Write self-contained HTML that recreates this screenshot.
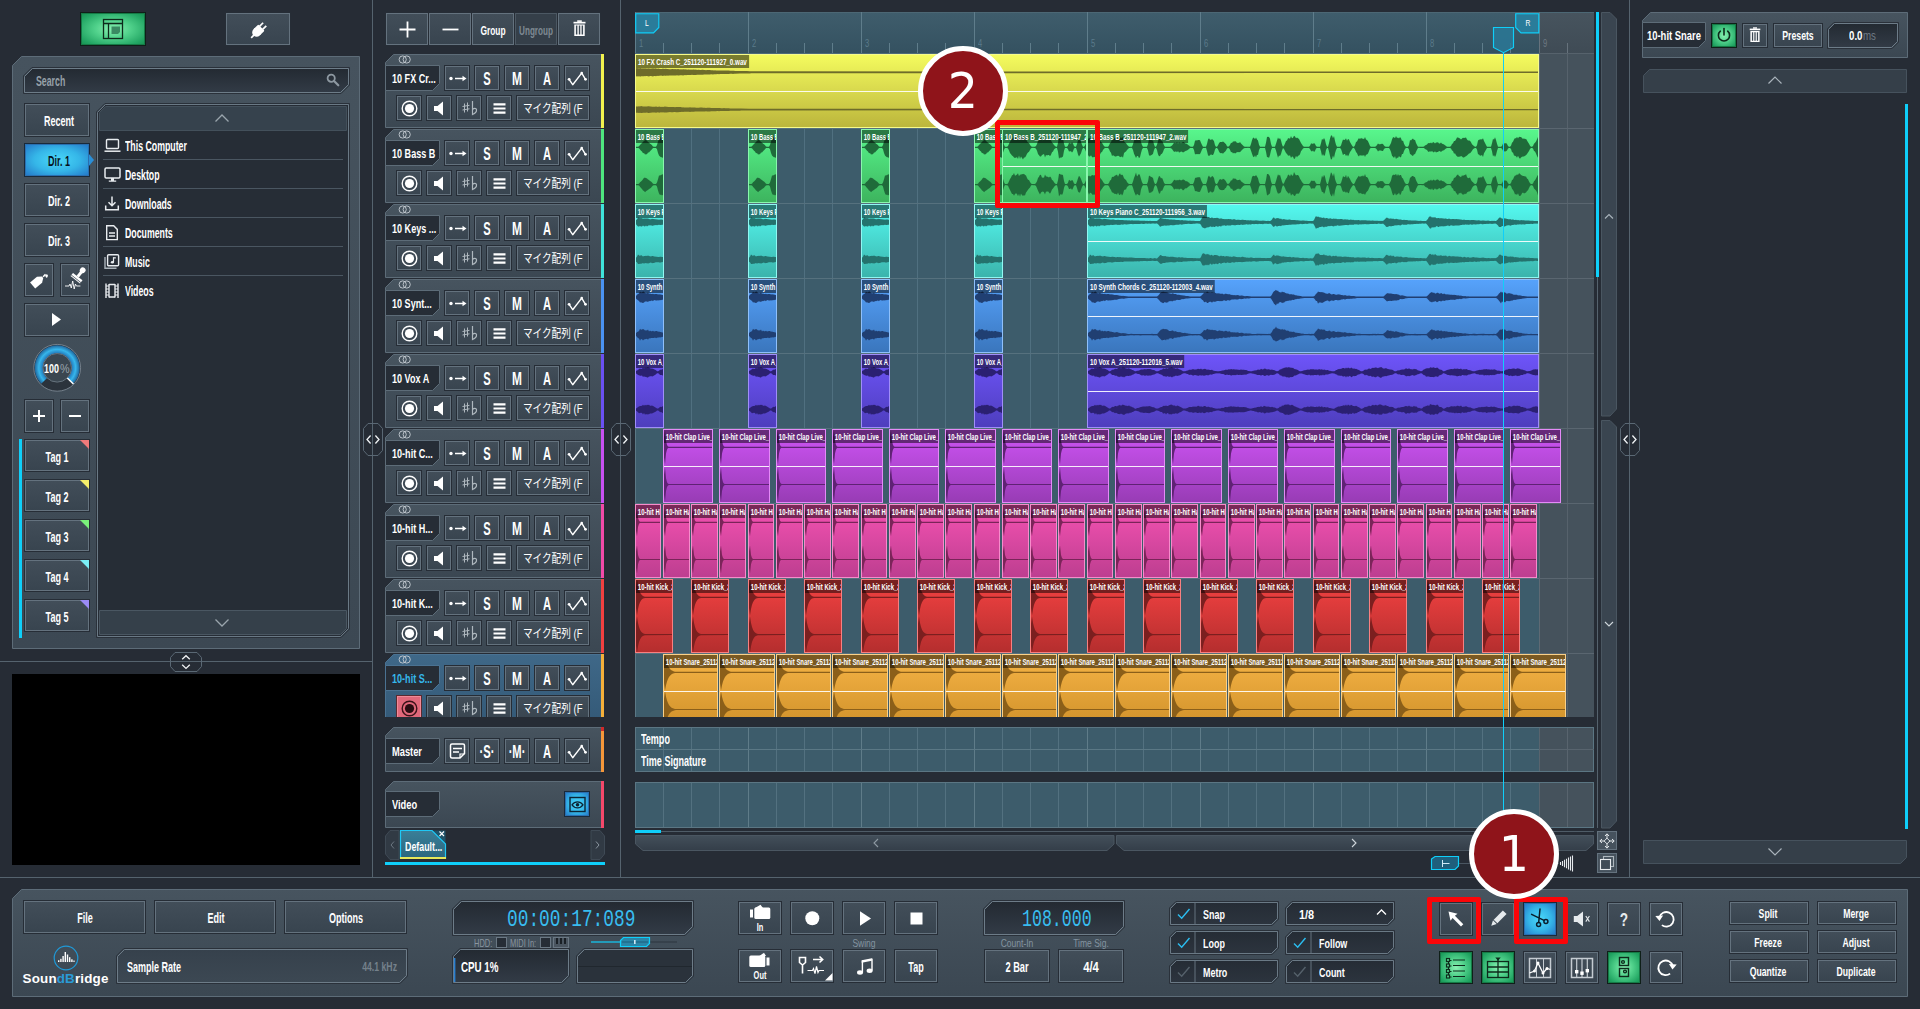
<!DOCTYPE html><html lang="en"><head><meta charset="utf-8"><title>SoundBridge</title><style>
*{box-sizing:border-box;margin:0;padding:0}
html,body{width:1920px;height:1009px;overflow:hidden;background:#262c35}
body{position:relative;font-family:"Liberation Sans","Noto Sans CJK JP",sans-serif;color:#fff}
.r,.b,.s,.t,.c{position:absolute}
.s{display:block;overflow:visible}
.t{white-space:nowrap;line-height:1;display:block}
.tc{text-align:center;transform-origin:50% 50%}
.tr{text-align:right}
.b{border:1px solid #262d36;background:linear-gradient(#424e59,#38444f);box-shadow:inset 0 0 0 1px #64727e}
.b.dis{background:#353f49;box-shadow:inset 0 0 0 1px #4c5863}
.b.grn{border-color:#0f1f18;background:radial-gradient(ellipse at 50% 50%,#8af0b2 0%,#4fd08a 40%,#22a563 80%,#16904f 100%);box-shadow:inset 0 0 0 1px #157a46}
.b.blu{border-color:#1a2a3a;background:radial-gradient(ellipse at 50% 50%,#4ad8f9 0%,#35b6e8 50%,#2374c6 100%);box-shadow:inset 0 0 0 1px #2a6fb0}
.b.red{border-color:#5a2a30;background:#e0687a;box-shadow:inset 0 0 0 1px #f08a98}
.c{overflow:hidden;border:1px solid}
.c .w{position:absolute;left:0;top:0}
.c .l{position:absolute;left:0;top:0;height:13px;line-height:14px;font-size:9.6px;font-weight:700;color:#fff;white-space:nowrap;background:rgba(0,0,0,.5);padding:0 3px 0 3px;transform:scaleX(.65);transform-origin:0 50%;overflow:hidden}
</style></head><body>
<svg width="0" height="0" style="position:absolute"><defs>
<linearGradient id="gs" x1="0" y1="0" x2="0" y2="1"><stop offset="0" stop-color="#232a32"/><stop offset="1" stop-color="#323b46"/></linearGradient>
<linearGradient id="gs2" x1="0" y1="0" x2="0" y2="1"><stop offset="0" stop-color="#252c35"/><stop offset="1" stop-color="#2c343e"/></linearGradient>
<linearGradient id="gs3" x1="0" y1="0" x2="0" y2="1"><stop offset="0" stop-color="#36414c"/><stop offset="1" stop-color="#3c4853"/></linearGradient>
<linearGradient id="gp" x1="0" y1="0" x2="0" y2="1"><stop offset="0" stop-color="#47545f"/><stop offset="1" stop-color="#3b4752"/></linearGradient>
<linearGradient id="gp2" x1="0" y1="0" x2="0" y2="1"><stop offset="0" stop-color="#46535e"/><stop offset="1" stop-color="#3c4853"/></linearGradient>
<linearGradient id="ghs" x1="0" y1="0" x2="0" y2="1"><stop offset="0" stop-color="#434f5a"/><stop offset="1" stop-color="#343e49"/></linearGradient>
<linearGradient id="gtab" x1="0" y1="0" x2="0" y2="1"><stop offset="0" stop-color="#3a7f98"/><stop offset="1" stop-color="#2b667e"/></linearGradient>
</defs></svg>
<div class="r" style="left:372px;top:0px;width:1px;height:877px;background:#55636e;"></div>
<div class="r" style="left:620px;top:0px;width:1px;height:877px;background:#55636e;"></div>
<div class="r" style="left:1629px;top:0px;width:1px;height:877px;background:#55636e;"></div>
<div class="r" style="left:0px;top:877px;width:1920px;height:1px;background:#55636e;"></div>
<div class="b grn" style="left:80px;top:12px;width:66px;height:34px;"></div>
<svg class="s" style="left:80px;top:12px;" width="66" height="34" viewBox="0 0 66 34"><g fill="none" stroke="#0e2a1c" stroke-width="1.3"><rect x="23.5" y="7.5" width="19" height="19"/><path d="M23.5 11.5h19M28.5 11.5v15"/></g><path d="M31.5 14.5h8.5v5.5l-2 2h-6.5z" fill="#3a8a63"/></svg>
<div class="b " style="left:225px;top:12px;width:66px;height:34px;"></div>
<svg class="s" style="left:226px;top:13px;" width="64" height="32" viewBox="0 0 64 32"><g transform="translate(33,17) rotate(45) scale(0.85)" fill="#fff"><rect x="-5.2" y="-4" width="10.4" height="8" rx="1.2"/><path d="M-5.2 2h10.4v2a5.2 5.2 0 0 1-10.4 0z"/><rect x="-3.6" y="-9.5" width="2" height="6"/><rect x="1.6" y="-9.5" width="2" height="6"/><rect x="-1" y="7" width="2" height="6"/></g></svg>
<svg class="s" style="left:12px;top:56px" width="348" height="593" viewBox="0 0 348 593"><polygon points="0.5,9.5 9.5,0.5 347.5,0.5 347.5,592.5 0.5,592.5" fill="url(#gp2)" stroke="#5d6c78" stroke-width="1"/></svg>
<svg class="s" style="left:23px;top:67px" width="327" height="27" viewBox="0 0 327 27"><polygon points="0.5,8.9 8.9,0.5 326.5,0.5 326.5,18.1 318.1,26.5 0.5,26.5" fill="none" stroke="#2a313a" stroke-width="1"/><polygon points="1.5,9.5 9.5,1.5 325.5,1.5 325.5,17.5 317.5,25.5 1.5,25.5" fill="url(#gs)" stroke="#6d7c88" stroke-width="1"/></svg>
<span class="t" style="left:36.0px;top:74.0px;font-size:14px;color:#97a1a9;transform:scaleX(0.626);transform-origin:0 50%;font-weight:700;">Search</span>
<svg class="s" style="left:325px;top:72px;" width="16" height="16" viewBox="0 0 16 16"><circle cx="6.2" cy="6.2" r="3.6" fill="none" stroke="#8d98a1" stroke-width="1.8"/><path d="M9 9l4.3 4.3" stroke="#8d98a1" stroke-width="2.2" stroke-linecap="round"/></svg>
<div class="b " style="left:24px;top:103px;width:66px;height:34px;"></div>
<span class="t tc" style="left:-91.0px;top:113.6px;width:300px;font-size:14px;color:#fff;transform:scaleX(0.644);font-weight:700;">Recent</span>
<div class="b blu" style="left:24px;top:143px;width:66px;height:34px;"></div>
<span class="t tc" style="left:-91.0px;top:153.6px;width:300px;font-size:14px;color:#06121c;transform:scaleX(0.644);font-weight:700;">Dir. 1</span>
<svg class="s" style="left:89px;top:154px;" width="6" height="12" viewBox="0 0 6 12"><path d="M0 0l5 6l-5 6z" fill="#2a8fd8"/></svg>
<div class="b " style="left:24px;top:183px;width:66px;height:34px;"></div>
<span class="t tc" style="left:-91.0px;top:193.6px;width:300px;font-size:14px;color:#fff;transform:scaleX(0.644);font-weight:700;">Dir. 2</span>
<div class="b " style="left:24px;top:223px;width:66px;height:34px;"></div>
<span class="t tc" style="left:-91.0px;top:233.6px;width:300px;font-size:14px;color:#fff;transform:scaleX(0.644);font-weight:700;">Dir. 3</span>
<div class="b " style="left:24px;top:263px;width:30px;height:34px;"></div>
<div class="b " style="left:60px;top:263px;width:30px;height:34px;"></div>
<svg class="s" style="left:24px;top:263px;" width="30" height="34" viewBox="0 0 30 34"><g transform="translate(14,18) rotate(-40)" fill="#fff"><path d="M-7 -4h9l4 3v2l-4 3h-9z"/><path d="M6.5 -0.6l3.5 -0.4v2l-3.5 -0.4z"/></g><ellipse cx="22.7" cy="13" rx="1.1" ry="1.7" fill="#fff" transform="rotate(20 22.7 13)"/></svg>
<svg class="s" style="left:60px;top:263px;" width="30" height="34" viewBox="0 0 30 34"><g transform="translate(19,12) rotate(38)" fill="#fff"><ellipse cx="0" cy="-6" rx="2.8" ry="3"/><rect x="-1.5" y="-5" width="3" height="7"/><path d="M-6 2h12v2.5h-12z"/><path d="M-6 5.6h12" stroke="#fff" stroke-width="1" fill="none"/></g><path d="M5 23h4l1-2 1.3 4 1.4-7 1.5 8 1.2-5 1 2h4" fill="none" stroke="#fff" stroke-width="0.9"/></svg>
<div class="b " style="left:24px;top:303px;width:66px;height:34px;"></div>
<svg class="s" style="left:24px;top:303px;" width="66" height="34" viewBox="0 0 66 34"><path d="M28 10l9 6.5l-9 6.5z" fill="#fff"/></svg>
<svg class="s" style="left:30px;top:342px;" width="54" height="54" viewBox="0 0 54 54"><defs><radialGradient id="kg" gradientUnits="userSpaceOnUse" cx="27.2" cy="25.8" r="23"><stop offset="0.6" stop-color="#1f6fb2"/><stop offset="0.8" stop-color="#36b6ec"/><stop offset="1" stop-color="#1d5c92"/></radialGradient></defs>
<circle cx="27.2" cy="25.8" r="23.4" fill="#2b333c" stroke="#7a8792" stroke-width="0.9"/>
<path d="M11.22,41.78A22.6,22.6 0 1 1 43.18,41.78L37.31,35.91A14.3,14.3 0 1 0 17.09,35.91Z" fill="url(#kg)"/>
<circle cx="27.2" cy="25.8" r="14.3" fill="#3a4650" stroke="#66737e" stroke-width="1"/>
<path d="M37.31,35.91L43.46,42.06" stroke="#fff" stroke-width="1.5"/></svg>
<span class="t" style="left:43.6px;top:362.2px;font-size:13.5px;color:#fff;transform:scaleX(0.662);transform-origin:0 50%;font-weight:700;">100</span>
<span class="t" style="left:60.0px;top:362.2px;font-size:13.5px;color:#9aa5ad;transform:scaleX(0.8);transform-origin:0 50%;font-weight:400;">%</span>
<div class="b " style="left:24px;top:399px;width:30px;height:34px;"></div>
<div class="b " style="left:60px;top:399px;width:30px;height:34px;"></div>
<svg class="s" style="left:24px;top:399px;" width="30" height="34" viewBox="0 0 30 34"><path d="M9 17h12M15 11v12" stroke="#fff" stroke-width="2" fill="none"/></svg>
<svg class="s" style="left:60px;top:399px;" width="30" height="34" viewBox="0 0 30 34"><path d="M9 17h12" stroke="#fff" stroke-width="2" fill="none"/></svg>
<div class="r" style="left:19px;top:439px;width:3px;height:199px;background:#0fcffa;"></div>
<div class="b " style="left:24px;top:439px;width:66px;height:33px;"></div>
<span class="t tc" style="left:-93.5px;top:450.0px;width:300px;font-size:14px;color:#fff;transform:scaleX(0.644);font-weight:700;">Tag 1</span>
<svg class="s" style="left:80px;top:440px;" width="9" height="9" viewBox="0 0 9 9"><path d="M0 0h9v9z" fill="#f07a7a"/></svg>
<div class="b " style="left:24px;top:479px;width:66px;height:33px;"></div>
<span class="t tc" style="left:-93.5px;top:490.0px;width:300px;font-size:14px;color:#fff;transform:scaleX(0.644);font-weight:700;">Tag 2</span>
<svg class="s" style="left:80px;top:480px;" width="9" height="9" viewBox="0 0 9 9"><path d="M0 0h9v9z" fill="#f5ee6a"/></svg>
<div class="b " style="left:24px;top:519px;width:66px;height:33px;"></div>
<span class="t tc" style="left:-93.5px;top:530.0px;width:300px;font-size:14px;color:#fff;transform:scaleX(0.644);font-weight:700;">Tag 3</span>
<svg class="s" style="left:80px;top:520px;" width="9" height="9" viewBox="0 0 9 9"><path d="M0 0h9v9z" fill="#7af07a"/></svg>
<div class="b " style="left:24px;top:559px;width:66px;height:33px;"></div>
<span class="t tc" style="left:-93.5px;top:570.0px;width:300px;font-size:14px;color:#fff;transform:scaleX(0.644);font-weight:700;">Tag 4</span>
<svg class="s" style="left:80px;top:560px;" width="9" height="9" viewBox="0 0 9 9"><path d="M0 0h9v9z" fill="#7aeef5"/></svg>
<div class="b " style="left:24px;top:599px;width:66px;height:33px;"></div>
<span class="t tc" style="left:-93.5px;top:610.0px;width:300px;font-size:14px;color:#fff;transform:scaleX(0.644);font-weight:700;">Tag 5</span>
<svg class="s" style="left:80px;top:600px;" width="9" height="9" viewBox="0 0 9 9"><path d="M0 0h9v9z" fill="#9a8af5"/></svg>
<svg class="s" style="left:96px;top:103px" width="254" height="535" viewBox="0 0 254 535"><polygon points="0.5,8.9 8.9,0.5 253.5,0.5 253.5,526.1 245.1,534.5 0.5,534.5" fill="none" stroke="#2a313a" stroke-width="1"/><polygon points="1.5,9.5 9.5,1.5 252.5,1.5 252.5,525.5 244.5,533.5 1.5,533.5" fill="#262d36" stroke="#6a7985" stroke-width="1"/></svg>
<svg class="s" style="left:99px;top:106px" width="248" height="25" viewBox="0 0 248 25"><polygon points="0.5,6.5 6.5,0.5 247.5,0.5 247.5,24.5 0.5,24.5" fill="#36424d" stroke="#43505b" stroke-width="1"/></svg>
<svg class="s" style="left:214px;top:112px;" width="16" height="12" viewBox="0 0 16 12"><path d="M1.5 9.5l6.5-6.5l6.5 6.5" fill="none" stroke="#9aa5ad" stroke-width="1.3"/></svg>
<svg class="s" style="left:99px;top:610px" width="248" height="25" viewBox="0 0 248 25"><polygon points="0.5,0.5 247.5,0.5 247.5,18.5 241.5,24.5 0.5,24.5" fill="#35404a" stroke="#4a5762" stroke-width="1"/></svg>
<svg class="s" style="left:214px;top:616.5px;" width="16" height="12" viewBox="0 0 16 12"><path d="M1.5 2.5l6.5 6.5l6.5-6.5" fill="none" stroke="#9aa5ad" stroke-width="1.3"/></svg>
<span class="t" style="left:125.0px;top:138.7px;font-size:14px;color:#fff;transform:scaleX(0.626);transform-origin:0 50%;font-weight:700;">This Computer</span>
<div class="r" style="left:103px;top:159px;width:240px;height:1px;background:#4a5661;"></div>
<span class="t" style="left:125.0px;top:167.7px;font-size:14px;color:#fff;transform:scaleX(0.626);transform-origin:0 50%;font-weight:700;">Desktop</span>
<div class="r" style="left:103px;top:188px;width:240px;height:1px;background:#4a5661;"></div>
<span class="t" style="left:125.0px;top:196.7px;font-size:14px;color:#fff;transform:scaleX(0.626);transform-origin:0 50%;font-weight:700;">Downloads</span>
<div class="r" style="left:103px;top:217px;width:240px;height:1px;background:#4a5661;"></div>
<span class="t" style="left:125.0px;top:225.7px;font-size:14px;color:#fff;transform:scaleX(0.626);transform-origin:0 50%;font-weight:700;">Documents</span>
<div class="r" style="left:103px;top:246px;width:240px;height:1px;background:#4a5661;"></div>
<span class="t" style="left:125.0px;top:254.7px;font-size:14px;color:#fff;transform:scaleX(0.626);transform-origin:0 50%;font-weight:700;">Music</span>
<div class="r" style="left:103px;top:275px;width:240px;height:1px;background:#4a5661;"></div>
<span class="t" style="left:125.0px;top:283.7px;font-size:14px;color:#fff;transform:scaleX(0.626);transform-origin:0 50%;font-weight:700;">Videos</span>
<svg class="s" style="left:104px;top:138px;" width="18" height="16" viewBox="0 0 18 16"><rect x="2.5" y="1.5" width="12" height="9" rx="1" fill="none" stroke="#e8ecef" stroke-width="1.4"/><path d="M0.5 13.2h16" stroke="#e8ecef" stroke-width="1.5"/></svg>
<svg class="s" style="left:104px;top:167px;" width="18" height="16" viewBox="0 0 18 16"><rect x="1" y="1" width="15" height="10" rx="1.2" fill="none" stroke="#e8ecef" stroke-width="1.5"/><path d="M7 11h3v2.4h2.2v1.3h-7.4v-1.3h2.2z" fill="#e8ecef"/></svg>
<svg class="s" style="left:104px;top:196px;" width="18" height="16" viewBox="0 0 18 16"><path d="M8 0.5v9M4.5 6.3l3.5 3.5l3.5-3.5" fill="none" stroke="#e8ecef" stroke-width="1.5"/><path d="M1.7 9.5v4.2h12.6v-4.2" fill="none" stroke="#e8ecef" stroke-width="1.5"/></svg>
<svg class="s" style="left:104px;top:225px;" width="18" height="16" viewBox="0 0 18 16"><path d="M2.7 0.8h7l3.6 3.6v10.2h-10.6z" fill="none" stroke="#e8ecef" stroke-width="1.4"/><path d="M5 8h6M5 11h6" stroke="#e8ecef" stroke-width="1.3"/></svg>
<svg class="s" style="left:104px;top:254px;" width="18" height="16" viewBox="0 0 18 16"><rect x="3.6" y="0.7" width="11" height="11" rx="1" fill="none" stroke="#e8ecef" stroke-width="1.4"/><path d="M1 3v11.3h11.5" fill="none" stroke="#aab3ba" stroke-width="1.4"/><path d="M9.5 3.2v5" stroke="#e8ecef" stroke-width="1.2"/><path d="M9.5 3.2h2.3v1.3h-2.3z" fill="#e8ecef"/><ellipse cx="8.4" cy="8.3" rx="1.6" ry="1.3" fill="#e8ecef"/></svg>
<svg class="s" style="left:104px;top:283px;" width="18" height="16" viewBox="0 0 18 16"><path d="M2 0.5v14.5M14 0.5v14.5M5 1v13.5M11 1v13.5" stroke="#e8ecef" stroke-width="1.4"/><path d="M5 1.5h6M5 14h6" stroke="#e8ecef" stroke-width="1.3"/><path d="M2 3h3M2 6h3M2 9h3M2 12h3M11 3h3M11 6h3M11 9h3M11 12h3" stroke="#e8ecef" stroke-width="1"/></svg>
<div class="r" style="left:0px;top:661px;width:372px;height:1px;background:#55636e;"></div>
<svg class="s" style="left:170px;top:651.5px;" width="32" height="21" viewBox="0 0 32 21"><polygon points="0.5,5.5 5,0.5 27,0.5 31.5,5.5 31.5,14.5 27,19.5 5,19.5 0.5,14.5" fill="none" stroke="#5a6874"/><path d="M12.2 7.3l3.8-3.6l3.8 3.6M12.2 12.8l3.8 3.6l3.8-3.6" fill="none" stroke="#f0f3f5" stroke-width="1.3"/></svg>
<div class="r" style="left:12px;top:674px;width:348px;height:191px;background:#000;"></div>
<div class="b " style="left:385px;top:12px;width:44px;height:34px;"></div>
<div class="b " style="left:428px;top:12px;width:44px;height:34px;"></div>
<div class="b " style="left:471px;top:12px;width:44px;height:34px;"></div>
<div class="b dis" style="left:514px;top:12px;width:44px;height:34px;"></div>
<div class="b " style="left:557px;top:12px;width:44px;height:34px;"></div>
<svg class="s" style="left:385.5px;top:12.5px;" width="43" height="33" viewBox="0 0 43 33"><path d="M13.5 16.5h16M21.5 8.5v16" stroke="#fff" stroke-width="1.8"/></svg>
<svg class="s" style="left:428.5px;top:12.5px;" width="43" height="33" viewBox="0 0 43 33"><path d="M13.5 16.5h16" stroke="#fff" stroke-width="1.8"/></svg>
<span class="t tc" style="left:343.0px;top:23.7px;width:300px;font-size:13px;color:#fff;transform:scaleX(0.644);font-weight:700;">Group</span>
<span class="t tc" style="left:386.0px;top:23.7px;width:300px;font-size:13px;color:#7f8a93;transform:scaleX(0.626);font-weight:700;">Ungroup</span>
<svg class="s" style="left:557.5px;top:12.5px;" width="43" height="33" viewBox="0 0 43 33"><g fill="#fff"><rect x="19.2" y="7.3" width="4.6" height="1.6"/><rect x="15.5" y="8.8" width="12" height="1.7"/><path d="M16.3 11.4h10.4v11.6h-10.4zM17.9 12.6v9h1.5v-9zM20.8 12.6v9h1.5v-9zM23.6 12.6v9h1.5v-9z" fill-rule="evenodd"/></g></svg>
<svg class="s" style="left:385px;top:54px" width="217" height="74" viewBox="0 0 217 74"><polygon points="0.5,8.5 8.5,0.5 216.5,0.5 216.5,73.5 0.5,73.5" fill="url(#gp)" stroke="#5d6c78" stroke-width="1"/></svg>
<div class="r" style="left:601px;top:54px;width:3px;height:74px;background:#f2f24e;"></div>
<svg class="s" style="left:398px;top:54.8px;" width="14" height="9" viewBox="0 0 14 9"><circle cx="4.7" cy="4.5" r="3.6" fill="none" stroke="#c5ccd2" stroke-width="0.9"/><circle cx="8.7" cy="4.5" r="3.6" fill="none" stroke="#c5ccd2" stroke-width="0.9"/></svg>
<svg class="s" style="left:385px;top:65px" width="55" height="26" viewBox="0 0 55 26"><polygon points="0.5,0.5 54.5,0.5 54.5,18.5 47.5,25.5 0.5,25.5" fill="#262d36" stroke="#5d6c78" stroke-width="1"/></svg>
<span class="t" style="left:392.0px;top:71.8px;font-size:13.5px;color:#fff;transform:scaleX(0.671);transform-origin:0 50%;font-weight:700;">10 FX Cr...</span>
<div class="b " style="left:444px;top:65px;width:26px;height:26px;"></div>
<div class="b " style="left:474px;top:65px;width:26px;height:26px;"></div>
<div class="b " style="left:504px;top:65px;width:26px;height:26px;"></div>
<div class="b " style="left:534px;top:65px;width:26px;height:26px;"></div>
<div class="b " style="left:564px;top:65px;width:26px;height:26px;"></div>
<svg class="s" style="left:444.5px;top:65.5px;" width="25" height="25" viewBox="0 0 25 25"><circle cx="6" cy="12.5" r="1.7" fill="#fff"/><path d="M10 12.5h9" stroke="#fff" stroke-width="1.5"/><path d="M17.5 9.7l4 2.8l-4 2.8z" fill="#fff"/></svg>
<span class="t tc" style="left:337.0px;top:69.5px;width:300px;font-size:18px;color:#fff;transform:scaleX(0.62);font-weight:700;">S</span>
<span class="t tc" style="left:367.0px;top:69.5px;width:300px;font-size:18px;color:#fff;transform:scaleX(0.66);font-weight:700;">M</span>
<span class="t tc" style="left:397.0px;top:69.5px;width:300px;font-size:18px;color:#fff;transform:scaleX(0.62);font-weight:700;">A</span>
<svg class="s" style="left:564.5px;top:65.5px;" width="25" height="25" viewBox="0 0 25 25"><path d="M4.1 13.3l3.6 5.4l9-11.6l3.8 6.2" fill="none" stroke="#fff" stroke-width="1.4" stroke-linejoin="round"/><circle cx="4.1" cy="13.3" r="1.4" fill="#fff"/><circle cx="16.7" cy="7.1" r="1.3" fill="#fff"/><circle cx="20.5" cy="13.3" r="1.4" fill="#fff"/></svg>
<div class="b " style="left:396px;top:95px;width:26px;height:26px;"></div>
<div class="b " style="left:426px;top:95px;width:26px;height:26px;"></div>
<div class="b " style="left:456px;top:95px;width:26px;height:26px;"></div>
<div class="b " style="left:486px;top:95px;width:26px;height:26px;"></div>
<div class="b " style="left:516px;top:95px;width:74px;height:26px;"></div>
<svg class="s" style="left:396.5px;top:95.5px;" width="25" height="25" viewBox="0 0 25 25"><circle cx="12.5" cy="12.5" r="7.3" fill="none" stroke="#fff" stroke-width="1.4"/><circle cx="12.5" cy="12.5" r="4.6" fill="#fff"/></svg>
<svg class="s" style="left:426.5px;top:95.5px;" width="25" height="25" viewBox="0 0 25 25"><path d="M7 10h3.5l5.5-4.5v14l-5.5-4.5h-3.5z" fill="#fff"/></svg>
<svg class="s" style="left:456.5px;top:95.5px;" width="25" height="25" viewBox="0 0 25 25"><g stroke="#aeb7be" fill="none" stroke-width="1"><path d="M7.5 7.5v9M10.5 6.5v9M5.5 10.5l7-1.2M5.5 14l7-1.2"/><path d="M15.5 5v13.5c3-1.2 4.2-3 4-4.8c-0.3-1.6-2.5-1.8-4 0" stroke-width="1.2"/></g></svg>
<svg class="s" style="left:486.5px;top:95.5px;" width="25" height="25" viewBox="0 0 25 25"><path d="M6.5 8.4h12M6.5 12.5h12M6.5 16.6h12" stroke="#fff" stroke-width="2.1"/></svg>
<div class="r" style="left:517px;top:96px;width:66px;height:24px;overflow:hidden">
<span class="t" style="left:6.0px;top:6.5px;font-size:12px;color:#fff;transform:scaleX(0.8);transform-origin:0 50%;font-weight:400;">マイク配列 (F</span>
</div>
<svg class="s" style="left:385px;top:129px" width="217" height="74" viewBox="0 0 217 74"><polygon points="0.5,8.5 8.5,0.5 216.5,0.5 216.5,73.5 0.5,73.5" fill="url(#gp)" stroke="#5d6c78" stroke-width="1"/></svg>
<div class="r" style="left:601px;top:129px;width:3px;height:74px;background:#4ee67e;"></div>
<svg class="s" style="left:398px;top:129.8px;" width="14" height="9" viewBox="0 0 14 9"><circle cx="4.7" cy="4.5" r="3.6" fill="none" stroke="#c5ccd2" stroke-width="0.9"/><circle cx="8.7" cy="4.5" r="3.6" fill="none" stroke="#c5ccd2" stroke-width="0.9"/></svg>
<svg class="s" style="left:385px;top:140px" width="55" height="26" viewBox="0 0 55 26"><polygon points="0.5,0.5 54.5,0.5 54.5,18.5 47.5,25.5 0.5,25.5" fill="#262d36" stroke="#5d6c78" stroke-width="1"/></svg>
<span class="t" style="left:392.0px;top:146.8px;font-size:13.5px;color:#fff;transform:scaleX(0.671);transform-origin:0 50%;font-weight:700;">10 Bass B</span>
<div class="b " style="left:444px;top:140px;width:26px;height:26px;"></div>
<div class="b " style="left:474px;top:140px;width:26px;height:26px;"></div>
<div class="b " style="left:504px;top:140px;width:26px;height:26px;"></div>
<div class="b " style="left:534px;top:140px;width:26px;height:26px;"></div>
<div class="b " style="left:564px;top:140px;width:26px;height:26px;"></div>
<svg class="s" style="left:444.5px;top:140.5px;" width="25" height="25" viewBox="0 0 25 25"><circle cx="6" cy="12.5" r="1.7" fill="#fff"/><path d="M10 12.5h9" stroke="#fff" stroke-width="1.5"/><path d="M17.5 9.7l4 2.8l-4 2.8z" fill="#fff"/></svg>
<span class="t tc" style="left:337.0px;top:144.5px;width:300px;font-size:18px;color:#fff;transform:scaleX(0.62);font-weight:700;">S</span>
<span class="t tc" style="left:367.0px;top:144.5px;width:300px;font-size:18px;color:#fff;transform:scaleX(0.66);font-weight:700;">M</span>
<span class="t tc" style="left:397.0px;top:144.5px;width:300px;font-size:18px;color:#fff;transform:scaleX(0.62);font-weight:700;">A</span>
<svg class="s" style="left:564.5px;top:140.5px;" width="25" height="25" viewBox="0 0 25 25"><path d="M4.1 13.3l3.6 5.4l9-11.6l3.8 6.2" fill="none" stroke="#fff" stroke-width="1.4" stroke-linejoin="round"/><circle cx="4.1" cy="13.3" r="1.4" fill="#fff"/><circle cx="16.7" cy="7.1" r="1.3" fill="#fff"/><circle cx="20.5" cy="13.3" r="1.4" fill="#fff"/></svg>
<div class="b " style="left:396px;top:170px;width:26px;height:26px;"></div>
<div class="b " style="left:426px;top:170px;width:26px;height:26px;"></div>
<div class="b " style="left:456px;top:170px;width:26px;height:26px;"></div>
<div class="b " style="left:486px;top:170px;width:26px;height:26px;"></div>
<div class="b " style="left:516px;top:170px;width:74px;height:26px;"></div>
<svg class="s" style="left:396.5px;top:170.5px;" width="25" height="25" viewBox="0 0 25 25"><circle cx="12.5" cy="12.5" r="7.3" fill="none" stroke="#fff" stroke-width="1.4"/><circle cx="12.5" cy="12.5" r="4.6" fill="#fff"/></svg>
<svg class="s" style="left:426.5px;top:170.5px;" width="25" height="25" viewBox="0 0 25 25"><path d="M7 10h3.5l5.5-4.5v14l-5.5-4.5h-3.5z" fill="#fff"/></svg>
<svg class="s" style="left:456.5px;top:170.5px;" width="25" height="25" viewBox="0 0 25 25"><g stroke="#aeb7be" fill="none" stroke-width="1"><path d="M7.5 7.5v9M10.5 6.5v9M5.5 10.5l7-1.2M5.5 14l7-1.2"/><path d="M15.5 5v13.5c3-1.2 4.2-3 4-4.8c-0.3-1.6-2.5-1.8-4 0" stroke-width="1.2"/></g></svg>
<svg class="s" style="left:486.5px;top:170.5px;" width="25" height="25" viewBox="0 0 25 25"><path d="M6.5 8.4h12M6.5 12.5h12M6.5 16.6h12" stroke="#fff" stroke-width="2.1"/></svg>
<div class="r" style="left:517px;top:171px;width:66px;height:24px;overflow:hidden">
<span class="t" style="left:6.0px;top:6.5px;font-size:12px;color:#fff;transform:scaleX(0.8);transform-origin:0 50%;font-weight:400;">マイク配列 (F</span>
</div>
<svg class="s" style="left:385px;top:204px" width="217" height="74" viewBox="0 0 217 74"><polygon points="0.5,8.5 8.5,0.5 216.5,0.5 216.5,73.5 0.5,73.5" fill="url(#gp)" stroke="#5d6c78" stroke-width="1"/></svg>
<div class="r" style="left:601px;top:204px;width:3px;height:74px;background:#3fe3da;"></div>
<svg class="s" style="left:398px;top:204.8px;" width="14" height="9" viewBox="0 0 14 9"><circle cx="4.7" cy="4.5" r="3.6" fill="none" stroke="#c5ccd2" stroke-width="0.9"/><circle cx="8.7" cy="4.5" r="3.6" fill="none" stroke="#c5ccd2" stroke-width="0.9"/></svg>
<svg class="s" style="left:385px;top:215px" width="55" height="26" viewBox="0 0 55 26"><polygon points="0.5,0.5 54.5,0.5 54.5,18.5 47.5,25.5 0.5,25.5" fill="#262d36" stroke="#5d6c78" stroke-width="1"/></svg>
<span class="t" style="left:392.0px;top:221.8px;font-size:13.5px;color:#fff;transform:scaleX(0.671);transform-origin:0 50%;font-weight:700;">10 Keys ...</span>
<div class="b " style="left:444px;top:215px;width:26px;height:26px;"></div>
<div class="b " style="left:474px;top:215px;width:26px;height:26px;"></div>
<div class="b " style="left:504px;top:215px;width:26px;height:26px;"></div>
<div class="b " style="left:534px;top:215px;width:26px;height:26px;"></div>
<div class="b " style="left:564px;top:215px;width:26px;height:26px;"></div>
<svg class="s" style="left:444.5px;top:215.5px;" width="25" height="25" viewBox="0 0 25 25"><circle cx="6" cy="12.5" r="1.7" fill="#fff"/><path d="M10 12.5h9" stroke="#fff" stroke-width="1.5"/><path d="M17.5 9.7l4 2.8l-4 2.8z" fill="#fff"/></svg>
<span class="t tc" style="left:337.0px;top:219.5px;width:300px;font-size:18px;color:#fff;transform:scaleX(0.62);font-weight:700;">S</span>
<span class="t tc" style="left:367.0px;top:219.5px;width:300px;font-size:18px;color:#fff;transform:scaleX(0.66);font-weight:700;">M</span>
<span class="t tc" style="left:397.0px;top:219.5px;width:300px;font-size:18px;color:#fff;transform:scaleX(0.62);font-weight:700;">A</span>
<svg class="s" style="left:564.5px;top:215.5px;" width="25" height="25" viewBox="0 0 25 25"><path d="M4.1 13.3l3.6 5.4l9-11.6l3.8 6.2" fill="none" stroke="#fff" stroke-width="1.4" stroke-linejoin="round"/><circle cx="4.1" cy="13.3" r="1.4" fill="#fff"/><circle cx="16.7" cy="7.1" r="1.3" fill="#fff"/><circle cx="20.5" cy="13.3" r="1.4" fill="#fff"/></svg>
<div class="b " style="left:396px;top:245px;width:26px;height:26px;"></div>
<div class="b " style="left:426px;top:245px;width:26px;height:26px;"></div>
<div class="b " style="left:456px;top:245px;width:26px;height:26px;"></div>
<div class="b " style="left:486px;top:245px;width:26px;height:26px;"></div>
<div class="b " style="left:516px;top:245px;width:74px;height:26px;"></div>
<svg class="s" style="left:396.5px;top:245.5px;" width="25" height="25" viewBox="0 0 25 25"><circle cx="12.5" cy="12.5" r="7.3" fill="none" stroke="#fff" stroke-width="1.4"/><circle cx="12.5" cy="12.5" r="4.6" fill="#fff"/></svg>
<svg class="s" style="left:426.5px;top:245.5px;" width="25" height="25" viewBox="0 0 25 25"><path d="M7 10h3.5l5.5-4.5v14l-5.5-4.5h-3.5z" fill="#fff"/></svg>
<svg class="s" style="left:456.5px;top:245.5px;" width="25" height="25" viewBox="0 0 25 25"><g stroke="#aeb7be" fill="none" stroke-width="1"><path d="M7.5 7.5v9M10.5 6.5v9M5.5 10.5l7-1.2M5.5 14l7-1.2"/><path d="M15.5 5v13.5c3-1.2 4.2-3 4-4.8c-0.3-1.6-2.5-1.8-4 0" stroke-width="1.2"/></g></svg>
<svg class="s" style="left:486.5px;top:245.5px;" width="25" height="25" viewBox="0 0 25 25"><path d="M6.5 8.4h12M6.5 12.5h12M6.5 16.6h12" stroke="#fff" stroke-width="2.1"/></svg>
<div class="r" style="left:517px;top:246px;width:66px;height:24px;overflow:hidden">
<span class="t" style="left:6.0px;top:6.5px;font-size:12px;color:#fff;transform:scaleX(0.8);transform-origin:0 50%;font-weight:400;">マイク配列 (F</span>
</div>
<svg class="s" style="left:385px;top:279px" width="217" height="74" viewBox="0 0 217 74"><polygon points="0.5,8.5 8.5,0.5 216.5,0.5 216.5,73.5 0.5,73.5" fill="url(#gp)" stroke="#5d6c78" stroke-width="1"/></svg>
<div class="r" style="left:601px;top:279px;width:3px;height:74px;background:#4a92f2;"></div>
<svg class="s" style="left:398px;top:279.8px;" width="14" height="9" viewBox="0 0 14 9"><circle cx="4.7" cy="4.5" r="3.6" fill="none" stroke="#c5ccd2" stroke-width="0.9"/><circle cx="8.7" cy="4.5" r="3.6" fill="none" stroke="#c5ccd2" stroke-width="0.9"/></svg>
<svg class="s" style="left:385px;top:290px" width="55" height="26" viewBox="0 0 55 26"><polygon points="0.5,0.5 54.5,0.5 54.5,18.5 47.5,25.5 0.5,25.5" fill="#262d36" stroke="#5d6c78" stroke-width="1"/></svg>
<span class="t" style="left:392.0px;top:296.8px;font-size:13.5px;color:#fff;transform:scaleX(0.671);transform-origin:0 50%;font-weight:700;">10 Synt...</span>
<div class="b " style="left:444px;top:290px;width:26px;height:26px;"></div>
<div class="b " style="left:474px;top:290px;width:26px;height:26px;"></div>
<div class="b " style="left:504px;top:290px;width:26px;height:26px;"></div>
<div class="b " style="left:534px;top:290px;width:26px;height:26px;"></div>
<div class="b " style="left:564px;top:290px;width:26px;height:26px;"></div>
<svg class="s" style="left:444.5px;top:290.5px;" width="25" height="25" viewBox="0 0 25 25"><circle cx="6" cy="12.5" r="1.7" fill="#fff"/><path d="M10 12.5h9" stroke="#fff" stroke-width="1.5"/><path d="M17.5 9.7l4 2.8l-4 2.8z" fill="#fff"/></svg>
<span class="t tc" style="left:337.0px;top:294.5px;width:300px;font-size:18px;color:#fff;transform:scaleX(0.62);font-weight:700;">S</span>
<span class="t tc" style="left:367.0px;top:294.5px;width:300px;font-size:18px;color:#fff;transform:scaleX(0.66);font-weight:700;">M</span>
<span class="t tc" style="left:397.0px;top:294.5px;width:300px;font-size:18px;color:#fff;transform:scaleX(0.62);font-weight:700;">A</span>
<svg class="s" style="left:564.5px;top:290.5px;" width="25" height="25" viewBox="0 0 25 25"><path d="M4.1 13.3l3.6 5.4l9-11.6l3.8 6.2" fill="none" stroke="#fff" stroke-width="1.4" stroke-linejoin="round"/><circle cx="4.1" cy="13.3" r="1.4" fill="#fff"/><circle cx="16.7" cy="7.1" r="1.3" fill="#fff"/><circle cx="20.5" cy="13.3" r="1.4" fill="#fff"/></svg>
<div class="b " style="left:396px;top:320px;width:26px;height:26px;"></div>
<div class="b " style="left:426px;top:320px;width:26px;height:26px;"></div>
<div class="b " style="left:456px;top:320px;width:26px;height:26px;"></div>
<div class="b " style="left:486px;top:320px;width:26px;height:26px;"></div>
<div class="b " style="left:516px;top:320px;width:74px;height:26px;"></div>
<svg class="s" style="left:396.5px;top:320.5px;" width="25" height="25" viewBox="0 0 25 25"><circle cx="12.5" cy="12.5" r="7.3" fill="none" stroke="#fff" stroke-width="1.4"/><circle cx="12.5" cy="12.5" r="4.6" fill="#fff"/></svg>
<svg class="s" style="left:426.5px;top:320.5px;" width="25" height="25" viewBox="0 0 25 25"><path d="M7 10h3.5l5.5-4.5v14l-5.5-4.5h-3.5z" fill="#fff"/></svg>
<svg class="s" style="left:456.5px;top:320.5px;" width="25" height="25" viewBox="0 0 25 25"><g stroke="#aeb7be" fill="none" stroke-width="1"><path d="M7.5 7.5v9M10.5 6.5v9M5.5 10.5l7-1.2M5.5 14l7-1.2"/><path d="M15.5 5v13.5c3-1.2 4.2-3 4-4.8c-0.3-1.6-2.5-1.8-4 0" stroke-width="1.2"/></g></svg>
<svg class="s" style="left:486.5px;top:320.5px;" width="25" height="25" viewBox="0 0 25 25"><path d="M6.5 8.4h12M6.5 12.5h12M6.5 16.6h12" stroke="#fff" stroke-width="2.1"/></svg>
<div class="r" style="left:517px;top:321px;width:66px;height:24px;overflow:hidden">
<span class="t" style="left:6.0px;top:6.5px;font-size:12px;color:#fff;transform:scaleX(0.8);transform-origin:0 50%;font-weight:400;">マイク配列 (F</span>
</div>
<svg class="s" style="left:385px;top:354px" width="217" height="74" viewBox="0 0 217 74"><polygon points="0.5,8.5 8.5,0.5 216.5,0.5 216.5,73.5 0.5,73.5" fill="url(#gp)" stroke="#5d6c78" stroke-width="1"/></svg>
<div class="r" style="left:601px;top:354px;width:3px;height:74px;background:#6a50f2;"></div>
<svg class="s" style="left:398px;top:354.8px;" width="14" height="9" viewBox="0 0 14 9"><circle cx="4.7" cy="4.5" r="3.6" fill="none" stroke="#c5ccd2" stroke-width="0.9"/><circle cx="8.7" cy="4.5" r="3.6" fill="none" stroke="#c5ccd2" stroke-width="0.9"/></svg>
<svg class="s" style="left:385px;top:365px" width="55" height="26" viewBox="0 0 55 26"><polygon points="0.5,0.5 54.5,0.5 54.5,18.5 47.5,25.5 0.5,25.5" fill="#262d36" stroke="#5d6c78" stroke-width="1"/></svg>
<span class="t" style="left:392.0px;top:371.8px;font-size:13.5px;color:#fff;transform:scaleX(0.671);transform-origin:0 50%;font-weight:700;">10 Vox A</span>
<div class="b " style="left:444px;top:365px;width:26px;height:26px;"></div>
<div class="b " style="left:474px;top:365px;width:26px;height:26px;"></div>
<div class="b " style="left:504px;top:365px;width:26px;height:26px;"></div>
<div class="b " style="left:534px;top:365px;width:26px;height:26px;"></div>
<div class="b " style="left:564px;top:365px;width:26px;height:26px;"></div>
<svg class="s" style="left:444.5px;top:365.5px;" width="25" height="25" viewBox="0 0 25 25"><circle cx="6" cy="12.5" r="1.7" fill="#fff"/><path d="M10 12.5h9" stroke="#fff" stroke-width="1.5"/><path d="M17.5 9.7l4 2.8l-4 2.8z" fill="#fff"/></svg>
<span class="t tc" style="left:337.0px;top:369.5px;width:300px;font-size:18px;color:#fff;transform:scaleX(0.62);font-weight:700;">S</span>
<span class="t tc" style="left:367.0px;top:369.5px;width:300px;font-size:18px;color:#fff;transform:scaleX(0.66);font-weight:700;">M</span>
<span class="t tc" style="left:397.0px;top:369.5px;width:300px;font-size:18px;color:#fff;transform:scaleX(0.62);font-weight:700;">A</span>
<svg class="s" style="left:564.5px;top:365.5px;" width="25" height="25" viewBox="0 0 25 25"><path d="M4.1 13.3l3.6 5.4l9-11.6l3.8 6.2" fill="none" stroke="#fff" stroke-width="1.4" stroke-linejoin="round"/><circle cx="4.1" cy="13.3" r="1.4" fill="#fff"/><circle cx="16.7" cy="7.1" r="1.3" fill="#fff"/><circle cx="20.5" cy="13.3" r="1.4" fill="#fff"/></svg>
<div class="b " style="left:396px;top:395px;width:26px;height:26px;"></div>
<div class="b " style="left:426px;top:395px;width:26px;height:26px;"></div>
<div class="b " style="left:456px;top:395px;width:26px;height:26px;"></div>
<div class="b " style="left:486px;top:395px;width:26px;height:26px;"></div>
<div class="b " style="left:516px;top:395px;width:74px;height:26px;"></div>
<svg class="s" style="left:396.5px;top:395.5px;" width="25" height="25" viewBox="0 0 25 25"><circle cx="12.5" cy="12.5" r="7.3" fill="none" stroke="#fff" stroke-width="1.4"/><circle cx="12.5" cy="12.5" r="4.6" fill="#fff"/></svg>
<svg class="s" style="left:426.5px;top:395.5px;" width="25" height="25" viewBox="0 0 25 25"><path d="M7 10h3.5l5.5-4.5v14l-5.5-4.5h-3.5z" fill="#fff"/></svg>
<svg class="s" style="left:456.5px;top:395.5px;" width="25" height="25" viewBox="0 0 25 25"><g stroke="#aeb7be" fill="none" stroke-width="1"><path d="M7.5 7.5v9M10.5 6.5v9M5.5 10.5l7-1.2M5.5 14l7-1.2"/><path d="M15.5 5v13.5c3-1.2 4.2-3 4-4.8c-0.3-1.6-2.5-1.8-4 0" stroke-width="1.2"/></g></svg>
<svg class="s" style="left:486.5px;top:395.5px;" width="25" height="25" viewBox="0 0 25 25"><path d="M6.5 8.4h12M6.5 12.5h12M6.5 16.6h12" stroke="#fff" stroke-width="2.1"/></svg>
<div class="r" style="left:517px;top:396px;width:66px;height:24px;overflow:hidden">
<span class="t" style="left:6.0px;top:6.5px;font-size:12px;color:#fff;transform:scaleX(0.8);transform-origin:0 50%;font-weight:400;">マイク配列 (F</span>
</div>
<svg class="s" style="left:385px;top:429px" width="217" height="74" viewBox="0 0 217 74"><polygon points="0.5,8.5 8.5,0.5 216.5,0.5 216.5,73.5 0.5,73.5" fill="url(#gp)" stroke="#5d6c78" stroke-width="1"/></svg>
<div class="r" style="left:601px;top:429px;width:3px;height:74px;background:#c850f2;"></div>
<svg class="s" style="left:398px;top:429.8px;" width="14" height="9" viewBox="0 0 14 9"><circle cx="4.7" cy="4.5" r="3.6" fill="none" stroke="#c5ccd2" stroke-width="0.9"/><circle cx="8.7" cy="4.5" r="3.6" fill="none" stroke="#c5ccd2" stroke-width="0.9"/></svg>
<svg class="s" style="left:385px;top:440px" width="55" height="26" viewBox="0 0 55 26"><polygon points="0.5,0.5 54.5,0.5 54.5,18.5 47.5,25.5 0.5,25.5" fill="#262d36" stroke="#5d6c78" stroke-width="1"/></svg>
<span class="t" style="left:392.0px;top:446.8px;font-size:13.5px;color:#fff;transform:scaleX(0.671);transform-origin:0 50%;font-weight:700;">10-hit C...</span>
<div class="b " style="left:444px;top:440px;width:26px;height:26px;"></div>
<div class="b " style="left:474px;top:440px;width:26px;height:26px;"></div>
<div class="b " style="left:504px;top:440px;width:26px;height:26px;"></div>
<div class="b " style="left:534px;top:440px;width:26px;height:26px;"></div>
<div class="b " style="left:564px;top:440px;width:26px;height:26px;"></div>
<svg class="s" style="left:444.5px;top:440.5px;" width="25" height="25" viewBox="0 0 25 25"><circle cx="6" cy="12.5" r="1.7" fill="#fff"/><path d="M10 12.5h9" stroke="#fff" stroke-width="1.5"/><path d="M17.5 9.7l4 2.8l-4 2.8z" fill="#fff"/></svg>
<span class="t tc" style="left:337.0px;top:444.5px;width:300px;font-size:18px;color:#fff;transform:scaleX(0.62);font-weight:700;">S</span>
<span class="t tc" style="left:367.0px;top:444.5px;width:300px;font-size:18px;color:#fff;transform:scaleX(0.66);font-weight:700;">M</span>
<span class="t tc" style="left:397.0px;top:444.5px;width:300px;font-size:18px;color:#fff;transform:scaleX(0.62);font-weight:700;">A</span>
<svg class="s" style="left:564.5px;top:440.5px;" width="25" height="25" viewBox="0 0 25 25"><path d="M4.1 13.3l3.6 5.4l9-11.6l3.8 6.2" fill="none" stroke="#fff" stroke-width="1.4" stroke-linejoin="round"/><circle cx="4.1" cy="13.3" r="1.4" fill="#fff"/><circle cx="16.7" cy="7.1" r="1.3" fill="#fff"/><circle cx="20.5" cy="13.3" r="1.4" fill="#fff"/></svg>
<div class="b " style="left:396px;top:470px;width:26px;height:26px;"></div>
<div class="b " style="left:426px;top:470px;width:26px;height:26px;"></div>
<div class="b " style="left:456px;top:470px;width:26px;height:26px;"></div>
<div class="b " style="left:486px;top:470px;width:26px;height:26px;"></div>
<div class="b " style="left:516px;top:470px;width:74px;height:26px;"></div>
<svg class="s" style="left:396.5px;top:470.5px;" width="25" height="25" viewBox="0 0 25 25"><circle cx="12.5" cy="12.5" r="7.3" fill="none" stroke="#fff" stroke-width="1.4"/><circle cx="12.5" cy="12.5" r="4.6" fill="#fff"/></svg>
<svg class="s" style="left:426.5px;top:470.5px;" width="25" height="25" viewBox="0 0 25 25"><path d="M7 10h3.5l5.5-4.5v14l-5.5-4.5h-3.5z" fill="#fff"/></svg>
<svg class="s" style="left:456.5px;top:470.5px;" width="25" height="25" viewBox="0 0 25 25"><g stroke="#aeb7be" fill="none" stroke-width="1"><path d="M7.5 7.5v9M10.5 6.5v9M5.5 10.5l7-1.2M5.5 14l7-1.2"/><path d="M15.5 5v13.5c3-1.2 4.2-3 4-4.8c-0.3-1.6-2.5-1.8-4 0" stroke-width="1.2"/></g></svg>
<svg class="s" style="left:486.5px;top:470.5px;" width="25" height="25" viewBox="0 0 25 25"><path d="M6.5 8.4h12M6.5 12.5h12M6.5 16.6h12" stroke="#fff" stroke-width="2.1"/></svg>
<div class="r" style="left:517px;top:471px;width:66px;height:24px;overflow:hidden">
<span class="t" style="left:6.0px;top:6.5px;font-size:12px;color:#fff;transform:scaleX(0.8);transform-origin:0 50%;font-weight:400;">マイク配列 (F</span>
</div>
<svg class="s" style="left:385px;top:504px" width="217" height="74" viewBox="0 0 217 74"><polygon points="0.5,8.5 8.5,0.5 216.5,0.5 216.5,73.5 0.5,73.5" fill="url(#gp)" stroke="#5d6c78" stroke-width="1"/></svg>
<div class="r" style="left:601px;top:504px;width:3px;height:74px;background:#f24aa8;"></div>
<svg class="s" style="left:398px;top:504.8px;" width="14" height="9" viewBox="0 0 14 9"><circle cx="4.7" cy="4.5" r="3.6" fill="none" stroke="#c5ccd2" stroke-width="0.9"/><circle cx="8.7" cy="4.5" r="3.6" fill="none" stroke="#c5ccd2" stroke-width="0.9"/></svg>
<svg class="s" style="left:385px;top:515px" width="55" height="26" viewBox="0 0 55 26"><polygon points="0.5,0.5 54.5,0.5 54.5,18.5 47.5,25.5 0.5,25.5" fill="#262d36" stroke="#5d6c78" stroke-width="1"/></svg>
<span class="t" style="left:392.0px;top:521.8px;font-size:13.5px;color:#fff;transform:scaleX(0.671);transform-origin:0 50%;font-weight:700;">10-hit H...</span>
<div class="b " style="left:444px;top:515px;width:26px;height:26px;"></div>
<div class="b " style="left:474px;top:515px;width:26px;height:26px;"></div>
<div class="b " style="left:504px;top:515px;width:26px;height:26px;"></div>
<div class="b " style="left:534px;top:515px;width:26px;height:26px;"></div>
<div class="b " style="left:564px;top:515px;width:26px;height:26px;"></div>
<svg class="s" style="left:444.5px;top:515.5px;" width="25" height="25" viewBox="0 0 25 25"><circle cx="6" cy="12.5" r="1.7" fill="#fff"/><path d="M10 12.5h9" stroke="#fff" stroke-width="1.5"/><path d="M17.5 9.7l4 2.8l-4 2.8z" fill="#fff"/></svg>
<span class="t tc" style="left:337.0px;top:519.5px;width:300px;font-size:18px;color:#fff;transform:scaleX(0.62);font-weight:700;">S</span>
<span class="t tc" style="left:367.0px;top:519.5px;width:300px;font-size:18px;color:#fff;transform:scaleX(0.66);font-weight:700;">M</span>
<span class="t tc" style="left:397.0px;top:519.5px;width:300px;font-size:18px;color:#fff;transform:scaleX(0.62);font-weight:700;">A</span>
<svg class="s" style="left:564.5px;top:515.5px;" width="25" height="25" viewBox="0 0 25 25"><path d="M4.1 13.3l3.6 5.4l9-11.6l3.8 6.2" fill="none" stroke="#fff" stroke-width="1.4" stroke-linejoin="round"/><circle cx="4.1" cy="13.3" r="1.4" fill="#fff"/><circle cx="16.7" cy="7.1" r="1.3" fill="#fff"/><circle cx="20.5" cy="13.3" r="1.4" fill="#fff"/></svg>
<div class="b " style="left:396px;top:545px;width:26px;height:26px;"></div>
<div class="b " style="left:426px;top:545px;width:26px;height:26px;"></div>
<div class="b " style="left:456px;top:545px;width:26px;height:26px;"></div>
<div class="b " style="left:486px;top:545px;width:26px;height:26px;"></div>
<div class="b " style="left:516px;top:545px;width:74px;height:26px;"></div>
<svg class="s" style="left:396.5px;top:545.5px;" width="25" height="25" viewBox="0 0 25 25"><circle cx="12.5" cy="12.5" r="7.3" fill="none" stroke="#fff" stroke-width="1.4"/><circle cx="12.5" cy="12.5" r="4.6" fill="#fff"/></svg>
<svg class="s" style="left:426.5px;top:545.5px;" width="25" height="25" viewBox="0 0 25 25"><path d="M7 10h3.5l5.5-4.5v14l-5.5-4.5h-3.5z" fill="#fff"/></svg>
<svg class="s" style="left:456.5px;top:545.5px;" width="25" height="25" viewBox="0 0 25 25"><g stroke="#aeb7be" fill="none" stroke-width="1"><path d="M7.5 7.5v9M10.5 6.5v9M5.5 10.5l7-1.2M5.5 14l7-1.2"/><path d="M15.5 5v13.5c3-1.2 4.2-3 4-4.8c-0.3-1.6-2.5-1.8-4 0" stroke-width="1.2"/></g></svg>
<svg class="s" style="left:486.5px;top:545.5px;" width="25" height="25" viewBox="0 0 25 25"><path d="M6.5 8.4h12M6.5 12.5h12M6.5 16.6h12" stroke="#fff" stroke-width="2.1"/></svg>
<div class="r" style="left:517px;top:546px;width:66px;height:24px;overflow:hidden">
<span class="t" style="left:6.0px;top:6.5px;font-size:12px;color:#fff;transform:scaleX(0.8);transform-origin:0 50%;font-weight:400;">マイク配列 (F</span>
</div>
<svg class="s" style="left:385px;top:579px" width="217" height="74" viewBox="0 0 217 74"><polygon points="0.5,8.5 8.5,0.5 216.5,0.5 216.5,73.5 0.5,73.5" fill="url(#gp)" stroke="#5d6c78" stroke-width="1"/></svg>
<div class="r" style="left:601px;top:579px;width:3px;height:74px;background:#f24040;"></div>
<svg class="s" style="left:398px;top:579.8px;" width="14" height="9" viewBox="0 0 14 9"><circle cx="4.7" cy="4.5" r="3.6" fill="none" stroke="#c5ccd2" stroke-width="0.9"/><circle cx="8.7" cy="4.5" r="3.6" fill="none" stroke="#c5ccd2" stroke-width="0.9"/></svg>
<svg class="s" style="left:385px;top:590px" width="55" height="26" viewBox="0 0 55 26"><polygon points="0.5,0.5 54.5,0.5 54.5,18.5 47.5,25.5 0.5,25.5" fill="#262d36" stroke="#5d6c78" stroke-width="1"/></svg>
<span class="t" style="left:392.0px;top:596.8px;font-size:13.5px;color:#fff;transform:scaleX(0.671);transform-origin:0 50%;font-weight:700;">10-hit K...</span>
<div class="b " style="left:444px;top:590px;width:26px;height:26px;"></div>
<div class="b " style="left:474px;top:590px;width:26px;height:26px;"></div>
<div class="b " style="left:504px;top:590px;width:26px;height:26px;"></div>
<div class="b " style="left:534px;top:590px;width:26px;height:26px;"></div>
<div class="b " style="left:564px;top:590px;width:26px;height:26px;"></div>
<svg class="s" style="left:444.5px;top:590.5px;" width="25" height="25" viewBox="0 0 25 25"><circle cx="6" cy="12.5" r="1.7" fill="#fff"/><path d="M10 12.5h9" stroke="#fff" stroke-width="1.5"/><path d="M17.5 9.7l4 2.8l-4 2.8z" fill="#fff"/></svg>
<span class="t tc" style="left:337.0px;top:594.5px;width:300px;font-size:18px;color:#fff;transform:scaleX(0.62);font-weight:700;">S</span>
<span class="t tc" style="left:367.0px;top:594.5px;width:300px;font-size:18px;color:#fff;transform:scaleX(0.66);font-weight:700;">M</span>
<span class="t tc" style="left:397.0px;top:594.5px;width:300px;font-size:18px;color:#fff;transform:scaleX(0.62);font-weight:700;">A</span>
<svg class="s" style="left:564.5px;top:590.5px;" width="25" height="25" viewBox="0 0 25 25"><path d="M4.1 13.3l3.6 5.4l9-11.6l3.8 6.2" fill="none" stroke="#fff" stroke-width="1.4" stroke-linejoin="round"/><circle cx="4.1" cy="13.3" r="1.4" fill="#fff"/><circle cx="16.7" cy="7.1" r="1.3" fill="#fff"/><circle cx="20.5" cy="13.3" r="1.4" fill="#fff"/></svg>
<div class="b " style="left:396px;top:620px;width:26px;height:26px;"></div>
<div class="b " style="left:426px;top:620px;width:26px;height:26px;"></div>
<div class="b " style="left:456px;top:620px;width:26px;height:26px;"></div>
<div class="b " style="left:486px;top:620px;width:26px;height:26px;"></div>
<div class="b " style="left:516px;top:620px;width:74px;height:26px;"></div>
<svg class="s" style="left:396.5px;top:620.5px;" width="25" height="25" viewBox="0 0 25 25"><circle cx="12.5" cy="12.5" r="7.3" fill="none" stroke="#fff" stroke-width="1.4"/><circle cx="12.5" cy="12.5" r="4.6" fill="#fff"/></svg>
<svg class="s" style="left:426.5px;top:620.5px;" width="25" height="25" viewBox="0 0 25 25"><path d="M7 10h3.5l5.5-4.5v14l-5.5-4.5h-3.5z" fill="#fff"/></svg>
<svg class="s" style="left:456.5px;top:620.5px;" width="25" height="25" viewBox="0 0 25 25"><g stroke="#aeb7be" fill="none" stroke-width="1"><path d="M7.5 7.5v9M10.5 6.5v9M5.5 10.5l7-1.2M5.5 14l7-1.2"/><path d="M15.5 5v13.5c3-1.2 4.2-3 4-4.8c-0.3-1.6-2.5-1.8-4 0" stroke-width="1.2"/></g></svg>
<svg class="s" style="left:486.5px;top:620.5px;" width="25" height="25" viewBox="0 0 25 25"><path d="M6.5 8.4h12M6.5 12.5h12M6.5 16.6h12" stroke="#fff" stroke-width="2.1"/></svg>
<div class="r" style="left:517px;top:621px;width:66px;height:24px;overflow:hidden">
<span class="t" style="left:6.0px;top:6.5px;font-size:12px;color:#fff;transform:scaleX(0.8);transform-origin:0 50%;font-weight:400;">マイク配列 (F</span>
</div>
<div class="r" style="left:385px;top:654px;width:217px;height:63px;overflow:hidden"><svg style="display:block" width="217" height="67" viewBox="0 0 217 67"><defs><linearGradient id="selg" x1="0" y1="0" x2="0" y2="1"><stop offset="0" stop-color="#3f6888"/><stop offset="1" stop-color="#345a78"/></linearGradient></defs><polygon points="0.5,8.5 8.5,0.5 216.5,0.5 216.5,66 0.5,66" fill="url(#selg)" stroke="#4a7292"/></svg></div>
<div class="r" style="left:601px;top:654px;width:3px;height:63px;background:#f5b03a;"></div>
<svg class="s" style="left:398px;top:654.8px;" width="14" height="9" viewBox="0 0 14 9"><circle cx="4.7" cy="4.5" r="3.6" fill="none" stroke="#c5ccd2" stroke-width="0.9"/><circle cx="8.7" cy="4.5" r="3.6" fill="none" stroke="#c5ccd2" stroke-width="0.9"/></svg>
<svg class="s" style="left:385px;top:665px" width="55" height="26" viewBox="0 0 55 26"><polygon points="0.5,0.5 54.5,0.5 54.5,18.5 47.5,25.5 0.5,25.5" fill="#262d36" stroke="#4a7292" stroke-width="1"/></svg>
<span class="t" style="left:392.0px;top:671.8px;font-size:13.5px;color:#35b8ec;transform:scaleX(0.671);transform-origin:0 50%;font-weight:700;">10-hit S...</span>
<div class="b " style="left:444px;top:665px;width:26px;height:26px;"></div>
<div class="b " style="left:474px;top:665px;width:26px;height:26px;"></div>
<div class="b " style="left:504px;top:665px;width:26px;height:26px;"></div>
<div class="b " style="left:534px;top:665px;width:26px;height:26px;"></div>
<div class="b " style="left:564px;top:665px;width:26px;height:26px;"></div>
<svg class="s" style="left:444.5px;top:665.5px;" width="25" height="25" viewBox="0 0 25 25"><circle cx="6" cy="12.5" r="1.7" fill="#fff"/><path d="M10 12.5h9" stroke="#fff" stroke-width="1.5"/><path d="M17.5 9.7l4 2.8l-4 2.8z" fill="#fff"/></svg>
<span class="t tc" style="left:337.0px;top:669.5px;width:300px;font-size:18px;color:#fff;transform:scaleX(0.62);font-weight:700;">S</span>
<span class="t tc" style="left:367.0px;top:669.5px;width:300px;font-size:18px;color:#fff;transform:scaleX(0.66);font-weight:700;">M</span>
<span class="t tc" style="left:397.0px;top:669.5px;width:300px;font-size:18px;color:#fff;transform:scaleX(0.62);font-weight:700;">A</span>
<svg class="s" style="left:564.5px;top:665.5px;" width="25" height="25" viewBox="0 0 25 25"><path d="M4.1 13.3l3.6 5.4l9-11.6l3.8 6.2" fill="none" stroke="#fff" stroke-width="1.4" stroke-linejoin="round"/><circle cx="4.1" cy="13.3" r="1.4" fill="#fff"/><circle cx="16.7" cy="7.1" r="1.3" fill="#fff"/><circle cx="20.5" cy="13.3" r="1.4" fill="#fff"/></svg>
<div class="r" style="left:0;top:0;width:700px;height:717px;overflow:hidden">
<div class="b red" style="left:396px;top:695px;width:26px;height:26px;"></div>
<div class="b " style="left:426px;top:695px;width:26px;height:26px;"></div>
<div class="b " style="left:456px;top:695px;width:26px;height:26px;"></div>
<div class="b " style="left:486px;top:695px;width:26px;height:26px;"></div>
<div class="b " style="left:516px;top:695px;width:74px;height:26px;"></div>
</div>
<div class="r" style="left:385px;top:696px;width:217px;height:21px;overflow:hidden">
<svg class="s" style="left:11.5px;top:-0.5px;" width="25" height="25" viewBox="0 0 25 25"><circle cx="12.5" cy="12.5" r="7.3" fill="none" stroke="#3a1218" stroke-width="1.4"/><circle cx="12.5" cy="12.5" r="4.6" fill="#2a0d12"/></svg>
<svg class="s" style="left:41.5px;top:-0.5px;" width="25" height="25" viewBox="0 0 25 25"><path d="M7 10h3.5l5.5-4.5v14l-5.5-4.5h-3.5z" fill="#fff"/></svg>
<svg class="s" style="left:71.5px;top:-0.5px;" width="25" height="25" viewBox="0 0 25 25"><g stroke="#aeb7be" fill="none" stroke-width="1"><path d="M7.5 7.5v9M10.5 6.5v9M5.5 10.5l7-1.2M5.5 14l7-1.2"/><path d="M15.5 5v13.5c3-1.2 4.2-3 4-4.8c-0.3-1.6-2.5-1.8-4 0" stroke-width="1.2"/></g></svg>
<svg class="s" style="left:101.5px;top:-0.5px;" width="25" height="25" viewBox="0 0 25 25"><path d="M6.5 8.4h12M6.5 12.5h12M6.5 16.6h12" stroke="#fff" stroke-width="2.1"/></svg>
</div>
<div class="r" style="left:517px;top:696px;width:66px;height:21px;overflow:hidden">
<span class="t" style="left:6.0px;top:6.5px;font-size:12px;color:#fff;transform:scaleX(0.8);transform-origin:0 50%;font-weight:400;">マイク配列 (F</span>
</div>
<svg class="s" style="left:385px;top:727px" width="217" height="45" viewBox="0 0 217 45"><polygon points="0.5,8.5 8.5,0.5 216.5,0.5 216.5,44.5 0.5,44.5" fill="url(#gp)" stroke="#5d6c78" stroke-width="1"/></svg>
<div class="r" style="left:601px;top:727px;width:3px;height:45px;background:#f5973a;"></div>
<div class="r" style="left:601px;top:727px;width:3px;height:4px;background:#d02a2a;"></div>
<svg class="s" style="left:385px;top:738px" width="55" height="26" viewBox="0 0 55 26"><polygon points="0.5,0.5 54.5,0.5 54.5,18.5 47.5,25.5 0.5,25.5" fill="#262d36" stroke="#5d6c78" stroke-width="1"/></svg>
<span class="t" style="left:392.0px;top:744.8px;font-size:13.5px;color:#fff;transform:scaleX(0.689);transform-origin:0 50%;font-weight:700;">Master</span>
<div class="b " style="left:444px;top:738px;width:26px;height:26px;"></div>
<div class="b " style="left:474px;top:738px;width:26px;height:26px;"></div>
<div class="b " style="left:504px;top:738px;width:26px;height:26px;"></div>
<div class="b " style="left:534px;top:738px;width:26px;height:26px;"></div>
<div class="b " style="left:564px;top:738px;width:26px;height:26px;"></div>
<svg class="s" style="left:444.5px;top:738.5px;" width="25" height="25" viewBox="0 0 25 25"><path d="M5.5 6.5a1.5 1.5 0 0 1 1.5-1.5h11a1.5 1.5 0 0 1 1.5 1.5v8l-4.5 4.5h-8a1.5 1.5 0 0 1-1.5-1.5z" fill="none" stroke="#fff" stroke-width="1.5"/><path d="M8 9.5h9M8 13h6" stroke="#fff" stroke-width="1.5"/><path d="M15 19v-4h4.5" fill="none" stroke="#fff" stroke-width="1.2"/></svg>
<span class="t tc" style="left:337.0px;top:742.5px;width:300px;font-size:18px;color:#fff;transform:scaleX(0.62);font-weight:700;">·S·</span>
<span class="t tc" style="left:367.0px;top:742.5px;width:300px;font-size:18px;color:#fff;transform:scaleX(0.62);font-weight:700;">·M·</span>
<span class="t tc" style="left:397.0px;top:742.5px;width:300px;font-size:18px;color:#fff;transform:scaleX(0.62);font-weight:700;">A</span>
<svg class="s" style="left:564.5px;top:738.5px;" width="25" height="25" viewBox="0 0 25 25"><path d="M4.1 13.3l3.6 5.4l9-11.6l3.8 6.2" fill="none" stroke="#fff" stroke-width="1.4" stroke-linejoin="round"/><circle cx="4.1" cy="13.3" r="1.4" fill="#fff"/><circle cx="16.7" cy="7.1" r="1.3" fill="#fff"/><circle cx="20.5" cy="13.3" r="1.4" fill="#fff"/></svg>
<svg class="s" style="left:385px;top:781px" width="217" height="47" viewBox="0 0 217 47"><polygon points="0.5,8.5 8.5,0.5 216.5,0.5 216.5,46.5 0.5,46.5" fill="url(#gp)" stroke="#5d6c78" stroke-width="1"/></svg>
<div class="r" style="left:601px;top:781px;width:3px;height:47px;background:#f5486a;"></div>
<svg class="s" style="left:385px;top:791px" width="55" height="26" viewBox="0 0 55 26"><polygon points="0.5,0.5 54.5,0.5 54.5,18.5 47.5,25.5 0.5,25.5" fill="#262d36" stroke="#5d6c78" stroke-width="1"/></svg>
<span class="t" style="left:392.0px;top:797.8px;font-size:13.5px;color:#fff;transform:scaleX(0.689);transform-origin:0 50%;font-weight:700;">Video</span>
<div class="b blu" style="left:564px;top:791px;width:26px;height:26px;"></div>
<svg class="s" style="left:564.5px;top:791.5px;" width="25" height="25" viewBox="0 0 25 25"><rect x="5" y="5.5" width="15" height="14" fill="none" stroke="#0c2636" stroke-width="1.4"/><path d="M7 12.8c3-4 8-4 11 0c-3 4-8 4-11 0z" fill="none" stroke="#0c2636" stroke-width="1.2"/><circle cx="12.5" cy="12.8" r="1.8" fill="#0c2636"/></svg>
<svg class="s" style="left:385px;top:830px;" width="220" height="30" viewBox="0 0 220 30"><polygon points="0.5,6 5,0.5 14,0.5 14,29.5 5,29.5 0.5,24" fill="#313a44" stroke="#3f4a55"/><path d="M9 11.5l-3 3.5l3 3.5" fill="none" stroke="#6d7882" stroke-width="1"/><polygon points="206,0.5 215,0.5 219.5,6 219.5,24 215,29.5 206,29.5" fill="#313a44" stroke="#3f4a55"/><path d="M211 11.5l3 3.5l-3 3.5" fill="none" stroke="#8b96a0" stroke-width="1"/><polygon points="46,0.5 60.5,0.5 60.5,15" fill="#1f5369"/><polygon points="15.5,0.5 47,0.5 60.5,14 60.5,28.5 15.5,28.5" fill="url(#gtab)" stroke="#1fc8f5" stroke-width="1.2"/><path d="M15 28h46" stroke="#e8e85a" stroke-width="2"/><path d="M54.5 1.5l4.5 4.5M59 1.5l-4.5 4.5" stroke="#fff" stroke-width="1.1"/></svg>
<span class="t" style="left:404.5px;top:840.0px;font-size:13px;color:#fff;transform:scaleX(0.68);transform-origin:0 50%;font-weight:700;">Default...</span>
<div class="r" style="left:385px;top:862px;width:220px;height:3px;background:#0fcffa;"></div>
<div class="r" style="left:635px;top:12px;width:904px;height:706px;background:#3d5c6b;"></div>
<div class="r" style="left:1539px;top:12px;width:55px;height:706px;background:#45525c;"></div>
<div class="r" style="left:635px;top:12px;width:904px;height:42px;background:linear-gradient(#3f5d6c,#345160);"></div>
<div class="r" style="left:1539px;top:12px;width:55px;height:42px;background:linear-gradient(#47545e,#3f4b55);"></div>
<div class="r" style="left:635px;top:12px;width:959px;height:1px;background:#4c6774;"></div>
<svg class="s" style="left:0;top:12px" width="1600" height="706" viewBox="0 0 1600 706"><path d="M635.5 0V706" stroke="#5b7885" stroke-width="1"/><path d="M635.5 0V42" stroke="#5f7d8b" stroke-width="1"/><path d="M663.5 31V706" stroke="#507080" stroke-width="1"/><path d="M663.5 31V42" stroke="#5f7d8b" stroke-width="1"/><path d="M691.5 31V706" stroke="#507080" stroke-width="1"/><path d="M691.5 31V42" stroke="#5f7d8b" stroke-width="1"/><path d="M719.5 31V706" stroke="#507080" stroke-width="1"/><path d="M719.5 31V42" stroke="#5f7d8b" stroke-width="1"/><path d="M748.5 0V706" stroke="#5b7885" stroke-width="1"/><path d="M748.5 0V42" stroke="#5f7d8b" stroke-width="1"/><path d="M776.5 31V706" stroke="#507080" stroke-width="1"/><path d="M776.5 31V42" stroke="#5f7d8b" stroke-width="1"/><path d="M804.5 31V706" stroke="#507080" stroke-width="1"/><path d="M804.5 31V42" stroke="#5f7d8b" stroke-width="1"/><path d="M832.5 31V706" stroke="#507080" stroke-width="1"/><path d="M832.5 31V42" stroke="#5f7d8b" stroke-width="1"/><path d="M861.5 0V706" stroke="#5b7885" stroke-width="1"/><path d="M861.5 0V42" stroke="#5f7d8b" stroke-width="1"/><path d="M889.5 31V706" stroke="#507080" stroke-width="1"/><path d="M889.5 31V42" stroke="#5f7d8b" stroke-width="1"/><path d="M917.5 31V706" stroke="#507080" stroke-width="1"/><path d="M917.5 31V42" stroke="#5f7d8b" stroke-width="1"/><path d="M945.5 31V706" stroke="#507080" stroke-width="1"/><path d="M945.5 31V42" stroke="#5f7d8b" stroke-width="1"/><path d="M974.5 0V706" stroke="#5b7885" stroke-width="1"/><path d="M974.5 0V42" stroke="#5f7d8b" stroke-width="1"/><path d="M1002.5 31V706" stroke="#507080" stroke-width="1"/><path d="M1002.5 31V42" stroke="#5f7d8b" stroke-width="1"/><path d="M1030.5 31V706" stroke="#507080" stroke-width="1"/><path d="M1030.5 31V42" stroke="#5f7d8b" stroke-width="1"/><path d="M1058.5 31V706" stroke="#507080" stroke-width="1"/><path d="M1058.5 31V42" stroke="#5f7d8b" stroke-width="1"/><path d="M1087.5 0V706" stroke="#5b7885" stroke-width="1"/><path d="M1087.5 0V42" stroke="#5f7d8b" stroke-width="1"/><path d="M1115.5 31V706" stroke="#507080" stroke-width="1"/><path d="M1115.5 31V42" stroke="#5f7d8b" stroke-width="1"/><path d="M1143.5 31V706" stroke="#507080" stroke-width="1"/><path d="M1143.5 31V42" stroke="#5f7d8b" stroke-width="1"/><path d="M1171.5 31V706" stroke="#507080" stroke-width="1"/><path d="M1171.5 31V42" stroke="#5f7d8b" stroke-width="1"/><path d="M1200.5 0V706" stroke="#5b7885" stroke-width="1"/><path d="M1200.5 0V42" stroke="#5f7d8b" stroke-width="1"/><path d="M1228.5 31V706" stroke="#507080" stroke-width="1"/><path d="M1228.5 31V42" stroke="#5f7d8b" stroke-width="1"/><path d="M1256.5 31V706" stroke="#507080" stroke-width="1"/><path d="M1256.5 31V42" stroke="#5f7d8b" stroke-width="1"/><path d="M1284.5 31V706" stroke="#507080" stroke-width="1"/><path d="M1284.5 31V42" stroke="#5f7d8b" stroke-width="1"/><path d="M1313.5 0V706" stroke="#5b7885" stroke-width="1"/><path d="M1313.5 0V42" stroke="#5f7d8b" stroke-width="1"/><path d="M1341.5 31V706" stroke="#507080" stroke-width="1"/><path d="M1341.5 31V42" stroke="#5f7d8b" stroke-width="1"/><path d="M1369.5 31V706" stroke="#507080" stroke-width="1"/><path d="M1369.5 31V42" stroke="#5f7d8b" stroke-width="1"/><path d="M1397.5 31V706" stroke="#507080" stroke-width="1"/><path d="M1397.5 31V42" stroke="#5f7d8b" stroke-width="1"/><path d="M1426.5 0V706" stroke="#5b7885" stroke-width="1"/><path d="M1426.5 0V42" stroke="#5f7d8b" stroke-width="1"/><path d="M1454.5 31V706" stroke="#507080" stroke-width="1"/><path d="M1454.5 31V42" stroke="#5f7d8b" stroke-width="1"/><path d="M1482.5 31V706" stroke="#507080" stroke-width="1"/><path d="M1482.5 31V42" stroke="#5f7d8b" stroke-width="1"/><path d="M1510.5 31V706" stroke="#507080" stroke-width="1"/><path d="M1510.5 31V42" stroke="#5f7d8b" stroke-width="1"/><path d="M1539.5 0V706" stroke="#5e6a74" stroke-width="1"/><path d="M1539.5 0V42" stroke="#66727c" stroke-width="1"/><path d="M1567.5 31V706" stroke="#56626c" stroke-width="1"/><path d="M1567.5 31V42" stroke="#66727c" stroke-width="1"/><path d="M635 116.5H1539" stroke="#56717e" stroke-width="1"/><path d="M1539 116.5H1594" stroke="#5a6670" stroke-width="1"/><path d="M635 191.5H1539" stroke="#56717e" stroke-width="1"/><path d="M1539 191.5H1594" stroke="#5a6670" stroke-width="1"/><path d="M635 266.5H1539" stroke="#56717e" stroke-width="1"/><path d="M1539 266.5H1594" stroke="#5a6670" stroke-width="1"/><path d="M635 341.5H1539" stroke="#56717e" stroke-width="1"/><path d="M1539 341.5H1594" stroke="#5a6670" stroke-width="1"/><path d="M635 416.5H1539" stroke="#56717e" stroke-width="1"/><path d="M1539 416.5H1594" stroke="#5a6670" stroke-width="1"/><path d="M635 491.5H1539" stroke="#56717e" stroke-width="1"/><path d="M1539 491.5H1594" stroke="#5a6670" stroke-width="1"/><path d="M635 566.5H1539" stroke="#56717e" stroke-width="1"/><path d="M1539 566.5H1594" stroke="#5a6670" stroke-width="1"/><path d="M635 641.5H1539" stroke="#56717e" stroke-width="1"/><path d="M1539 641.5H1594" stroke="#5a6670" stroke-width="1"/><path d="M635 41.5H1539" stroke="#4d6a78" stroke-width="1"/><path d="M1539 41.5H1594" stroke="#56626c" stroke-width="1"/></svg>
<span class="t" style="left:638.5px;top:37.8px;font-size:10.5px;color:#5b7b8b;transform:scaleX(0.72);transform-origin:0 50%;font-weight:400;">1</span>
<span class="t" style="left:751.5px;top:37.8px;font-size:10.5px;color:#5b7b8b;transform:scaleX(0.72);transform-origin:0 50%;font-weight:400;">2</span>
<span class="t" style="left:864.5px;top:37.8px;font-size:10.5px;color:#5b7b8b;transform:scaleX(0.72);transform-origin:0 50%;font-weight:400;">3</span>
<span class="t" style="left:977.5px;top:37.8px;font-size:10.5px;color:#5b7b8b;transform:scaleX(0.72);transform-origin:0 50%;font-weight:400;">4</span>
<span class="t" style="left:1090.5px;top:37.8px;font-size:10.5px;color:#5b7b8b;transform:scaleX(0.72);transform-origin:0 50%;font-weight:400;">5</span>
<span class="t" style="left:1203.5px;top:37.8px;font-size:10.5px;color:#5b7b8b;transform:scaleX(0.72);transform-origin:0 50%;font-weight:400;">6</span>
<span class="t" style="left:1316.5px;top:37.8px;font-size:10.5px;color:#5b7b8b;transform:scaleX(0.72);transform-origin:0 50%;font-weight:400;">7</span>
<span class="t" style="left:1429.5px;top:37.8px;font-size:10.5px;color:#5b7b8b;transform:scaleX(0.72);transform-origin:0 50%;font-weight:400;">8</span>
<span class="t" style="left:1542.5px;top:37.8px;font-size:10.5px;color:#6d7983;transform:scaleX(0.72);transform-origin:0 50%;font-weight:400;">9</span>
<div class="c" style="left:635px;top:54px;width:904px;height:74px;background:linear-gradient(#f4fb5e,#bcb63c);border-color:#f7fb8a"><svg class="w" width="904" height="74" viewBox="0 0 904 74" preserveAspectRatio="none"><path d="M0,13.1L1,13.3L2,13L3,13.4L4,13.1L5,13.2L6,13.5L7,13.2L8,13.6L9,13.3L10,13.6L11,13.6L12,13.4L13,13.2L14,13.7L15,13.6L16,13.4L17,13.2L18,13.5L19,13.6L20,13.3L21,13.9L22,13.5L23,13.8L24,13.9L25,14L26,13.9L27,13.6L28,14L29,13.8L30,13.8L31,14L32,13.9L33,14.2L35,14.2L36,14L37,14.1L38,14.2L39,14.1L40,14.2L41,14.3L42,14.1L43,14.2L44,14.4L45,14.3L46,14.4L47,14.2L48,14.3L49,14.6L50,14.3L51,14.7L52,14.6L53,14.5L54,14.7L55,14.6L56,14.8L57,14.6L58,14.6L59,14.7L60,14.6L61,14.9L62,14.8L63,14.8L64,14.9L65,14.9L66,14.8L67,14.8L68,15L69,15L70,15.2L71,15L72,15.1L73,15L74,15.1L75,15.3L77,15.2L78,15.4L79,15.3L80,15.4L82,15.5L83,15.4L84,15.5L86,15.5L87,15.5L88,15.6L93,15.6L94,15.8L96,15.8L97,15.7L98,15.8L99,15.9L104,16L105,16L106,16.1L110,16.1L111,16.1L114,16.2L115,16.3L903,16.6L903,18L115,18.3L114,18.4L111,18.5L110,18.5L106,18.5L105,18.6L104,18.6L99,18.7L98,18.8L97,18.9L96,18.8L94,18.8L93,19L88,19L87,19.1L86,19.1L84,19.1L83,19.2L82,19.1L80,19.2L79,19.3L78,19.2L77,19.4L75,19.3L74,19.5L73,19.6L72,19.5L71,19.6L70,19.4L69,19.6L68,19.6L67,19.8L66,19.8L65,19.7L64,19.7L63,19.8L62,19.8L61,19.7L60,20L59,19.9L58,20L57,20L56,19.8L55,20L54,19.9L53,20.1L52,20L51,19.9L50,20.3L49,20L48,20.3L47,20.4L46,20.2L45,20.3L44,20.2L43,20.4L42,20.5L41,20.3L40,20.4L39,20.5L38,20.4L37,20.5L36,20.6L35,20.4L33,20.4L32,20.7L31,20.6L30,20.8L29,20.8L28,20.6L27,21L26,20.7L25,20.6L24,20.7L23,20.8L22,21.1L21,20.7L20,21.3L19,21L18,21.1L17,21.4L16,21.2L15,21L14,20.9L13,21.4L12,21.2L11,21L10,21L9,21.3L8,21L7,21.4L6,21.1L5,21.4L4,21.5L3,21.2L2,21.6L1,21.3L0,21.5ZM0,51.4L1,51.4L2,51.4L3,51.3L4,51.5L5,51.1L6,51.2L7,51.5L10,51.5L11,51.6L12,51.3L13,51.2L14,51.5L15,51.5L16,51.8L17,51.8L18,51.7L19,51.7L20,51.5L21,51.8L22,51.9L23,51.5L24,51.7L25,51.9L26,51.8L27,52L28,51.8L29,51.6L30,51.7L31,51.8L32,52L33,52L34,52.1L35,51.9L36,52L37,51.9L38,52.1L39,52.2L40,52L41,52L42,52L44,52.1L45,52.1L46,52.4L47,52.3L48,52.4L49,52.5L50,52.5L51,52.4L52,52.5L53,52.4L54,52.3L55,52.5L56,52.4L58,52.4L59,52.6L60,52.7L63,52.7L64,52.6L65,52.6L66,52.6L67,52.7L69,52.7L70,52.9L71,52.8L72,52.8L73,52.8L74,52.8L75,52.9L76,53L77,52.9L78,53L79,52.9L80,52.9L81,53.1L82,53.1L83,53L84,53.1L85,53.2L87,53.2L88,53.1L89,53.2L90,53.3L91,53.2L92,53.2L93,53.3L94,53.4L95,53.4L96,53.4L97,53.5L98,53.4L99,53.4L101,53.4L102,53.5L104,53.5L105,53.6L113,53.7L114,53.8L903,54L903,55.2L114,55.4L113,55.5L105,55.6L104,55.7L102,55.7L101,55.8L99,55.8L98,55.8L97,55.7L96,55.8L95,55.8L94,55.8L93,55.9L92,56L91,56L90,55.9L89,56L88,56.1L87,56L85,56L84,56.1L83,56.2L82,56.1L81,56.1L80,56.3L79,56.3L78,56.2L77,56.3L76,56.2L75,56.3L74,56.4L73,56.4L72,56.4L71,56.4L70,56.3L69,56.5L67,56.5L66,56.6L65,56.6L64,56.6L63,56.5L60,56.5L59,56.6L58,56.8L56,56.8L55,56.7L54,56.9L53,56.8L52,56.7L51,56.8L50,56.7L49,56.7L48,56.8L47,56.9L46,56.8L45,57.1L44,57.1L42,57.2L41,57.2L40,57.2L39,57L38,57.1L37,57.3L36,57.2L35,57.3L34,57.1L33,57.2L32,57.2L31,57.4L30,57.5L29,57.6L28,57.4L27,57.2L26,57.4L25,57.3L24,57.5L23,57.7L22,57.3L21,57.4L20,57.7L19,57.5L18,57.5L17,57.4L16,57.4L15,57.7L14,57.7L13,58L12,57.9L11,57.6L10,57.7L7,57.7L6,58L5,58.1L4,57.7L3,57.9L2,57.8L1,57.8L0,57.8Z" fill="#6e6c2a"/></svg><div class="r" style="left:0;top:36px;width:100%;height:1px;background:#fff;opacity:.9"></div><div class="l">10 FX Crash C_251120-111927_0.wav</div></div>
<div class="c" style="left:635px;top:129px;width:29px;height:74px;background:linear-gradient(#58f68c,#3db45e);border-color:#8af7ae"><svg class="w" width="29" height="74" viewBox="0 0 29 74" preserveAspectRatio="none"><path d="M0,16.7L2,16.7L3,16.3L4,14.9L5,14L6,13L7,11.7L8,10.9L9,10L10,10L11,10.8L12,11.9L13,12.4L14,13.7L15,14.2L16,15.3L17,16.4L18,16.7L20,16.7L21,15.1L22,11.6L23,8.9L24,7.3L25,7.8L26,7.4L27,7.1L28,8.8L29,11.5L29,22.7L28,25.8L27,28L26,27.2L25,27.3L24,26.5L23,25.4L22,23L21,19.3L20,17.9L18,17.9L17,18.1L16,19.2L15,20.3L14,21.2L13,22.5L12,22.4L11,24.3L10,24.3L9,24.5L8,23.1L7,23.3L6,21.4L5,20.7L4,19.5L3,18.2L2,18L1,17.9L0,17.9ZM0,53.9L1,54L2,54L3,53.7L4,52.2L5,51.4L6,50.4L7,49.2L8,47.8L9,47.7L10,47.9L11,48.4L12,49.6L13,50.1L14,50.9L15,51.5L16,52.6L17,53.7L18,54L20,54L21,52.6L22,49.2L23,45.4L24,45.4L25,45.1L26,44.4L27,44.3L28,46.5L29,48.7L29,60.3L28,63.9L27,64.8L26,65.4L25,64.5L24,64.9L23,63.4L22,60.6L21,56.6L20,55.2L18,55.2L17,55.5L16,56.6L15,57.7L14,58.5L13,59.1L12,60.1L11,60.4L10,61.2L9,62.3L8,61.1L7,60.4L6,59L5,58L4,56.8L3,55.6L2,55.2L0,55.2Z" fill="#1f6b3a"/></svg><div class="l" style="transform:scaleX(0.61)">10 Bass B_251120-111947_2.wav</div></div>
<div class="c" style="left:748px;top:129px;width:29px;height:74px;background:linear-gradient(#58f68c,#3db45e);border-color:#8af7ae"><svg class="w" width="29" height="74" viewBox="0 0 29 74" preserveAspectRatio="none"><path d="M0,16.7L2,16.7L3,16.3L4,14.9L5,14L6,13L7,11.7L8,10.9L9,10L10,10L11,10.8L12,11.9L13,12.4L14,13.7L15,14.2L16,15.3L17,16.4L18,16.7L20,16.7L21,15.1L22,11.6L23,8.9L24,7.3L25,7.8L26,7.4L27,7.1L28,8.8L29,11.5L29,22.7L28,25.8L27,28L26,27.2L25,27.3L24,26.5L23,25.4L22,23L21,19.3L20,17.9L18,17.9L17,18.1L16,19.2L15,20.3L14,21.2L13,22.5L12,22.4L11,24.3L10,24.3L9,24.5L8,23.1L7,23.3L6,21.4L5,20.7L4,19.5L3,18.2L2,18L1,17.9L0,17.9ZM0,53.9L1,54L2,54L3,53.7L4,52.2L5,51.4L6,50.4L7,49.2L8,47.8L9,47.7L10,47.9L11,48.4L12,49.6L13,50.1L14,50.9L15,51.5L16,52.6L17,53.7L18,54L20,54L21,52.6L22,49.2L23,45.4L24,45.4L25,45.1L26,44.4L27,44.3L28,46.5L29,48.7L29,60.3L28,63.9L27,64.8L26,65.4L25,64.5L24,64.9L23,63.4L22,60.6L21,56.6L20,55.2L18,55.2L17,55.5L16,56.6L15,57.7L14,58.5L13,59.1L12,60.1L11,60.4L10,61.2L9,62.3L8,61.1L7,60.4L6,59L5,58L4,56.8L3,55.6L2,55.2L0,55.2Z" fill="#1f6b3a"/></svg><div class="l" style="transform:scaleX(0.61)">10 Bass B_251120-111947_2.wav</div></div>
<div class="c" style="left:861px;top:129px;width:29px;height:74px;background:linear-gradient(#58f68c,#3db45e);border-color:#8af7ae"><svg class="w" width="29" height="74" viewBox="0 0 29 74" preserveAspectRatio="none"><path d="M0,16.7L2,16.7L3,16.3L4,14.9L5,14L6,13L7,11.7L8,10.9L9,10L10,10L11,10.8L12,11.9L13,12.4L14,13.7L15,14.2L16,15.3L17,16.4L18,16.7L20,16.7L21,15.1L22,11.6L23,8.9L24,7.3L25,7.8L26,7.4L27,7.1L28,8.8L29,11.5L29,22.7L28,25.8L27,28L26,27.2L25,27.3L24,26.5L23,25.4L22,23L21,19.3L20,17.9L18,17.9L17,18.1L16,19.2L15,20.3L14,21.2L13,22.5L12,22.4L11,24.3L10,24.3L9,24.5L8,23.1L7,23.3L6,21.4L5,20.7L4,19.5L3,18.2L2,18L1,17.9L0,17.9ZM0,53.9L1,54L2,54L3,53.7L4,52.2L5,51.4L6,50.4L7,49.2L8,47.8L9,47.7L10,47.9L11,48.4L12,49.6L13,50.1L14,50.9L15,51.5L16,52.6L17,53.7L18,54L20,54L21,52.6L22,49.2L23,45.4L24,45.4L25,45.1L26,44.4L27,44.3L28,46.5L29,48.7L29,60.3L28,63.9L27,64.8L26,65.4L25,64.5L24,64.9L23,63.4L22,60.6L21,56.6L20,55.2L18,55.2L17,55.5L16,56.6L15,57.7L14,58.5L13,59.1L12,60.1L11,60.4L10,61.2L9,62.3L8,61.1L7,60.4L6,59L5,58L4,56.8L3,55.6L2,55.2L0,55.2Z" fill="#1f6b3a"/></svg><div class="l" style="transform:scaleX(0.61)">10 Bass B_251120-111947_2.wav</div></div>
<div class="c" style="left:974px;top:129px;width:29px;height:74px;background:linear-gradient(#58f68c,#3db45e);border-color:#8af7ae"><svg class="w" width="29" height="74" viewBox="0 0 29 74" preserveAspectRatio="none"><path d="M0,16.7L2,16.7L3,16.3L4,14.9L5,14L6,13L7,11.7L8,10.9L9,10L10,10L11,10.8L12,11.9L13,12.4L14,13.7L15,14.2L16,15.3L17,16.4L18,16.7L20,16.7L21,15.1L22,11.6L23,8.9L24,7.3L25,7.8L26,7.4L27,7.1L28,8.8L29,11.5L29,22.7L28,25.8L27,28L26,27.2L25,27.3L24,26.5L23,25.4L22,23L21,19.3L20,17.9L18,17.9L17,18.1L16,19.2L15,20.3L14,21.2L13,22.5L12,22.4L11,24.3L10,24.3L9,24.5L8,23.1L7,23.3L6,21.4L5,20.7L4,19.5L3,18.2L2,18L1,17.9L0,17.9ZM0,53.9L1,54L2,54L3,53.7L4,52.2L5,51.4L6,50.4L7,49.2L8,47.8L9,47.7L10,47.9L11,48.4L12,49.6L13,50.1L14,50.9L15,51.5L16,52.6L17,53.7L18,54L20,54L21,52.6L22,49.2L23,45.4L24,45.4L25,45.1L26,44.4L27,44.3L28,46.5L29,48.7L29,60.3L28,63.9L27,64.8L26,65.4L25,64.5L24,64.9L23,63.4L22,60.6L21,56.6L20,55.2L18,55.2L17,55.5L16,56.6L15,57.7L14,58.5L13,59.1L12,60.1L11,60.4L10,61.2L9,62.3L8,61.1L7,60.4L6,59L5,58L4,56.8L3,55.6L2,55.2L0,55.2Z" fill="#1f6b3a"/></svg><div class="l" style="transform:scaleX(0.61)">10 Bass B_251120-111947_2.wav</div></div>
<div class="c" style="left:1002px;top:129px;width:85px;height:74px;background:linear-gradient(#58f68c,#3db45e);border-color:#8af7ae"><svg class="w" width="85" height="74" viewBox="0 0 85 74" preserveAspectRatio="none"><path d="M0,11.5L1,14.8L2,16.7L4,16.7L5,16L6,13.7L7,11.8L8,10.2L9,8.6L10,8.3L11,6.1L12,7.6L13,7.9L14,7.2L15,6.2L16,8.5L17,6.1L18,8L19,6.6L20,6.2L21,6.7L22,7.2L23,8.7L24,11.2L25,12.4L26,13L27,14.7L28,16.2L29,16.7L32,16.7L33,15.9L34,14L35,11.1L36,9.4L37,7.6L38,8.6L39,10.3L40,10.1L41,10L42,7.9L43,9.6L44,9.8L45,9.9L46,9.9L47,8.6L48,10L49,12.5L50,13.5L51,14.9L52,16.1L53,16.7L54,16.7L55,12.8L56,5.5L57,7L58,7.5L59,6.3L60,8L61,13.7L62,16.7L64,16.7L65,15.4L66,12.8L67,13.2L68,13.5L69,12.3L70,13.5L71,16.1L72,16.7L73,16.7L74,14.1L75,10.4L76,8.9L77,9.6L78,11.7L79,14.7L80,16.7L81,16.7L82,15.4L83,12.9L84,11.1L84,23.5L83,21.8L82,19.3L81,17.9L80,17.9L79,19.9L78,23.2L77,25.1L76,26.6L75,24.4L74,20.5L73,18L72,17.9L71,18.5L70,21.3L69,22.5L68,21.3L67,21.3L66,21.5L65,19.2L64,17.9L62,17.9L61,20.8L60,26.4L59,27.3L58,27.8L57,27.5L56,28.8L55,21.7L54,17.9L53,17.9L52,18.5L51,19.6L50,21.4L49,22.3L48,24.8L47,26.3L46,24.9L45,24.9L44,25.5L43,25.1L42,27.4L41,24.1L40,24.4L39,24.9L38,26.5L37,26.4L36,25.2L35,24.1L34,20.8L33,18.7L32,17.9L31,18L30,17.8L29,17.9L28,18.3L27,20.1L26,21.7L25,22.4L24,23.8L23,26L22,27.5L21,27.5L20,29.5L19,28.1L18,26.4L17,29.1L16,25.5L15,29L14,27.3L13,27.4L12,27.9L11,27.6L10,26.3L9,25.5L8,24.2L7,23.1L6,20.6L5,18.6L4,17.9L3,17.9L2,18L1,19.8L0,22.7ZM0,48.7L1,52.2L2,53.9L4,54L5,53.4L6,51.3L7,49L8,47.4L9,45.3L10,44.9L11,43.1L12,45.8L13,45.2L14,44.4L15,43.3L16,46.2L17,44.4L18,44.7L19,44.1L20,44.3L21,43.8L22,45.1L23,45.6L24,48.1L25,49.8L26,49.9L27,51.9L28,53.4L29,54L32,54L33,53.1L34,51.2L35,48L36,46.7L37,44.7L38,45L39,47.7L40,47.5L41,47.8L42,44.6L43,46.6L44,46.4L45,46.9L46,47.4L47,46.6L48,47.5L49,49.9L50,50.6L51,52.2L52,53.5L53,54L54,53.9L55,50.3L56,43.7L57,43.9L58,44.7L59,44.6L60,45.2L61,51L62,54L63,54L64,53.9L65,52.7L66,49.8L67,50.6L68,51.1L69,49.7L70,50.9L71,53.5L72,54L73,54L74,51.4L75,48.3L76,45.8L77,47L78,48.9L79,51.7L80,54.1L81,54L82,52.8L83,49.9L84,48.1L84,61L83,59L82,56.5L81,55.2L80,55.2L79,57.1L78,59.8L77,62.5L76,62.5L75,61.5L74,58L73,55.2L72,55.2L71,55.7L70,58.2L69,59.9L68,58.3L67,59L66,59.1L65,56.6L64,55.2L63,55.2L62,55.3L61,57.8L60,63L59,65.1L58,63.9L57,64.8L56,66.5L55,59L54,55.3L53,55.2L52,55.7L51,56.9L50,58.5L49,59.5L48,62L47,63.7L46,62.4L45,61.3L44,61.7L43,61.6L42,64.6L41,62.3L40,61.6L39,61.8L38,62.6L37,64.5L36,62.7L35,60.8L34,58.2L33,55.9L32,55.2L30,55.2L29,55.1L28,55.6L27,57.4L26,58.5L25,59.8L24,61.3L23,62.6L22,65.4L21,65.3L20,65.7L19,65.3L18,63.4L17,66.8L16,63.7L15,66.3L14,64L13,63.3L12,63.9L11,65.8L10,64L9,63.9L8,61.9L7,60L6,58.1L5,55.7L4,55.2L3,55.2L2,55.1L1,57L0,60.3Z" fill="#1f6b3a"/></svg><div class="r" style="left:0;top:36px;width:100%;height:1px;background:#fff;opacity:.9"></div><div class="l">10 Bass B_251120-111947_2.wav</div></div>
<div class="c" style="left:1087px;top:129px;width:452px;height:74px;background:linear-gradient(#58f68c,#3db45e);border-color:#8af7ae"><svg class="w" width="452" height="74" viewBox="0 0 452 74" preserveAspectRatio="none"><path d="M0,9.2L1,7.7L2,8.5L3,8.9L4,8.1L5,7.1L6,8.6L7,6.9L8,6.8L9,6.5L10,9.2L11,7.8L12,10.4L13,12L14,12.7L15,14.4L16,15.9L17,16.7L20,16.7L21,15.6L22,13.1L23,12.3L24,8.9L25,9.7L26,9L27,7.4L28,8.4L29,7.7L30,9.4L31,8L32,6.7L33,8.4L34,7.2L35,7.4L36,11.1L37,12.4L38,13L39,14.7L40,15.8L41,16.7L44,16.7L45,14.3L46,10.8L47,7.9L48,5.8L49,8.7L50,7.8L51,6.1L52,7.6L53,11.9L54,14.9L55,16.7L59,16.7L60,14.1L61,9.1L62,8.9L63,8.8L64,10.4L65,10.6L66,14.6L67,16.7L68,16.7L69,14.7L70,11L71,8.6L72,8.5L73,10.8L74,10.6L75,12.8L76,15.3L77,16.7L82,16.7L83,16.3L84,15.6L85,14.3L86,12.8L87,12.8L88,13.2L89,11.9L90,13.4L91,12.5L92,12.7L93,13.2L94,12.7L95,11.9L96,12.2L97,13.3L98,13.8L99,13.8L100,15.1L101,15.5L102,16.6L103,16.7L105,16.7L106,14.9L107,10.8L108,10.3L109,10.6L110,10.1L111,10.1L112,10.3L113,12.8L114,15.1L115,16.7L118,16.7L119,14L120,9.4L121,8.3L122,9.8L123,9.7L124,9.3L125,9.8L126,11.2L127,15.2L128,16.7L129,16.7L130,15.3L131,13.3L132,11.9L133,11.9L134,12L135,11.4L136,12.2L137,13.2L138,14.2L139,16.2L140,16.7L141,16.2L142,15.1L143,12.8L144,13L145,11.4L146,11.4L147,11.3L148,11.5L149,13.1L150,12.8L151,13L152,11.9L153,13.6L154,14.6L155,15.5L156,16.4L157,16.7L162,16.7L163,14L164,10.3L165,7.8L166,7.7L167,9.2L168,7.5L169,9.5L170,10.4L171,14.8L172,16.7L177,16.7L178,12.7L179,7.1L180,6.8L181,7.1L182,8.8L183,14.1L184,16.7L187,16.7L188,13.8L189,10.4L190,7.4L191,9.3L192,8.1L193,10.4L194,14.5L195,16.7L196,15.8L197,13.4L198,11L199,10.4L200,8.2L201,8.3L202,8.8L203,5.9L204,8.3L205,7.7L206,5.7L207,6.6L208,8.2L209,7.5L210,8.3L211,8.9L212,11L213,13L214,14.6L215,16L216,16.7L221,16.7L222,15.7L223,13.6L224,13.4L225,14.1L226,13L227,14L228,16.1L229,16.7L232,16.7L233,13.2L234,8.8L235,10L236,8.1L237,10.1L238,14.2L239,16.7L240,16.7L241,13.3L242,8.4L243,5.6L244,5.4L245,8.3L246,6.1L247,11.1L248,14.7L249,16.7L252,16.7L253,15.5L254,12.2L255,9.4L256,10.1L257,9.8L258,8.3L259,10.7L260,9L261,9.6L262,12L263,13.7L264,15.5L265,16.7L266,16.7L267,15.2L268,12.1L269,11.5L270,9.4L271,8.1L272,9.3L273,7.8L274,8.8L275,8.4L276,9.2L277,7L278,9.5L279,10L280,11.2L281,13.4L282,16L283,16.7L287,16.7L288,16.2L289,14.9L290,13.4L291,14.2L292,14.2L293,14L294,13.7L295,13.9L296,15.5L297,16.4L298,16.7L301,16.7L302,15.1L303,13L304,9.4L305,7.3L306,7.3L307,8.2L308,5.9L309,8L310,7.5L311,8.5L312,7L313,8.2L314,10.9L315,10.6L316,13.8L317,15.7L318,16.7L320,16.7L321,14.9L322,10.1L323,10.5L324,9.2L325,8.5L326,10L327,9.8L328,12.9L329,14.9L330,16.7L335,16.7L336,16.6L337,15.5L338,14.9L339,14.4L340,13.3L341,12.9L342,13.3L343,12.4L344,13.6L345,12.1L346,12.6L347,13.4L348,12.4L349,12.6L350,12.3L351,13.6L352,13.4L353,12.6L354,13.8L355,13.9L356,14.4L357,15.2L358,16.1L359,16.7L362,16.7L363,16.1L364,14.1L365,13.2L366,10.9L367,10.9L368,9.4L369,7.4L370,7.5L371,8.1L372,8.6L373,9.4L374,8.5L375,7.7L376,7.9L377,7.7L378,7.5L379,9.6L380,10.5L381,10.6L382,10.8L383,12.3L384,14.2L385,15.2L386,16.1L387,16.7L388,16.7L389,15.2L390,10.4L391,9.7L392,9.5L393,9.3L394,9.6L395,8.3L396,10.9L397,12.9L398,15.1L399,16.7L403,16.7L404,13.2L405,8.8L406,9.7L407,7.3L408,10L409,13.8L410,16.7L413,16.7L414,15.9L415,13.6L416,13.2L417,13.5L418,12.9L419,13.9L420,15.9L421,16.7L422,16.7L423,15.7L424,12.8L425,11.8L426,9.5L427,8L428,8.6L429,6.8L430,8.4L431,6.8L432,6.9L433,6.9L434,7.9L435,8.9L436,8.3L437,9.2L438,8.8L439,10.5L440,12.2L441,13.7L442,15.8L443,16.7L444,16.7L445,16L446,13.7L447,12.8L448,11.5L449,9.3L450,7L451,6L451,27.6L450,27.8L449,25.9L448,23.6L447,21.6L446,21L445,18.5L444,17.9L443,17.9L442,18.9L441,20.9L440,22.5L439,24L438,25.3L437,25.8L436,26.4L435,26.5L434,26.8L433,27.6L432,28.7L431,27.8L430,25.7L429,27.7L428,26.3L427,25.7L426,25.5L425,22.4L424,22.2L423,18.9L422,17.9L421,17.9L420,18.6L419,20.4L418,21.3L417,21.4L416,21.3L415,20.7L414,18.8L413,17.9L410,17.9L409,21L408,25L407,27L406,25.1L405,26.4L404,21.3L403,17.9L402,17.9L401,18L399,17.9L398,19.7L397,21.6L396,23.2L395,27L394,25.1L393,25.6L392,25.8L391,24.6L390,24.3L389,19.4L388,17.9L387,18L386,18.5L385,19.3L384,20.7L383,22.2L382,23.3L381,23.4L380,24.4L379,25.4L378,26.2L377,26.7L376,27.5L375,27.6L374,26.4L373,25.9L372,26.8L371,26.4L370,27L369,26.2L368,25.3L367,23.3L366,23.7L365,21L364,20.5L363,18.5L362,18L361,17.9L360,17.9L359,18L358,18.4L357,19.2L356,20.2L355,20.5L354,21L353,22L352,21.2L351,20.9L350,22.1L349,22.1L348,22.5L347,21.2L346,22.2L345,22.2L344,20.8L343,21.9L342,21L341,22L340,21.6L339,20L338,19.6L337,19.1L336,18.1L335,17.9L333,17.9L332,18L331,17.8L330,17.9L329,19.8L328,21.7L327,24.3L326,24.3L325,26.1L324,25.4L323,24.5L322,24.1L321,19.6L320,17.9L319,18L318,17.9L317,19L316,21L315,24L314,24L313,27.3L312,27.3L311,25.9L310,28L309,27.4L308,29.2L307,26L306,27.9L305,26.8L304,25.7L303,22L302,19.5L301,18L300,17.9L298,17.9L297,18.3L296,19L295,21L294,21L293,20.5L292,20.6L291,20.6L290,21.5L289,19.7L288,18.4L287,17.9L286,17.9L285,17.9L283,17.9L282,18.6L281,21L280,23.5L279,24.6L278,24.7L277,27L276,24.8L275,25.9L274,25.1L273,26L272,24.8L271,26.4L270,25.4L269,23.3L268,22.1L267,19.5L266,17.9L265,17.8L264,19.1L263,20.8L262,22.1L261,24.4L260,26.4L259,24.4L258,26.3L257,24.1L256,24L255,25.3L254,22.1L253,19.1L252,17.9L251,17.9L250,18L249,17.9L248,20L247,23.2L246,28.1L245,25.4L244,28.8L243,29.8L242,26L241,21.6L240,17.9L239,17.9L238,20.1L237,25L236,26.1L235,24.1L234,25.9L233,21.2L232,17.9L231,17.9L229,17.9L228,18.4L227,20.9L226,21.9L225,20.5L224,21.5L223,20.9L222,18.9L221,17.9L216,17.9L215,18.6L214,19.9L213,21.2L212,24.2L211,25.6L210,25.8L209,27.4L208,25.7L207,28.4L206,28.9L205,26.8L204,26.4L203,28.1L202,25.3L201,25.8L200,25.5L199,24.1L198,23.1L197,21L196,18.9L195,17.9L194,20.4L193,24L192,26.1L191,25.6L190,27.8L189,24.3L188,20.5L187,17.9L184,17.9L183,20.6L182,25L181,28.1L180,26.9L179,27.3L178,21.7L177,17.9L175,17.9L174,17.9L172,17.9L171,19.9L170,24.9L169,24.7L168,27.6L167,25.3L166,27.2L165,26.6L164,23.7L163,20.7L162,17.9L161,17.9L160,17.8L159,17.9L157,17.9L156,18.2L155,19.1L154,20L153,20.9L152,22.3L151,22L150,22.2L149,21.9L148,23L147,23.4L146,22.7L145,23.5L144,21.9L143,22.2L142,19.7L141,18.3L140,17.9L139,18.4L138,20.4L137,21.7L136,22.6L135,23.8L134,23L133,23.2L132,23.1L131,21.5L130,19.3L129,17.9L128,17.9L127,19.4L126,23L125,25L124,25.1L123,24.3L122,25.3L121,26L120,25.2L119,20.9L118,17.8L117,17.9L116,17.9L115,17.9L114,19.6L113,22L112,24.1L111,24.2L110,23.9L109,24.2L108,23.9L107,24.4L106,19.9L105,17.9L103,18L102,18.1L101,19L100,19.7L99,20.5L98,20.7L97,21.2L96,22.1L95,22.6L94,21.8L93,21.6L92,22.2L91,22.5L90,20.9L89,22.2L88,21.3L87,21.7L86,21.8L85,20.5L84,18.9L83,18.3L82,17.9L80,17.9L79,17.9L78,17.9L77,17.9L76,19.3L75,22.1L74,23.8L73,24.3L72,26.1L71,26.2L70,24.2L69,19.9L68,17.9L67,17.9L66,20.1L65,23.8L64,24.7L63,25.3L62,25.8L61,25.2L60,20.6L59,17.9L58,17.9L57,18L55,17.9L54,19.5L53,23L52,26.9L51,28.3L50,26L49,26.1L48,27.9L47,25.8L46,23.8L45,20.1L44,17.9L43,17.8L42,17.9L41,17.9L40,18.9L39,19.9L38,21.4L37,22L36,23.2L35,27.7L34,26.5L33,26.8L32,27.3L31,26.1L30,25.8L29,26L28,26.5L27,26.4L26,25.7L25,25.2L24,26.1L23,22.8L22,21.5L21,19L20,17.9L17,17.9L16,18.8L15,20.1L14,21.9L13,22.6L12,24.6L11,27.5L10,26.1L9,28.5L8,27.7L7,27.2L6,26.7L5,27.4L4,27.1L3,25.3L2,26.5L1,26.5L0,24.9ZM0,46.6L1,45.6L2,46.4L3,45.9L4,45L5,45.3L6,45.5L7,45L8,43.8L9,44L10,45.8L11,45.3L12,47.5L13,49L14,50L15,51.8L16,53.2L17,54L18,54L19,54.1L20,54L21,52.9L22,50.5L23,49.9L24,46.8L25,47.1L26,46.6L27,45.6L28,45.2L29,44.4L30,46.7L31,44.5L32,43.2L33,45.2L34,44.5L35,45.6L36,48.3L37,49.2L38,50.1L39,52.1L40,53.2L41,54.1L42,54L43,54.1L44,54.1L45,51.5L46,48L47,45.5L48,42.5L49,46.6L50,45.2L51,43.8L52,45.4L53,48.9L54,52.2L55,54L56,54.1L57,53.9L58,54L59,54L60,51.4L61,45.6L62,46.3L63,46.7L64,47.2L65,48L66,52L67,54L68,54L69,52.2L70,48.8L71,46.1L72,46.4L73,48.6L74,47.8L75,50.1L76,52.8L77,54.1L78,54L79,54.1L80,54L81,53.9L82,53.9L83,53.7L84,53L85,51.5L86,50L87,49.8L88,50.8L89,49.7L90,50.4L91,49.7L92,49.7L93,50.4L94,50.1L95,49.6L96,49.7L97,50.6L98,51.4L99,50.9L100,52.3L101,52.6L102,53.9L103,54L104,54L105,54L106,52.1L107,48.2L108,47.6L109,47.7L110,46.9L111,47.5L112,47L113,50.1L114,52.2L115,54L116,54L117,54.1L118,53.9L119,51.5L120,47.1L121,45.6L122,47.2L123,47.6L124,46.1L125,46.4L126,48.1L127,52.6L128,54L129,54L130,52.5L131,50.3L132,48.9L133,49.6L134,49.7L135,48.7L136,49.2L137,50.1L138,51.5L139,53.4L140,54L141,53.5L142,52.2L143,50.3L144,50.6L145,48.2L146,48.8L147,48.5L148,48.9L149,50.3L150,50L151,50L152,49.5L153,51.3L154,51.9L155,52.8L156,53.6L157,54L162,54L163,51.5L164,47.1L165,45.8L166,45.9L167,46.3L168,45.1L169,46.6L170,48.2L171,52.2L172,54L173,54L174,54L175,54L176,54L177,54L178,49.9L179,44L180,43.9L181,44.7L182,46.7L183,51.4L184,54L185,54L186,54L187,54.1L188,51L189,47.4L190,44.3L191,45.8L192,44.8L193,48.3L194,51.7L195,54L196,53.2L197,50.7L198,48.8L199,47.5L200,44.8L201,44.8L202,46.6L203,44.1L204,45.6L205,45.7L206,42.1L207,44L208,45.4L209,44.9L210,45L211,46.2L212,48.8L213,50.2L214,52.1L215,53.2L216,54L217,54L218,53.9L219,54L220,54L221,54.1L222,52.9L223,51.1L224,50.4L225,51.2L226,50.5L227,51.4L228,53.4L229,54L232,53.9L233,50.4L234,45.4L235,47.7L236,44.7L237,46.8L238,51.3L239,54L240,54L241,50.2L242,46.2L243,42.2L244,43.7L245,46.4L246,43L247,48.9L248,51.9L249,54L252,54L253,53L254,49.7L255,46.3L256,46.7L257,47.2L258,44.8L259,48.4L260,45.8L261,47.6L262,48.9L263,51.3L264,52.7L265,54L266,54L267,52.6L268,49.9L269,48.6L270,46.8L271,45.7L272,47.3L273,45.8L274,46.4L275,45.3L276,46.7L277,44.1L278,47L279,47.1L280,48.3L281,50.8L282,53.3L283,54L284,54L285,54L286,54L287,54L288,53.4L289,52.3L290,50.9L291,51.7L292,51.3L293,51L294,51.3L295,51.2L296,52.7L297,53.7L298,54L299,53.9L301,54L302,52.4L303,50.4L304,46.1L305,44.8L306,44.7L307,45L308,43.8L309,45.9L310,44L311,45.7L312,45L313,45L314,47.7L315,48.5L316,51L317,53L318,53.9L319,54L320,54L321,52.3L322,47.7L323,47.2L324,45.9L325,45.9L326,46.8L327,47.3L328,50.3L329,52.2L330,54L334,53.9L335,54.1L336,53.8L337,52.7L338,52.3L339,52L340,50.8L341,50.5L342,50.8L343,49.4L344,51.1L345,49.7L346,49.7L347,50.7L348,49.9L349,49.4L350,49.6L351,50.6L352,50.9L353,50L354,51.1L355,51.2L356,51.5L357,52.6L358,53.3L359,54.1L360,54L361,54L362,54L363,53.5L364,51L365,50.8L366,47.8L367,47.7L368,46.4L369,44.9L370,44.5L371,45.9L372,46.5L373,47.3L374,45.3L375,45.9L376,44.9L377,45.3L378,44L379,47.1L380,48.3L381,47.9L382,47.5L383,49.9L384,51.4L385,52.2L386,53.4L387,54L388,54L389,52.4L390,47.4L391,47.7L392,47.4L393,47.2L394,47.4L395,45.7L396,47.7L397,50L398,52.2L399,54L402,54L403,54L404,50.7L405,46.9L406,47.7L407,45.4L408,46.8L409,51.1L410,54L412,54L413,54L414,53.4L415,50.9L416,50.5L417,50.6L418,50.6L419,51.3L420,53.2L421,54L422,54L423,53L424,49.9L425,49.5L426,47L427,45.4L428,45.4L429,44.2L430,45.1L431,43.2L432,43.7L433,44.9L434,45.6L435,46L436,46L437,46.4L438,46.6L439,48.4L440,49.3L441,51.4L442,53.2L443,53.9L444,54L445,53.4L446,51.3L447,50.2L448,48.4L449,46.5L450,44.8L451,43.9L451,67L450,65.4L449,62.2L448,60.6L447,59.5L446,58.6L445,55.9L444,55.2L443,55.2L442,56L441,58L440,60.2L439,61L438,62.6L437,63.1L436,63.5L435,62.6L434,63.2L433,65.3L432,65.9L431,65.8L430,63.3L429,65L428,64.1L427,64.6L426,61.8L425,59.9L424,58.8L423,56.1L422,55.2L421,55.2L420,56.1L419,58.3L418,58.8L417,58.2L416,58.6L415,58.3L414,56L413,55.2L410,55.2L409,58.2L408,61.7L407,64.9L406,61.5L405,63.1L404,59L403,55.2L402,55.2L401,55.3L400,55.2L399,55.2L398,56.7L397,59L396,61.5L395,63.9L394,62.4L393,63.2L392,62.3L391,61.8L390,61L389,56.6L388,55.2L387,55.2L386,55.8L385,56.6L384,58L383,60.1L382,61.2L381,61.4L380,61.7L379,62.4L378,64.3L377,63.6L376,64.4L375,64.6L374,64.2L373,62.5L372,63.6L371,63L370,65.3L369,63.9L368,62.7L367,60.8L366,61.2L365,58.5L364,58L363,55.7L362,55.2L361,55.1L360,55.2L359,55.2L358,55.9L357,56.7L356,57.5L355,58.3L354,58.1L353,59.6L352,58.4L351,58.1L350,59.3L349,59.2L348,59.4L347,58.3L346,59.6L345,60.2L344,58.2L343,59.9L342,58.7L341,59.4L340,58.3L339,57.6L338,57.2L337,56.5L336,55.3L335,55.2L334,55.2L333,55.1L330,55.2L329,56.9L328,59.1L327,62.1L326,61.9L325,63L324,62.3L323,61.5L322,61.8L321,57L320,55.1L318,55.2L317,56.3L316,57.8L315,61.1L314,60.8L313,63.7L312,65.3L311,62.5L310,64.3L309,64.3L308,65.4L307,63L306,64.9L305,65.2L304,62.5L303,58.7L302,56.7L301,55.2L300,55.2L299,55.2L298,55.2L297,55.5L296,56.5L295,58.3L294,58.3L293,57.9L292,57.6L291,57.5L290,58.2L289,57L288,55.8L287,55.2L283,55.2L282,55.9L281,58.2L280,60.5L279,61.6L278,62.7L277,65L276,63.5L275,64.2L274,63.8L273,63.5L272,62.8L271,63.8L270,61.9L269,60.4L268,59.6L267,56.6L266,55.2L265,55.2L264,56.4L263,57.9L262,59.7L261,63L260,63.3L259,61.5L258,63L257,61.4L256,61.8L255,61.7L254,59.8L253,56.3L252,55.2L251,55.2L250,55.2L249,55.2L248,57.1L247,60.8L246,66.8L245,63L244,66.4L243,65.6L242,63.5L241,58.6L240,55.2L239,55.2L238,57.9L237,62.2L236,64.1L235,61.7L234,62.3L233,59.1L232,55.2L231,55.3L230,55.2L229,55.2L228,55.8L227,57.9L226,58.7L225,58L224,58.8L223,58.4L222,56.3L221,55.2L220,55.2L216,55.2L215,55.8L214,57.4L213,59.1L212,61.4L211,63.5L210,63.7L209,63.6L208,64.1L207,65.9L206,65.8L205,64.2L204,64.2L203,65.7L202,62.3L201,63.8L200,63L199,61.7L198,60.5L197,58.1L196,56.1L195,55.2L194,57.4L193,61.8L192,63.2L191,63.2L190,63.8L189,61.4L188,58L187,55.2L184,55.2L183,57.6L182,63.4L181,63.9L180,65.3L179,65.3L178,59.3L177,55.2L175,55.2L174,55.1L173,55.2L172,55.2L171,56.9L170,61L169,62.6L168,64.6L167,62.2L166,63.9L165,64.6L164,61.2L163,57.7L162,55.2L157,55.2L156,55.5L155,56.3L154,57.2L153,58.6L152,59.5L151,58.6L150,59L149,58.7L148,60.2L147,60.3L146,61L145,60.6L144,58.5L143,59.1L142,57L141,55.8L140,55.2L139,55.6L138,57.8L137,58.4L136,59.9L135,60L134,60.2L133,60L132,59.7L131,58.8L130,56.5L129,55.1L128,55.2L127,56.6L126,61.2L125,62.1L124,62.7L123,61.6L122,61.4L121,62.9L120,62.5L119,57.6L118,55.2L115,55.2L114,57L113,59.4L112,61.7L111,61.9L110,61.8L109,61.6L108,61.1L107,61.2L106,57.3L105,55.2L104,55.2L103,55.2L102,55.3L101,56.4L100,56.8L99,58.3L98,58.3L97,58.4L96,59.7L95,60.5L94,59.2L93,58.4L92,59.1L91,59.8L90,58.6L89,59.5L88,58.4L87,59.2L86,59.4L85,57.5L84,56.2L83,55.6L82,55.2L81,55.2L80,55.2L79,55.2L77,55.2L76,56.4L75,59.1L74,61.1L73,60.5L72,63.4L71,63.6L70,60.6L69,57L68,55.2L67,55.3L66,57.4L65,61.2L64,61.4L63,62.8L62,62.4L61,62.9L60,57.7L59,55.2L55,55.3L54,56.8L53,59.6L52,65.3L51,65.3L50,64.6L49,63.7L48,65.7L47,63.8L46,61.2L45,57.8L44,55.2L43,55.2L42,55.2L41,55.3L40,56.2L39,57.1L38,59.4L37,59.5L36,60.2L35,64L34,65.6L33,63.5L32,65L31,64.7L30,62.5L29,64.7L28,63.8L27,63.9L26,63.6L25,62.6L24,62.6L23,59.9L22,58.6L21,56.3L20,55.2L19,55.2L18,55.2L17,55.3L16,56L15,57.3L14,58.8L13,60L12,61.7L11,64L10,62.8L9,64.4L8,64.1L7,65.2L6,64L5,65.3L4,64.1L3,63.1L2,62.7L1,64.8L0,61.9Z" fill="#1f6b3a"/></svg><div class="r" style="left:0;top:36px;width:100%;height:1px;background:#fff;opacity:.9"></div><div class="l">10 Bass B_251120-111947_2.wav</div></div>
<div class="c" style="left:635px;top:204px;width:29px;height:74px;background:linear-gradient(#54f8ef,#3bb4ac);border-color:#90f8f2"><svg class="w" width="29" height="74" viewBox="0 0 29 74" preserveAspectRatio="none"><path d="M0,15.3L1,14.3L2,12.6L3,12.8L4,13.2L5,13L6,13.2L7,13.8L8,13.4L9,13.4L10,13.6L11,13.4L12,13.6L13,14L14,14.2L15,14.3L16,13.8L17,14L18,14.1L19,14.3L20,14.3L21,14.6L22,14.4L23,14.8L24,14.5L25,14.6L26,14.6L27,14.9L28,15L29,14.9L29,19.8L28,19.5L27,19.8L26,19.8L25,20L24,20.1L23,19.7L22,20.1L21,20.2L20,20L19,20.3L18,20.2L17,20.7L16,20.7L15,20.2L14,20.4L13,20.3L12,20.8L11,21.5L10,20.6L9,21.5L8,21.3L7,20.6L6,21.6L5,21.6L4,21.1L3,21.4L2,21.5L1,20.5L0,19.2ZM0,52.7L1,51.7L2,49.5L3,50.3L4,50.9L5,50.1L6,50.7L7,51.4L8,50.9L9,50.9L10,50.8L11,51L12,50.6L13,51.1L14,51.2L15,51.4L16,50.9L17,51L18,51.5L19,51.4L20,51.7L21,51.7L22,52L23,52L24,51.8L25,51.7L26,52.1L27,52.1L28,52.4L29,52L29,57.1L28,57L27,56.8L26,57.3L25,57.2L24,57.7L23,57.3L22,57.3L21,57.3L20,57.3L19,57.5L18,58L17,58L16,58.3L15,57.6L14,57.7L13,58.2L12,58.5L11,58.3L10,58.2L9,58.1L8,58.7L7,58L6,58.6L5,58.7L4,58.8L3,58.9L2,59.1L1,57.3L0,56.8Z" fill="#24726d"/></svg><div class="l" style="transform:scaleX(0.61)">10 Keys Piano C_251120-111956_3.wav</div></div>
<div class="c" style="left:748px;top:204px;width:29px;height:74px;background:linear-gradient(#54f8ef,#3bb4ac);border-color:#90f8f2"><svg class="w" width="29" height="74" viewBox="0 0 29 74" preserveAspectRatio="none"><path d="M0,15.3L1,14.3L2,12.6L3,12.8L4,13.2L5,13L6,13.2L7,13.8L8,13.4L9,13.4L10,13.6L11,13.4L12,13.6L13,14L14,14.2L15,14.3L16,13.8L17,14L18,14.1L19,14.3L20,14.3L21,14.6L22,14.4L23,14.8L24,14.5L25,14.6L26,14.6L27,14.9L28,15L29,14.9L29,19.8L28,19.5L27,19.8L26,19.8L25,20L24,20.1L23,19.7L22,20.1L21,20.2L20,20L19,20.3L18,20.2L17,20.7L16,20.7L15,20.2L14,20.4L13,20.3L12,20.8L11,21.5L10,20.6L9,21.5L8,21.3L7,20.6L6,21.6L5,21.6L4,21.1L3,21.4L2,21.5L1,20.5L0,19.2ZM0,52.7L1,51.7L2,49.5L3,50.3L4,50.9L5,50.1L6,50.7L7,51.4L8,50.9L9,50.9L10,50.8L11,51L12,50.6L13,51.1L14,51.2L15,51.4L16,50.9L17,51L18,51.5L19,51.4L20,51.7L21,51.7L22,52L23,52L24,51.8L25,51.7L26,52.1L27,52.1L28,52.4L29,52L29,57.1L28,57L27,56.8L26,57.3L25,57.2L24,57.7L23,57.3L22,57.3L21,57.3L20,57.3L19,57.5L18,58L17,58L16,58.3L15,57.6L14,57.7L13,58.2L12,58.5L11,58.3L10,58.2L9,58.1L8,58.7L7,58L6,58.6L5,58.7L4,58.8L3,58.9L2,59.1L1,57.3L0,56.8Z" fill="#24726d"/></svg><div class="l" style="transform:scaleX(0.61)">10 Keys Piano C_251120-111956_3.wav</div></div>
<div class="c" style="left:861px;top:204px;width:29px;height:74px;background:linear-gradient(#54f8ef,#3bb4ac);border-color:#90f8f2"><svg class="w" width="29" height="74" viewBox="0 0 29 74" preserveAspectRatio="none"><path d="M0,15.3L1,14.3L2,12.6L3,12.8L4,13.2L5,13L6,13.2L7,13.8L8,13.4L9,13.4L10,13.6L11,13.4L12,13.6L13,14L14,14.2L15,14.3L16,13.8L17,14L18,14.1L19,14.3L20,14.3L21,14.6L22,14.4L23,14.8L24,14.5L25,14.6L26,14.6L27,14.9L28,15L29,14.9L29,19.8L28,19.5L27,19.8L26,19.8L25,20L24,20.1L23,19.7L22,20.1L21,20.2L20,20L19,20.3L18,20.2L17,20.7L16,20.7L15,20.2L14,20.4L13,20.3L12,20.8L11,21.5L10,20.6L9,21.5L8,21.3L7,20.6L6,21.6L5,21.6L4,21.1L3,21.4L2,21.5L1,20.5L0,19.2ZM0,52.7L1,51.7L2,49.5L3,50.3L4,50.9L5,50.1L6,50.7L7,51.4L8,50.9L9,50.9L10,50.8L11,51L12,50.6L13,51.1L14,51.2L15,51.4L16,50.9L17,51L18,51.5L19,51.4L20,51.7L21,51.7L22,52L23,52L24,51.8L25,51.7L26,52.1L27,52.1L28,52.4L29,52L29,57.1L28,57L27,56.8L26,57.3L25,57.2L24,57.7L23,57.3L22,57.3L21,57.3L20,57.3L19,57.5L18,58L17,58L16,58.3L15,57.6L14,57.7L13,58.2L12,58.5L11,58.3L10,58.2L9,58.1L8,58.7L7,58L6,58.6L5,58.7L4,58.8L3,58.9L2,59.1L1,57.3L0,56.8Z" fill="#24726d"/></svg><div class="l" style="transform:scaleX(0.61)">10 Keys Piano C_251120-111956_3.wav</div></div>
<div class="c" style="left:974px;top:204px;width:29px;height:74px;background:linear-gradient(#54f8ef,#3bb4ac);border-color:#90f8f2"><svg class="w" width="29" height="74" viewBox="0 0 29 74" preserveAspectRatio="none"><path d="M0,15.3L1,14.3L2,12.6L3,12.8L4,13.2L5,13L6,13.2L7,13.8L8,13.4L9,13.4L10,13.6L11,13.4L12,13.6L13,14L14,14.2L15,14.3L16,13.8L17,14L18,14.1L19,14.3L20,14.3L21,14.6L22,14.4L23,14.8L24,14.5L25,14.6L26,14.6L27,14.9L28,15L29,14.9L29,19.8L28,19.5L27,19.8L26,19.8L25,20L24,20.1L23,19.7L22,20.1L21,20.2L20,20L19,20.3L18,20.2L17,20.7L16,20.7L15,20.2L14,20.4L13,20.3L12,20.8L11,21.5L10,20.6L9,21.5L8,21.3L7,20.6L6,21.6L5,21.6L4,21.1L3,21.4L2,21.5L1,20.5L0,19.2ZM0,52.7L1,51.7L2,49.5L3,50.3L4,50.9L5,50.1L6,50.7L7,51.4L8,50.9L9,50.9L10,50.8L11,51L12,50.6L13,51.1L14,51.2L15,51.4L16,50.9L17,51L18,51.5L19,51.4L20,51.7L21,51.7L22,52L23,52L24,51.8L25,51.7L26,52.1L27,52.1L28,52.4L29,52L29,57.1L28,57L27,56.8L26,57.3L25,57.2L24,57.7L23,57.3L22,57.3L21,57.3L20,57.3L19,57.5L18,58L17,58L16,58.3L15,57.6L14,57.7L13,58.2L12,58.5L11,58.3L10,58.2L9,58.1L8,58.7L7,58L6,58.6L5,58.7L4,58.8L3,58.9L2,59.1L1,57.3L0,56.8Z" fill="#24726d"/></svg><div class="l" style="transform:scaleX(0.61)">10 Keys Piano C_251120-111956_3.wav</div></div>
<div class="c" style="left:1087px;top:204px;width:452px;height:74px;background:linear-gradient(#54f8ef,#3bb4ac);border-color:#90f8f2"><svg class="w" width="452" height="74" viewBox="0 0 452 74" preserveAspectRatio="none"><path d="M0,15.3L1,14.3L2,12.6L3,12.8L4,13.2L5,13L6,13.2L7,13.8L8,13.4L9,13.4L10,13.6L11,13.4L12,13.6L13,14L14,14.2L15,14.3L16,13.8L17,14L18,14.1L19,14.3L20,14.3L21,14.6L22,14.4L23,14.8L24,14.5L25,14.6L26,14.6L27,14.9L28,15L29,14.9L30,14.8L31,14.9L32,14.9L33,15.1L34,15.1L35,14.9L36,15.3L37,15.3L38,15.2L39,15.2L40,15.4L41,15.3L42,15.4L43,15.4L44,15.3L45,15.4L46,15.5L47,15.6L48,15.5L49,15.6L51,15.6L52,15.7L53,15.8L54,15.7L55,15.8L56,15.7L57,15.8L58,15.9L59,15.8L60,15.9L61,15.9L62,15.8L63,15.9L64,16.1L65,16.1L66,16L67,16L68,16.1L69,16.1L70,15.1L71,14.3L72,13L73,12.9L74,13.5L75,13.5L76,13.9L77,13.7L78,14L79,14.3L80,14.1L81,14.4L82,14.5L83,14.6L84,14.5L85,14.7L86,14.5L87,14.8L88,15L89,15.1L90,15.1L91,14.9L92,15.3L93,15.2L94,15.1L95,15.2L96,15.4L97,15.3L98,15.4L99,15.6L100,15.7L101,15.7L102,15.6L103,15.8L104,15.7L105,15.7L106,15.7L107,15.9L108,16L110,16L111,16L112,16L113,14.8L114,12.7L115,11.4L116,11.8L117,11.4L118,12.3L119,11.8L120,12L121,11.9L122,13.1L123,13L124,12.2L125,13.2L126,13L127,12.9L128,13.1L129,12.8L130,12.9L131,13.6L132,13.8L133,13.2L134,13.7L135,14L136,14.1L137,14.3L138,13.9L139,14.2L140,14.1L141,13.9L142,14.3L143,14L144,14.7L145,14.3L146,14.3L147,14.3L148,14.9L149,14.7L151,14.7L152,14.9L153,15L154,14.7L155,14.8L156,14.9L157,14.9L158,15.1L159,15.4L160,15.1L161,15.4L162,15.2L163,15.3L164,15.5L165,15.5L166,15.6L167,15.6L168,15.3L169,15.6L170,15.4L171,15.7L173,15.7L174,15.7L175,15.6L176,15.8L177,15.8L178,15.9L179,15.9L180,15.8L181,15.9L182,15.9L183,15.5L184,14.4L185,12.7L186,12.5L187,13.7L188,13.4L189,13L190,13.3L191,13.3L192,13.9L193,13.6L194,14.5L195,14.3L196,14.1L197,14.5L198,14.6L199,14.7L200,14.8L201,14.6L202,14.6L203,15.1L204,15.1L205,15L206,15.1L207,15.1L208,15.2L209,15.2L210,15.3L211,15.4L212,15.6L213,15.7L214,15.5L215,15.6L216,15.6L217,15.8L218,15.7L219,15.7L220,16L221,16L223,16L224,16L225,16L226,14.9L227,12.8L228,11.1L229,12L230,11.5L231,11.9L232,12.6L233,12.3L234,12.9L235,12.8L236,12.4L237,13.4L238,12.9L239,13.1L240,13.4L241,13.7L242,13.3L243,13.6L244,13.9L245,13.7L246,13.5L247,14.1L248,13.6L249,14.3L250,14L251,14.2L252,13.9L253,13.9L254,14.1L255,14.5L256,14.5L257,14.2L258,14.5L260,14.5L261,14.9L262,14.8L263,14.5L264,14.9L265,14.7L266,15.1L267,15.2L268,15L269,15.2L270,15.1L271,15L272,15.4L273,15.3L274,15.3L275,15.2L276,15.2L277,15.2L278,15.3L279,15.5L280,15.5L281,15.5L282,15.6L283,15.7L284,15.6L285,15.5L286,15.8L287,15.8L288,15.8L290,15.8L291,15.9L292,15.8L293,15.9L294,15.8L295,16L296,15.1L297,14.3L298,13L299,12.5L300,13.3L301,13.5L302,13.8L303,13.3L304,13.9L305,13.5L306,13.9L307,14.3L308,13.8L309,14L310,14.3L311,14.5L313,14.4L314,15L315,15L316,14.8L317,15.1L318,14.9L319,15L320,15.2L321,15.4L322,15.3L323,15.4L324,15.4L325,15.4L326,15.6L327,15.5L328,15.6L329,15.8L330,15.7L331,15.9L332,15.7L333,15.8L334,16L335,16L336,15.9L337,16L338,16.1L339,15.1L340,13.8L341,11.8L342,11.5L343,11.5L344,12.8L345,12.1L346,12.7L347,12L348,12.9L349,13.3L350,13.1L351,13L352,13.5L353,12.9L354,13.5L355,13.2L356,13.8L357,13.6L358,13.5L359,14L360,14L361,13.6L362,14.1L363,14.2L364,14L365,14L366,14L367,14.3L368,14.1L370,14.2L371,14.3L372,14.5L373,14.6L374,14.8L375,15L376,14.6L377,14.9L378,15L379,15L380,14.9L381,14.9L382,15.3L383,15L385,15L386,15.1L387,15.3L388,15.2L389,15.4L390,15.3L391,15.3L392,15.5L393,15.7L394,15.5L396,15.5L397,15.7L398,15.7L399,15.8L400,15.6L401,15.8L402,15.9L403,15.9L404,15.7L405,15.9L406,15.8L407,16L408,15.9L409,15.2L410,14.2L411,12.8L412,12.6L413,12.7L414,13.7L415,13.4L416,13.2L417,13.6L418,13.6L419,14.1L420,14.1L421,14.6L422,14.1L423,14.4L424,14.7L425,14.3L426,14.9L427,15.1L428,14.7L429,15.2L430,14.9L431,15.3L432,15.4L433,15.1L434,15.2L436,15.3L437,15.4L438,15.6L441,15.6L442,15.7L443,15.8L445,15.7L446,15.9L447,16L448,16.1L449,15.9L450,16.1L451,16L451,18.6L450,18.6L449,18.7L448,18.6L447,18.7L446,18.5L445,18.9L444,19L443,18.7L442,19.1L441,18.9L440,18.9L439,19.1L438,19L437,19.4L436,19.4L435,19.2L434,19.4L433,19.4L432,19.3L431,19.5L430,19.5L429,19.6L428,19.9L427,19.4L426,19.8L425,20L424,20L423,20.5L422,20.7L421,19.9L420,20.5L419,20.2L418,20.9L417,21.2L416,21.8L415,21.1L414,20.9L413,22.1L412,22L411,21.9L410,20.5L409,19.4L408,18.7L407,18.6L406,18.7L405,18.7L404,18.9L403,18.8L402,18.7L401,18.7L400,19L399,18.7L398,18.9L397,18.9L396,19L395,19.2L394,19.2L393,18.8L392,19.1L391,19.3L390,19.2L389,19.2L388,19.6L387,19.5L386,19.3L385,19.5L384,19.7L383,19.6L382,19.2L381,19.9L380,19.5L379,19.7L378,19.5L377,19.6L376,19.9L375,19.5L374,20L373,20.1L372,20.2L371,20.5L370,20.4L369,20.4L368,20.6L367,20.5L366,20.8L365,20.7L364,20.6L363,20.2L362,20.8L361,21.2L360,20.3L359,20.9L358,20.8L357,21.4L356,21.1L355,21.7L354,20.8L353,21.7L352,21L351,21.9L350,21.9L349,20.9L348,21.5L347,22.6L346,21.9L345,22.7L344,22.1L343,23.4L342,23.5L341,22.3L340,20.7L339,19.5L338,18.4L337,18.5L336,18.8L335,18.6L334,18.5L333,18.8L332,18.7L331,18.7L330,18.9L329,18.8L328,18.9L327,19L326,18.9L325,19.2L324,19.3L323,19.2L322,19.4L321,19.3L320,19.2L319,19.6L318,19.9L317,19.5L316,19.9L315,19.4L314,19.5L313,20.2L312,20.4L311,19.9L310,20.2L309,20.3L308,20.4L307,20.2L306,20.7L305,21L304,20.9L303,21.6L302,20.9L301,21.3L300,21.7L299,22L298,21.8L297,20.2L296,19.4L295,18.6L294,18.9L293,18.7L292,18.9L291,18.6L290,18.7L289,18.9L288,18.9L287,18.7L286,18.9L285,19.1L284,19.1L283,19L282,18.9L281,19.3L278,19.2L277,19.1L276,19.3L275,19.3L274,19.3L273,19.5L272,19.2L271,19.5L270,19.7L269,19.3L268,19.6L267,19.3L266,19.5L265,20.1L264,19.6L263,20L262,19.6L261,20L260,20.3L259,20.1L258,20L257,20.1L256,20.3L255,20.2L254,20.6L253,20.5L252,20.7L251,20.7L250,20.4L249,20.2L248,21.2L247,20.6L246,21.4L245,21.2L244,20.9L243,20.7L242,21.2L241,21L240,21.2L239,21.5L238,22L237,21.5L236,22.6L235,21.8L234,21.4L233,21.9L232,22L231,22.3L230,23.3L229,22.7L228,24.1L227,21.8L226,19.8L225,18.5L224,18.7L223,18.6L222,18.5L221,18.5L220,18.7L219,18.9L218,18.7L217,18.7L216,19L215,18.9L214,19.2L213,18.8L212,18.9L211,19.3L210,19.2L209,19.2L208,19.4L207,19.6L206,19.5L205,19.4L204,19.6L203,19.7L202,19.7L201,19.7L200,20L199,20L198,20.1L197,20.2L196,20.2L195,20.6L194,20.2L193,21.2L192,20.8L191,21.1L190,20.9L189,21.7L188,20.8L187,20.8L186,22.1L185,21.6L184,20.3L183,19.1L182,18.7L181,18.8L180,18.9L179,18.7L178,18.7L177,18.8L176,18.8L175,19.2L174,18.9L173,19L172,18.9L171,18.8L170,19.3L169,19L168,19.1L167,19L166,19.2L165,19.1L164,19L163,19.5L162,19.5L161,19.3L160,19.7L159,19.2L158,19.3L157,19.7L156,19.6L155,19.9L154,19.7L153,19.4L152,20L151,19.9L150,19.8L149,19.9L148,19.9L147,20.6L146,20.1L145,20.3L144,19.8L143,20.5L142,20.6L141,20.4L140,20.4L139,20.3L138,20.9L137,20.4L136,20.2L135,20.7L134,20.6L133,21.7L132,20.9L131,21.2L130,21.7L129,21.5L128,21.1L127,22.1L126,22L125,21.6L124,22.2L123,21.5L122,21.5L121,22.3L120,22.3L119,22.4L118,22.7L117,23.4L116,23.1L115,22.7L114,22.1L113,20L112,18.7L111,18.7L110,18.5L108,18.5L107,18.7L105,18.8L104,18.9L103,18.9L102,19L101,18.7L100,18.8L99,19L98,19L97,19.1L96,19.2L95,19.2L94,19.7L93,19.5L92,19.3L91,19.7L88,19.8L87,20L86,20.3L85,20.2L84,20.2L83,20L82,20.2L81,20.4L80,20.6L79,20.5L78,20.8L77,20.6L76,20.6L75,21.1L74,20.7L73,21.4L72,21.8L71,20.3L70,19.3L69,18.6L68,18.5L67,18.7L66,18.6L65,18.5L64,18.4L63,18.8L62,18.8L61,18.6L60,18.7L59,18.7L58,18.6L57,18.8L56,18.9L55,19L54,18.8L53,18.8L52,18.9L51,19L50,18.9L49,19.1L48,19.1L47,18.9L46,19.1L45,19.2L44,19.1L43,19.1L42,19L41,19.3L40,19.3L39,19.4L38,19.5L37,19.3L36,19.3L35,19.7L34,19.5L33,19.4L32,19.9L31,19.8L30,19.9L29,19.8L28,19.5L27,19.8L26,19.8L25,20L24,20.1L23,19.7L22,20.1L21,20.2L20,20L19,20.3L18,20.2L17,20.7L16,20.7L15,20.2L14,20.4L13,20.3L12,20.8L11,21.5L10,20.6L9,21.5L8,21.3L7,20.6L6,21.6L5,21.6L4,21.1L3,21.4L2,21.5L1,20.5L0,19.2ZM0,52.7L1,51.7L2,49.5L3,50.3L4,50.9L5,50.1L6,50.7L7,51.4L8,50.9L9,50.9L10,50.8L11,51L12,50.6L13,51.1L14,51.2L15,51.4L16,50.9L17,51L18,51.5L19,51.4L20,51.7L21,51.7L22,52L23,52L24,51.8L25,51.7L26,52.1L27,52.1L28,52.4L29,52L30,52.1L31,52.3L32,52L33,52.3L34,52.4L35,52.2L36,52.6L37,52.6L38,52.4L39,52.5L40,52.8L41,52.6L42,52.5L43,52.6L44,52.6L45,52.8L46,52.8L47,52.9L48,52.9L49,53L51,53L52,53L55,52.9L56,52.9L57,53.1L58,53.2L60,53.2L61,53.4L62,53.1L63,53.1L64,53.4L65,53.5L66,53.3L67,53.1L68,53.4L69,53.5L70,52.4L71,51.5L72,50.3L73,50.1L74,51.1L75,51L76,51.3L77,50.9L78,51.3L79,51.7L80,51.5L81,52L82,51.7L84,51.7L85,51.8L86,51.9L87,52.2L88,52.3L89,52.5L90,52.6L91,52.1L92,52.6L93,52.4L94,52.3L95,52.5L96,52.8L97,52.7L98,52.7L99,52.9L100,53.1L101,53.1L102,53L103,53.1L104,53L105,53L106,53.2L107,53.1L108,53.3L112,53.3L113,51.9L114,49.6L115,48.2L116,48.6L117,48.9L118,49.8L119,48.8L120,49.4L121,49.3L122,50.4L123,50L124,49.7L125,50.9L126,49.9L127,50.1L128,50.1L129,50.3L130,50.6L131,51.2L132,51.2L133,50.6L134,51.3L135,51L136,51.1L137,51.8L138,51L139,51.2L140,51.3L141,51.4L142,51.8L143,51.4L144,52.2L145,51.3L146,51.6L147,51.5L148,52L149,52.1L150,52.2L151,51.9L152,52.3L153,52.3L154,51.8L155,51.8L156,52.3L157,52.2L158,52.4L159,52.7L160,52.6L161,52.9L162,52.5L163,52.6L164,52.6L165,53L167,53L168,52.7L169,53.1L170,52.7L171,53.1L172,52.8L173,53L174,53L175,52.9L176,53L177,53.1L178,53.3L179,53.1L182,53.1L183,52.8L184,51.6L185,50.2L186,49.5L187,51.2L188,50.4L189,50.5L190,50.5L191,50.7L192,51.3L193,51.2L194,51.8L195,51.3L196,51.4L197,51.7L198,51.7L199,52.1L200,52.1L201,52.1L202,51.7L203,52.3L204,52.6L205,52.1L206,52.3L207,52.4L208,52.5L210,52.5L211,52.8L212,53L213,53.1L214,53L215,52.7L216,53L217,53.2L218,53.1L220,53.2L221,53.4L222,53.3L223,53.3L224,53.4L225,53.3L226,52L227,50.1L228,48.4L229,49.1L230,48.2L231,48.7L232,50.1L233,49.9L234,50L235,50L236,49.3L237,50.4L238,49.9L239,50.8L240,50.8L241,50.7L242,50.3L243,51.2L244,51.5L245,50.7L246,51.1L247,51.3L248,50.6L249,51.4L250,51.4L251,51.5L252,51.4L253,51.5L254,51.7L255,52L256,51.6L257,51.8L258,51.6L259,51.9L260,51.7L261,52.1L262,52.3L263,52.1L264,52.4L265,51.9L266,52.4L267,52.7L268,52.4L269,52.5L270,52.2L271,52.4L272,52.6L273,52.7L274,52.5L275,52.5L276,52.6L277,52.4L278,52.8L279,53L280,52.6L281,52.7L282,53L283,53L284,52.8L285,52.9L286,53.1L287,53.2L288,53L289,53.2L290,53.1L291,53.1L292,53L293,53.2L294,53.2L295,53.4L296,52.4L297,51.5L298,50.1L299,49.8L300,50.5L301,50.7L302,50.8L303,50.3L304,51.5L305,50.5L306,51.3L307,51.9L308,51.4L309,51.5L310,51.6L311,51.8L312,51.7L313,51.5L314,52.1L315,52.5L316,52.3L317,52.3L318,52.1L319,52.2L320,52.6L321,52.8L322,52.5L323,52.7L324,52.8L325,52.7L326,52.8L327,52.9L328,53L329,53L330,52.9L331,53.3L332,53L333,53.1L334,53.3L336,53.3L337,53.3L338,53.5L339,52.5L340,51.1L341,49.5L342,48.8L343,49.3L344,50L345,48.9L346,50.4L347,48.8L348,50L349,50.4L350,50.7L351,50.6L352,50.7L353,50L354,51.1L355,50.8L356,50.8L357,50.7L358,50.6L359,51.6L360,51.6L361,50.8L362,51.1L363,51.6L364,51.2L366,51.2L367,51.5L368,51.5L370,51.5L371,51.7L372,51.7L373,51.7L374,52.3L375,52.5L376,51.7L377,52.1L378,52.4L379,52.4L380,52L381,52.4L382,52.8L383,52.5L384,52.5L385,52.1L386,52.2L387,52.6L388,52.5L389,52.5L390,52.8L391,52.7L392,52.9L393,52.8L394,52.7L395,52.6L396,52.7L397,53.1L398,53L399,53.2L400,53.1L401,53L402,53.3L403,53.3L404,53L405,53.3L406,53.1L407,53.3L408,53.1L409,52.5L410,51.8L411,50.1L412,49.6L413,49.9L414,50.8L415,50.7L416,50.7L417,51L418,50.8L419,51.4L420,51.5L421,51.7L422,51.4L423,51.5L424,51.8L425,51.6L426,52.3L427,52.3L428,52.1L429,52.4L430,52.3L431,52.7L432,52.8L433,52.6L434,52.7L435,52.6L436,52.5L437,52.8L438,52.8L439,52.9L440,52.8L441,52.7L442,52.9L443,53L444,53.1L445,53L446,53.2L449,53.2L450,53.4L451,53.2L451,55.9L450,55.9L449,56.1L448,55.8L447,55.8L446,56.1L445,56.2L444,56.3L443,56L442,56.2L441,56.3L440,56.2L439,56.2L438,56.4L437,56.6L435,56.6L434,56.7L433,56.6L431,56.6L430,56.9L429,56.7L428,57.3L427,56.9L426,57L425,57.6L424,57.3L423,57.6L422,57.8L421,57.1L420,58L419,57.8L418,58.4L417,58.3L416,58.9L415,58.4L414,57.9L413,59.3L412,59.2L411,58.7L410,58L409,56.8L408,56L407,55.8L406,56.1L402,56.1L401,56.2L400,56.3L399,56.2L398,56.4L397,56.1L396,56.6L395,56.3L394,56.4L393,56.1L392,56.4L391,56.8L390,56.4L389,56.7L388,56.9L387,56.6L386,56.6L385,57L384,56.8L383,57L382,56.6L381,57L380,56.9L379,57.1L378,57.1L377,56.9L376,57.4L375,57L374,57.2L373,57.6L372,57.3L371,57.8L370,57.5L369,57.9L368,57.8L367,57.8L366,58L365,57.9L364,57.7L363,57.7L362,57.7L361,58.5L360,57.8L359,57.6L358,58.2L356,58.2L355,58.5L354,58.7L353,58.7L352,58.5L351,59.1L350,58.8L349,58.4L348,59.3L347,60.1L346,59.5L345,60.2L344,58.9L343,60.1L342,60.8L341,59.8L340,58.2L339,56.8L338,55.8L337,55.9L336,55.9L335,56L334,55.8L333,56.1L332,56.2L331,56.1L330,56.4L329,56.1L328,56.3L327,56.4L326,56.2L325,56.4L324,56.6L323,56.6L322,56.4L321,56.4L320,56.5L319,57.1L318,57.2L317,57L316,57.3L315,57.1L314,56.8L313,57.2L312,57.6L311,57.3L310,57.5L309,57.9L308,58.4L307,57.4L306,58.1L304,58L303,58.7L302,58.1L301,58.4L300,58.5L299,59.8L298,59.2L297,57.7L296,57L295,55.9L294,56L293,55.9L292,56.1L291,55.9L290,56.2L289,56.2L288,56.1L287,56.2L286,56.1L285,56.2L284,56.4L283,56.3L282,56.4L281,56.3L280,56.6L279,56.3L278,56.7L277,56.8L276,56.6L275,56.7L274,56.5L273,56.7L272,56.5L271,57L270,56.6L268,56.7L267,56.6L266,56.7L265,57.4L264,56.9L263,57.5L262,57.2L259,57.3L258,57.2L257,57.9L256,57.3L255,57.3L254,57.5L253,58.1L252,57.9L251,57.8L250,58.1L249,57.8L248,58.1L247,57.9L246,58.7L245,58L244,58.1L243,58.2L242,58.6L241,58.3L240,58.3L239,59.2L238,59.1L237,58.5L236,59.9L235,59.6L234,58.7L233,59.8L232,59.2L231,60L230,60.7L229,59.6L228,61.2L227,58.9L226,57.1L225,55.8L224,56L223,55.8L222,55.8L221,55.9L220,56L219,56.1L218,56.1L217,55.9L216,56.4L215,56.3L214,56.3L213,56L212,56.3L211,56.4L210,56.6L209,56.6L208,56.5L207,56.6L206,56.6L205,57.1L204,56.7L203,57L202,57.2L201,57L200,57L199,57.1L198,57.4L197,57.3L196,57.5L195,57.7L194,57.5L193,58.6L192,58.3L191,58.8L190,59L189,59.2L188,58.4L187,57.9L186,59.2L185,59.5L184,57.3L183,56.3L182,56.2L181,55.9L180,56.1L177,56.1L176,56L175,56.3L174,56.1L173,56.3L172,56.1L171,56.2L170,56.4L169,56.4L168,56.7L167,56.3L165,56.2L164,56.5L163,56.8L162,56.6L161,56.4L160,56.8L159,56.6L158,56.7L157,56.8L156,57.1L155,56.9L154,57.2L153,56.9L152,57L151,57.1L150,57L149,57.2L148,56.8L147,57.5L146,57.6L145,57.5L144,57.1L143,57.9L142,57.8L141,58.1L140,57.6L139,57.6L138,58.2L137,57.8L136,57.5L135,58L134,57.9L133,59L132,58L131,58L130,59.3L129,58.9L128,58.4L127,59L126,59.2L125,58.5L124,60L123,58.9L122,58.5L121,60.4L120,59.5L119,60.4L118,59.4L117,60.4L116,60.3L115,60.8L114,59.4L113,57.3L112,55.9L111,55.9L110,55.9L109,55.8L108,55.9L107,55.9L106,56.2L104,56.2L103,56L102,56.2L101,56.2L100,56.2L99,56.4L98,56.6L97,56.5L96,56.4L95,56.6L94,57L93,56.9L92,56.8L91,57L90,56.7L89,56.6L88,57.2L87,57.3L86,57.6L85,57.2L84,57.3L83,57.1L82,57.3L81,57.3L80,57.6L79,57.4L78,57.6L77,57.9L76,57.9L75,58.1L74,58.6L73,59.1L72,58.6L71,57.6L70,56.6L69,55.8L68,55.9L66,55.9L65,55.8L64,55.8L63,56.1L62,56L61,55.9L60,56.1L59,56.2L58,56L57,56.1L55,56.1L54,56.2L53,56L52,56.2L51,56.5L50,56.2L49,56.3L48,56.4L47,56.2L46,56.6L45,56.4L44,56.5L43,56.6L42,56.4L41,56.5L40,56.6L39,56.6L38,56.5L37,56.4L36,56.6L35,57.1L34,56.9L33,56.8L32,57.1L28,57L27,56.8L26,57.3L25,57.2L24,57.7L23,57.3L22,57.3L21,57.3L20,57.3L19,57.5L18,58L17,58L16,58.3L15,57.6L14,57.7L13,58.2L12,58.5L11,58.3L10,58.2L9,58.1L8,58.7L7,58L6,58.6L5,58.7L4,58.8L3,58.9L2,59.1L1,57.3L0,56.8Z" fill="#24726d"/></svg><div class="r" style="left:0;top:36px;width:100%;height:1px;background:#fff;opacity:.9"></div><div class="l">10 Keys Piano C_251120-111956_3.wav</div></div>
<div class="c" style="left:635px;top:279px;width:29px;height:74px;background:linear-gradient(#56a2fb,#3a76bd);border-color:#8fc0fb"><svg class="w" width="29" height="74" viewBox="0 0 29 74" preserveAspectRatio="none"><path d="M0,16L1,14.7L2,14.1L3,13.4L4,11.6L5,12.6L6,12.3L7,11.6L8,11.8L9,13.1L10,13.3L11,13.2L12,12.5L13,13.7L14,13.6L15,13.9L16,14L17,13.7L18,14.2L19,14L20,13.9L21,14L22,14.4L23,14.2L24,14.6L25,14.5L26,15.1L28,15.1L29,15L29,19.7L27,19.7L26,19.8L25,20.3L24,19.9L23,20.6L22,20.2L21,20.5L20,20.5L19,20.3L18,20.1L17,21.2L16,20.4L15,20.8L14,21.3L13,21L12,22.1L11,21.6L10,21.6L9,21.4L8,22.6L7,23L6,22.8L5,22.3L4,22.5L3,21.1L2,20.2L1,19.6L0,18.6ZM0,53.3L1,52L2,51.7L3,51L4,48.7L5,49.8L6,49.6L7,48.9L8,49.6L9,50.4L10,50.2L11,50.4L12,49.4L13,51.4L14,50.6L15,51.2L16,51.2L17,50.7L18,51.6L19,51.3L20,51L21,51L22,51.7L23,51.6L24,52L25,52.1L26,52.5L27,52.6L28,52.2L29,52.1L29,57.1L28,57L27,56.9L26,56.7L25,57.4L24,57.3L23,57.6L22,57.5L21,57.8L20,58.3L19,57.6L18,58L17,57.9L16,58L15,57.9L14,58.4L13,58.3L12,59.8L11,58.8L10,58.9L9,59.2L8,59.6L7,60.5L6,59.2L5,58.9L4,60.7L3,58.5L2,58.1L1,57.1L0,55.8Z" fill="#203f72"/></svg><div class="l" style="transform:scaleX(0.61)">10 Synth Chords C_251120-112003_4.wav</div></div>
<div class="c" style="left:748px;top:279px;width:29px;height:74px;background:linear-gradient(#56a2fb,#3a76bd);border-color:#8fc0fb"><svg class="w" width="29" height="74" viewBox="0 0 29 74" preserveAspectRatio="none"><path d="M0,16L1,14.7L2,14.1L3,13.4L4,11.6L5,12.6L6,12.3L7,11.6L8,11.8L9,13.1L10,13.3L11,13.2L12,12.5L13,13.7L14,13.6L15,13.9L16,14L17,13.7L18,14.2L19,14L20,13.9L21,14L22,14.4L23,14.2L24,14.6L25,14.5L26,15.1L28,15.1L29,15L29,19.7L27,19.7L26,19.8L25,20.3L24,19.9L23,20.6L22,20.2L21,20.5L20,20.5L19,20.3L18,20.1L17,21.2L16,20.4L15,20.8L14,21.3L13,21L12,22.1L11,21.6L10,21.6L9,21.4L8,22.6L7,23L6,22.8L5,22.3L4,22.5L3,21.1L2,20.2L1,19.6L0,18.6ZM0,53.3L1,52L2,51.7L3,51L4,48.7L5,49.8L6,49.6L7,48.9L8,49.6L9,50.4L10,50.2L11,50.4L12,49.4L13,51.4L14,50.6L15,51.2L16,51.2L17,50.7L18,51.6L19,51.3L20,51L21,51L22,51.7L23,51.6L24,52L25,52.1L26,52.5L27,52.6L28,52.2L29,52.1L29,57.1L28,57L27,56.9L26,56.7L25,57.4L24,57.3L23,57.6L22,57.5L21,57.8L20,58.3L19,57.6L18,58L17,57.9L16,58L15,57.9L14,58.4L13,58.3L12,59.8L11,58.8L10,58.9L9,59.2L8,59.6L7,60.5L6,59.2L5,58.9L4,60.7L3,58.5L2,58.1L1,57.1L0,55.8Z" fill="#203f72"/></svg><div class="l" style="transform:scaleX(0.61)">10 Synth Chords C_251120-112003_4.wav</div></div>
<div class="c" style="left:861px;top:279px;width:29px;height:74px;background:linear-gradient(#56a2fb,#3a76bd);border-color:#8fc0fb"><svg class="w" width="29" height="74" viewBox="0 0 29 74" preserveAspectRatio="none"><path d="M0,16L1,14.7L2,14.1L3,13.4L4,11.6L5,12.6L6,12.3L7,11.6L8,11.8L9,13.1L10,13.3L11,13.2L12,12.5L13,13.7L14,13.6L15,13.9L16,14L17,13.7L18,14.2L19,14L20,13.9L21,14L22,14.4L23,14.2L24,14.6L25,14.5L26,15.1L28,15.1L29,15L29,19.7L27,19.7L26,19.8L25,20.3L24,19.9L23,20.6L22,20.2L21,20.5L20,20.5L19,20.3L18,20.1L17,21.2L16,20.4L15,20.8L14,21.3L13,21L12,22.1L11,21.6L10,21.6L9,21.4L8,22.6L7,23L6,22.8L5,22.3L4,22.5L3,21.1L2,20.2L1,19.6L0,18.6ZM0,53.3L1,52L2,51.7L3,51L4,48.7L5,49.8L6,49.6L7,48.9L8,49.6L9,50.4L10,50.2L11,50.4L12,49.4L13,51.4L14,50.6L15,51.2L16,51.2L17,50.7L18,51.6L19,51.3L20,51L21,51L22,51.7L23,51.6L24,52L25,52.1L26,52.5L27,52.6L28,52.2L29,52.1L29,57.1L28,57L27,56.9L26,56.7L25,57.4L24,57.3L23,57.6L22,57.5L21,57.8L20,58.3L19,57.6L18,58L17,57.9L16,58L15,57.9L14,58.4L13,58.3L12,59.8L11,58.8L10,58.9L9,59.2L8,59.6L7,60.5L6,59.2L5,58.9L4,60.7L3,58.5L2,58.1L1,57.1L0,55.8Z" fill="#203f72"/></svg><div class="l" style="transform:scaleX(0.61)">10 Synth Chords C_251120-112003_4.wav</div></div>
<div class="c" style="left:974px;top:279px;width:29px;height:74px;background:linear-gradient(#56a2fb,#3a76bd);border-color:#8fc0fb"><svg class="w" width="29" height="74" viewBox="0 0 29 74" preserveAspectRatio="none"><path d="M0,16L1,14.7L2,14.1L3,13.4L4,11.6L5,12.6L6,12.3L7,11.6L8,11.8L9,13.1L10,13.3L11,13.2L12,12.5L13,13.7L14,13.6L15,13.9L16,14L17,13.7L18,14.2L19,14L20,13.9L21,14L22,14.4L23,14.2L24,14.6L25,14.5L26,15.1L28,15.1L29,15L29,19.7L27,19.7L26,19.8L25,20.3L24,19.9L23,20.6L22,20.2L21,20.5L20,20.5L19,20.3L18,20.1L17,21.2L16,20.4L15,20.8L14,21.3L13,21L12,22.1L11,21.6L10,21.6L9,21.4L8,22.6L7,23L6,22.8L5,22.3L4,22.5L3,21.1L2,20.2L1,19.6L0,18.6ZM0,53.3L1,52L2,51.7L3,51L4,48.7L5,49.8L6,49.6L7,48.9L8,49.6L9,50.4L10,50.2L11,50.4L12,49.4L13,51.4L14,50.6L15,51.2L16,51.2L17,50.7L18,51.6L19,51.3L20,51L21,51L22,51.7L23,51.6L24,52L25,52.1L26,52.5L27,52.6L28,52.2L29,52.1L29,57.1L28,57L27,56.9L26,56.7L25,57.4L24,57.3L23,57.6L22,57.5L21,57.8L20,58.3L19,57.6L18,58L17,57.9L16,58L15,57.9L14,58.4L13,58.3L12,59.8L11,58.8L10,58.9L9,59.2L8,59.6L7,60.5L6,59.2L5,58.9L4,60.7L3,58.5L2,58.1L1,57.1L0,55.8Z" fill="#203f72"/></svg><div class="l" style="transform:scaleX(0.61)">10 Synth Chords C_251120-112003_4.wav</div></div>
<div class="c" style="left:1087px;top:279px;width:452px;height:74px;background:linear-gradient(#56a2fb,#3a76bd);border-color:#8fc0fb"><svg class="w" width="452" height="74" viewBox="0 0 452 74" preserveAspectRatio="none"><path d="M0,16L1,14.7L2,14.1L3,13.4L4,11.6L5,12.6L6,12.3L7,11.6L8,11.8L9,13.1L10,13.3L11,13.2L12,12.5L13,13.7L14,13.6L15,13.9L16,14L17,13.7L18,14.2L19,14L20,13.9L21,14L22,14.4L23,14.2L24,14.6L25,14.5L26,15.1L28,15.1L29,15L30,15.3L31,15.5L32,15.7L33,15.8L34,16L35,15.7L36,15.9L37,16L38,16.3L39,16.3L40,16.5L69,16.6L70,15.8L71,14.7L72,13.3L73,12.2L74,11.9L75,11.7L76,11.8L77,12.3L78,11.9L79,12.6L80,12.4L81,13.5L82,13.2L83,13.9L84,13.4L85,13.3L86,13.9L87,14L88,14.1L89,14.7L91,14.7L92,14.9L93,15.2L94,15.3L95,15.6L96,15.6L97,15.7L98,16L99,16L100,16.1L101,16.3L102,16.4L103,16.6L112,16.6L113,16L114,15.1L115,14.1L116,12.7L117,12.6L118,12.8L119,11.5L120,12L121,12.8L122,12.5L123,12.9L124,12.1L125,13.1L126,12.6L127,12.7L128,13.3L129,13.5L130,13.3L131,13.6L132,13.4L133,13.9L134,13.4L135,14L136,14.4L137,13.8L138,13.8L139,14.1L140,14.3L141,14.2L142,14.2L143,15.1L144,14.8L145,15.3L146,15.1L147,15.3L148,15.2L150,15.1L151,15.6L152,15.8L153,15.4L154,15.6L155,15.8L156,16.1L157,16.2L158,15.9L159,16.1L160,16.1L161,16.2L162,16.3L163,16.4L164,16.6L182,16.6L183,15.9L184,14.4L185,12.6L186,11.2L187,10.8L188,9.7L189,10.9L190,10.6L191,12.2L192,12L193,12.7L194,11.6L195,12.3L196,11.9L197,12.7L198,13.3L199,13.4L200,13.6L201,14.1L202,14.4L203,14L204,14.5L205,14.6L206,14.6L207,15.2L208,15.2L209,15.5L210,15.7L211,15.7L212,16.1L213,16.1L214,16.4L215,16.4L216,16.6L225,16.6L226,16.3L227,15.4L228,13.8L229,13.2L230,11.4L231,12.1L232,12L233,12.2L234,12L235,12.6L236,12.4L237,13.2L238,13.5L239,13.8L240,13.7L241,13.1L242,13.5L243,14.3L244,14.4L245,14.1L246,14.1L247,14.4L248,14.8L249,14.7L250,14.3L251,14.5L252,14.6L253,15.1L254,14.9L255,15.3L256,15.4L257,15.1L258,15.6L259,15.7L260,15.8L261,15.6L262,15.7L263,15.9L264,15.9L265,16.1L266,16.1L267,16.2L268,16.4L269,16.5L270,16.5L271,16.6L295,16.6L296,16.2L297,15L298,14.3L299,13.3L300,13.3L301,13.5L302,13.6L303,13.5L304,13.8L305,14.1L306,14.1L307,14.3L308,14.1L309,14.2L310,14.4L311,14.8L312,15.5L313,15.5L314,15.2L315,15.6L316,15.7L317,16.1L318,16.3L319,16.5L320,16.5L321,16.6L338,16.6L339,16.3L340,15.2L341,14.3L342,13L343,12.5L344,12L345,12.9L346,12.4L347,13.5L348,13.4L349,12.7L350,12.7L351,13.6L352,13.8L353,13L354,13.6L355,14.3L356,13.4L357,14L358,14.4L359,14.3L360,14.5L361,14.4L362,14.7L363,14.8L364,14.7L365,15.1L366,14.8L367,15L368,15L369,15.6L370,15.3L371,15.5L372,15.8L373,15.6L374,15.9L375,16.1L376,16.2L377,16L378,16.2L379,16.4L380,16.3L381,16.6L408,16.6L409,15.9L410,15.1L411,13.6L412,12.8L413,11.6L414,12.8L415,11.9L416,12.6L417,12.3L418,13.2L419,13.7L420,13.3L422,13.3L423,13.8L424,13.7L425,14.6L426,14.8L427,14.7L428,14.7L429,14.8L430,15.5L431,15.3L432,15.6L433,15.6L434,16L435,16.1L436,16.1L437,16.3L438,16.3L439,16.6L451,16.6L451,18L450,18.1L449,17.9L448,18L447,17.9L445,17.9L444,18.1L443,18L442,18L441,18.1L440,17.9L439,18L438,18.3L437,18.3L436,18.5L435,18.5L434,18.7L433,19L432,19L431,19.3L430,19.3L429,19.6L428,19.8L427,20L426,19.8L425,20.2L424,20.8L423,20.5L422,21.3L421,21L420,21.3L419,20.8L418,21.2L417,22.5L416,21.7L415,22.3L414,21.3L413,23.5L412,22L411,20.8L410,19.4L409,18.6L408,18L406,18L405,18.1L404,18L400,18L399,18L397,18L396,18L394,18L393,18L392,18L390,18L389,18L388,18L387,17.9L385,18L384,18L381,17.9L380,18.2L379,18.2L378,18.5L377,18.6L376,18.3L375,18.4L374,18.7L373,19.2L372,18.8L371,19.1L370,19.2L369,18.9L368,19.5L367,19.7L366,20L365,19.4L364,19.9L363,19.6L362,19.9L361,20L360,20.3L359,20.3L358,20.2L357,20.8L356,20.9L355,20.4L354,20.9L353,21.6L352,21.1L351,21L350,21.7L349,22.2L348,21.5L347,21.1L346,21.9L345,21.6L344,22.4L343,21.7L342,21.7L341,20.4L340,19.4L339,18.3L338,18.1L337,18.1L336,17.9L334,18L333,18L328,18.1L327,18L323,18L322,18.1L321,18L320,18L319,18.2L318,18.2L317,18.5L316,18.9L315,18.9L314,19.2L313,19L312,19.1L311,19.9L310,20.3L309,20.3L308,20.7L307,20.2L306,20.7L305,20.4L304,21L303,21L302,20.7L301,20.9L300,21.1L299,21.4L298,20.4L297,19.4L296,18.5L295,18.1L294,18L293,18.1L292,18L290,18L289,18L287,17.9L286,18L283,18L282,18L279,18L278,18L273,18L272,18L269,18L268,18.2L267,18.5L266,18.5L265,18.4L264,18.8L263,18.7L262,18.7L261,19L260,18.8L259,18.9L258,19.1L257,19.7L256,19.1L255,19.3L254,19.5L253,19.6L252,20.2L251,20.1L250,20.5L249,19.9L248,20L247,19.9L246,20.8L245,20.7L244,20.4L243,20.5L242,21.2L241,21.6L240,20.6L239,20.5L238,20.9L237,21.2L236,21.9L235,22.4L234,23L233,22.4L232,22.5L231,22.6L230,23.7L229,21L228,20.9L227,19.4L226,18.2L225,18L224,18L223,18.1L222,18L221,18.1L216,18.1L215,18.2L214,18.2L213,18.5L212,18.5L211,19L210,18.8L209,19L208,19.2L207,19.3L206,20.1L205,19.9L204,19.8L203,20.7L202,20.3L201,20.8L200,20.8L199,21L198,21.2L197,21.6L196,22.7L195,22.5L194,23.2L193,21.9L192,22.2L191,22.5L190,24.3L189,23.2L188,25.6L187,24.4L186,23.8L185,21.7L184,20.2L183,18.6L182,18.1L181,18L180,18L179,17.9L178,17.9L177,18L176,17.9L174,18L173,18L170,18.1L169,17.9L168,18L167,18L166,18.1L164,18L163,18.1L162,18.3L161,18.4L160,18.5L159,18.3L158,18.7L157,18.5L156,18.4L155,18.9L154,19.1L153,19.2L152,18.8L151,18.9L150,19.4L149,19.5L148,19.5L147,19.2L146,19.5L145,19.4L144,19.6L143,19.7L142,20.6L141,20.6L140,20.1L139,20.4L138,20.9L137,20.6L136,20.2L135,20.7L134,21.3L133,21L132,21.2L131,20.9L130,21.1L129,21L128,21.6L127,21.7L126,21.8L125,21.6L124,22.8L123,21.8L122,21.7L121,21.9L120,23L119,23L118,21.5L117,22.3L116,21.9L115,20.3L114,19.7L113,18.4L112,17.9L111,17.9L110,18L109,17.9L105,17.9L104,18L103,17.9L102,18.2L101,18.2L100,18.4L99,18.5L98,18.5L97,18.8L96,18.9L95,19.2L94,19.1L93,19.6L92,19.9L91,20L90,20L89,19.7L88,20.3L87,20.8L86,20.6L85,21.1L84,21.5L83,20.8L82,21.5L81,21L80,22.5L79,22.2L78,23L77,21.8L76,22.8L75,23.2L74,22.4L73,22.2L72,21.3L71,20L70,18.9L69,18L68,17.9L67,18.1L66,18L64,18.1L63,18L61,18L60,17.9L59,18L58,18L57,18L56,17.9L55,18L54,18L49,18.1L48,18L47,18.1L46,18L43,18L42,18L41,18L40,18.1L39,18.2L38,18.3L37,18.6L36,18.8L35,18.7L34,18.6L33,18.7L32,18.8L31,19L30,19.3L29,19.7L27,19.7L26,19.8L25,20.3L24,19.9L23,20.6L22,20.2L21,20.5L20,20.5L19,20.3L18,20.1L17,21.2L16,20.4L15,20.8L14,21.3L13,21L12,22.1L11,21.6L10,21.6L9,21.4L8,22.6L7,23L6,22.8L5,22.3L4,22.5L3,21.1L2,20.2L1,19.6L0,18.6ZM0,53.3L1,52L2,51.7L3,51L4,48.7L5,49.8L6,49.6L7,48.9L8,49.6L9,50.4L10,50.2L11,50.4L12,49.4L13,51.4L14,50.6L15,51.2L16,51.2L17,50.7L18,51.6L19,51.3L20,51L21,51L22,51.7L23,51.6L24,52L25,52.1L26,52.5L27,52.6L28,52.2L29,52.1L30,52.4L31,52.7L32,53.1L33,53.2L34,53.2L35,52.9L36,53.3L37,53.3L38,53.6L39,53.7L40,53.9L41,53.9L42,54L43,53.8L45,53.9L46,53.9L47,53.9L54,53.9L55,53.9L56,53.9L58,53.9L59,53.9L61,53.9L62,54L63,53.9L64,53.8L65,54L68,53.9L69,53.9L70,53.2L71,51.8L72,50.7L73,49.4L74,49.5L75,48.7L76,49.1L77,49.3L78,49.1L79,49.6L80,49.8L81,51.1L82,50.9L83,51.1L84,50.5L85,50.5L86,51.5L87,51.2L88,51.2L89,52L90,52.1L91,52.3L92,51.9L93,52.6L94,52.8L95,52.9L96,53L97,52.8L98,53.2L99,53.2L100,53.5L101,53.7L102,53.7L103,53.9L104,53.9L111,53.9L112,54L113,53.4L114,52.5L115,51.5L116,50.1L117,50.2L118,50.3L119,48.7L120,49.3L121,49.8L122,49.4L123,50.3L124,49.6L125,50.3L126,50.1L127,50.3L128,50.3L129,51.2L130,50.9L131,50.6L132,50.6L133,51L134,50.7L135,51.2L136,51.5L137,51.1L138,50.8L139,51.2L140,51.8L141,51.2L142,51.5L143,52.5L144,52.1L145,52.4L146,52.3L147,52.6L148,52.5L149,52.5L150,52.3L151,53L152,53L153,52.7L154,52.7L155,53L156,53.5L157,53.5L158,53.2L159,53.5L160,53.4L161,53.5L162,53.6L163,53.7L164,54L165,53.9L166,54L167,53.9L168,54L169,53.8L180,53.9L181,53.8L182,53.9L183,53.3L184,51.7L185,49.8L186,48.7L187,48.5L188,46.4L189,48.6L190,48.2L191,49.2L192,48.8L193,49.9L194,48.7L195,49.7L196,49.6L197,49.5L198,50.4L199,50.7L200,50.6L201,51.3L202,51.7L203,51.5L204,52L205,51.8L206,51.7L207,52.6L208,52.7L209,52.7L210,53.1L211,52.9L212,53.3L213,53.5L214,53.8L215,53.6L216,53.9L217,53.9L218,53.9L219,53.9L220,54L221,53.8L222,53.9L223,54L224,53.8L225,53.9L226,53.7L227,52.5L228,50.9L229,50.2L230,48.6L231,48.9L232,49.6L233,49.4L234,49.3L235,49.9L236,49.3L237,50.2L238,51.1L239,51L240,51.2L241,50.6L242,50.8L243,51.8L244,51.5L245,51.2L246,51.1L247,51.8L248,52.1L249,52.1L250,51.4L251,51.9L252,51.7L253,52.3L254,52.2L255,52.5L256,52.6L257,52.1L258,52.8L259,52.8L260,53.2L261,52.7L262,53.1L263,53.1L264,53.2L265,53.4L267,53.4L268,53.7L269,53.9L270,53.8L271,53.8L272,53.8L273,53.9L274,53.9L275,53.9L278,53.9L279,53.9L280,53.9L282,53.9L283,54L284,53.9L285,53.8L286,53.9L287,53.8L288,54L289,53.9L290,53.8L291,53.9L293,53.9L294,53.9L295,53.9L296,53.3L297,52.4L298,51.7L299,50.3L300,50.2L301,50.8L302,51.1L303,50.6L304,51.4L305,51.1L306,51.7L307,51.7L308,51.1L309,51.7L310,51.8L311,52.2L312,52.6L313,52.8L314,52.4L315,53L316,52.9L317,53.4L318,53.6L319,53.7L320,53.7L321,53.9L322,53.9L323,54L324,53.9L325,53.9L326,53.9L327,53.8L328,53.9L331,54L332,53.9L335,53.9L336,54L337,53.9L338,53.9L339,53.7L340,52.6L341,51.9L342,50.6L343,50.1L344,48.9L345,50.5L346,49.7L347,50.8L348,50.7L349,50.4L350,50.2L351,50.5L352,51.2L353,50.3L354,50.9L355,51.6L356,51L357,51.2L358,51.4L359,51.3L360,51.9L361,51.7L362,52.1L363,52.1L364,51.8L365,52.4L366,52.3L367,52.4L368,52.5L369,52.9L370,52.7L371,52.9L372,53.1L373,52.9L374,53.2L375,53.5L376,53.6L377,53.3L378,53.4L379,53.7L380,53.7L381,53.9L383,53.9L384,54L385,53.8L387,53.8L388,54L389,53.9L396,53.8L397,53.9L400,53.9L401,54L402,53.9L404,53.9L405,54L406,53.8L407,54L408,53.9L409,53.1L410,52.2L411,50.7L412,49.7L413,49.5L414,49.7L415,48.8L416,49.8L417,49.3L418,50.7L419,50.9L420,50.7L421,50.5L422,50.7L423,50.8L424,51L425,52L426,52L427,51.9L428,52.2L429,52.1L430,52.6L431,52.7L432,52.9L433,52.8L434,53.2L435,53.4L436,53.4L437,53.7L438,53.7L439,53.8L440,53.9L442,53.9L443,53.8L444,53.9L445,53.9L446,54L447,53.9L448,53.9L450,53.9L451,54L451,55.3L450,55.4L449,55.3L447,55.3L446,55.3L443,55.3L442,55.3L440,55.3L439,55.3L438,55.5L437,55.6L436,55.8L435,55.7L434,55.8L433,56.4L432,56.4L431,56.8L430,56.4L429,57.2L428,57.2L427,57.3L426,57.4L425,57.1L424,58.5L423,57.9L422,58.8L421,58.9L420,58.4L419,58.2L418,58.4L417,60L416,59.7L415,60.4L414,58.9L413,60.7L412,59L411,58.6L410,56.9L409,55.9L408,55.3L407,55.3L406,55.3L405,55.4L404,55.3L402,55.3L401,55.4L400,55.3L397,55.3L396,55.3L395,55.4L394,55.3L393,55.2L392,55.3L391,55.3L390,55.3L389,55.4L386,55.4L385,55.3L384,55.4L383,55.3L381,55.4L380,55.7L379,55.5L378,55.7L377,55.9L376,55.8L375,55.9L374,56.1L373,56.3L372,56.1L371,56.6L370,56.7L369,56.2L368,56.7L367,57.1L366,57.1L365,56.6L364,57.2L363,57.1L362,56.9L361,57.6L360,57.2L359,57.7L358,57.4L357,58L356,58.6L355,57.6L354,58.3L353,59.1L352,57.9L351,58.3L350,58.7L349,59.3L348,58.1L347,58.2L346,59.1L345,59.1L344,60.4L343,59.1L342,58.5L341,57.9L340,56.8L339,55.5L338,55.3L337,55.3L335,55.3L334,55.2L333,55.3L332,55.4L331,55.3L330,55.4L323,55.3L322,55.4L321,55.3L320,55.4L319,55.5L318,55.6L317,55.7L316,56.2L315,56.3L314,56.8L313,56.2L312,56.4L311,57.2L310,57.6L309,57.5L308,57.7L307,57.8L306,58L305,57.5L304,57.8L303,58.6L302,58.4L301,58.1L300,58.4L299,58.2L298,57.8L297,57L296,55.7L295,55.3L292,55.3L291,55.3L289,55.3L288,55.4L287,55.3L286,55.2L285,55.3L284,55.4L283,55.3L282,55.4L277,55.3L276,55.3L275,55.3L274,55.3L273,55.3L272,55.4L271,55.2L270,55.4L269,55.3L268,55.4L267,55.8L266,55.9L265,55.7L264,56.1L263,56.1L262,56.2L261,56.4L260,56.2L259,56.2L258,56.4L257,56.9L256,56.5L255,56.4L254,56.8L253,57L252,57.3L251,57.6L250,57.6L249,57.4L248,56.9L247,57.8L246,57.9L245,57.7L244,57.2L243,57.9L242,58.7L241,59.2L240,58.1L239,57.9L238,58.5L237,59L236,59.7L235,59.5L234,59.6L233,59.2L232,60.1L231,60.2L230,61L229,58.8L228,57.9L227,56.6L226,55.6L225,55.3L224,55.4L222,55.4L221,55.3L217,55.3L216,55.3L215,55.6L214,55.5L213,55.8L212,55.7L211,56.2L210,56.1L209,56.6L208,56.9L207,56.7L206,57.4L205,57.5L204,57.2L203,58L202,57.5L201,57.6L200,58.3L199,58.1L198,58.8L197,58.8L196,60.2L195,59.5L194,60.4L193,59L192,59.7L191,59.7L190,60.9L189,60.8L188,61.7L187,60.5L186,60.4L185,59.7L184,57.8L183,56L182,55.3L181,55.3L179,55.3L178,55.3L177,55.3L176,55.3L174,55.3L173,55.4L172,55.3L170,55.3L169,55.4L168,55.3L164,55.4L163,55.4L162,55.6L161,55.7L159,55.7L158,55.9L157,55.7L156,55.7L155,56.1L154,56.4L153,56.5L152,55.9L151,56.4L150,56.8L149,56.9L148,56.7L147,56.7L146,56.8L145,56.7L144,57L143,56.6L142,57.5L141,57.6L140,57.3L139,57.7L138,57.8L137,57.9L136,57.4L135,57.6L134,58.6L133,58L132,58.3L131,58.1L130,58.9L129,58.2L128,58.7L127,58.9L126,59.8L125,58.5L124,59.3L123,58.7L122,59.2L121,58.9L120,59.5L119,60.8L118,59.3L117,59.1L116,59.5L115,57.7L114,56.6L113,55.9L112,55.4L111,55.3L110,55.3L109,55.4L108,55.3L104,55.4L103,55.3L102,55.6L101,55.6L100,55.8L99,56L98,55.9L97,56.2L96,56.3L95,56.2L94,56.8L93,56.5L92,57.2L91,57.3L90,57.2L89,57.4L88,57.8L87,57.7L86,57.8L85,58.9L84,58.7L83,57.9L82,58.4L81,58.4L80,59.9L79,58.8L78,60.5L77,59.4L76,60L75,60.1L74,60.4L73,59.4L72,58.4L71,57.4L70,56.2L69,55.2L68,55.4L67,55.2L66,55.4L63,55.3L62,55.3L61,55.3L60,55.3L59,55.3L58,55.3L57,55.3L56,55.3L55,55.3L54,55.3L53,55.4L52,55.4L51,55.3L50,55.3L47,55.2L46,55.4L45,55.3L42,55.3L41,55.4L40,55.4L39,55.6L38,55.7L37,55.9L36,56L35,56.1L34,55.8L33,56L32,56.1L31,56.3L30,56.7L29,57.1L28,57L27,56.9L26,56.7L25,57.4L24,57.3L23,57.6L22,57.5L21,57.8L20,58.3L19,57.6L18,58L17,57.9L16,58L15,57.9L14,58.4L13,58.3L12,59.8L11,58.8L10,58.9L9,59.2L8,59.6L7,60.5L6,59.2L5,58.9L4,60.7L3,58.5L2,58.1L1,57.1L0,55.8Z" fill="#203f72"/></svg><div class="r" style="left:0;top:36px;width:100%;height:1px;background:#fff;opacity:.9"></div><div class="l">10 Synth Chords C_251120-112003_4.wav</div></div>
<div class="c" style="left:635px;top:354px;width:29px;height:74px;background:linear-gradient(#6e54f9,#4e3ebd);border-color:#a08ef9"><svg class="w" width="29" height="74" viewBox="0 0 29 74" preserveAspectRatio="none"><path d="M0,16.1L1,15.5L2,14.9L3,14L4,13.5L5,14.1L6,13.7L7,12.5L8,13.4L9,12.6L10,13L11,12.5L12,12.3L13,12.8L14,13.2L15,13.5L16,13.4L17,13.7L18,14.3L19,14.8L20,15.3L21,16.3L22,16.3L23,15.8L24,14.7L25,14.8L26,14.5L27,13.7L28,13.7L29,13.9L29,20.8L28,20.7L27,20.8L26,20L25,19.9L24,20L23,18.8L22,18.3L21,18.3L20,19.3L19,19.9L18,20.4L17,21.2L16,21.4L15,21L14,21.6L13,21.6L12,22.6L11,22.4L10,21.7L9,22.1L8,21.3L7,22.1L6,20.6L5,20.7L4,20.8L3,20.3L2,19.9L1,19L0,18.4ZM0,53.4L1,52.9L2,51.9L3,51.4L4,51.1L5,51.1L6,50.7L7,49.7L8,50.8L9,49.7L10,50.6L11,49.8L12,49.9L13,49.8L14,50.8L15,50.7L16,50.4L17,51.1L18,51.6L19,52.3L20,52.7L21,53.5L22,53.5L23,53L24,51.8L25,52.1L26,51.7L27,50.9L28,51L29,51.4L29,58.3L28,57.8L27,58.3L26,57.6L25,56.9L24,57.3L23,56L22,55.6L21,55.6L20,56.5L19,57.1L18,57.5L17,58.1L16,58.4L15,58.5L14,58.5L13,59.2L12,59.3L11,59.5L10,58.9L9,59.8L8,58.1L7,59.5L6,58L5,57.7L4,58.1L3,58.2L2,57.3L1,56.3L0,55.7Z" fill="#2b2072"/></svg><div class="l" style="transform:scaleX(0.61)">10 Vox A_251120-112016_5.wav</div></div>
<div class="c" style="left:748px;top:354px;width:29px;height:74px;background:linear-gradient(#6e54f9,#4e3ebd);border-color:#a08ef9"><svg class="w" width="29" height="74" viewBox="0 0 29 74" preserveAspectRatio="none"><path d="M0,16.1L1,15.5L2,14.9L3,14L4,13.5L5,14.1L6,13.7L7,12.5L8,13.4L9,12.6L10,13L11,12.5L12,12.3L13,12.8L14,13.2L15,13.5L16,13.4L17,13.7L18,14.3L19,14.8L20,15.3L21,16.3L22,16.3L23,15.8L24,14.7L25,14.8L26,14.5L27,13.7L28,13.7L29,13.9L29,20.8L28,20.7L27,20.8L26,20L25,19.9L24,20L23,18.8L22,18.3L21,18.3L20,19.3L19,19.9L18,20.4L17,21.2L16,21.4L15,21L14,21.6L13,21.6L12,22.6L11,22.4L10,21.7L9,22.1L8,21.3L7,22.1L6,20.6L5,20.7L4,20.8L3,20.3L2,19.9L1,19L0,18.4ZM0,53.4L1,52.9L2,51.9L3,51.4L4,51.1L5,51.1L6,50.7L7,49.7L8,50.8L9,49.7L10,50.6L11,49.8L12,49.9L13,49.8L14,50.8L15,50.7L16,50.4L17,51.1L18,51.6L19,52.3L20,52.7L21,53.5L22,53.5L23,53L24,51.8L25,52.1L26,51.7L27,50.9L28,51L29,51.4L29,58.3L28,57.8L27,58.3L26,57.6L25,56.9L24,57.3L23,56L22,55.6L21,55.6L20,56.5L19,57.1L18,57.5L17,58.1L16,58.4L15,58.5L14,58.5L13,59.2L12,59.3L11,59.5L10,58.9L9,59.8L8,58.1L7,59.5L6,58L5,57.7L4,58.1L3,58.2L2,57.3L1,56.3L0,55.7Z" fill="#2b2072"/></svg><div class="l" style="transform:scaleX(0.61)">10 Vox A_251120-112016_5.wav</div></div>
<div class="c" style="left:861px;top:354px;width:29px;height:74px;background:linear-gradient(#6e54f9,#4e3ebd);border-color:#a08ef9"><svg class="w" width="29" height="74" viewBox="0 0 29 74" preserveAspectRatio="none"><path d="M0,16.1L1,15.5L2,14.9L3,14L4,13.5L5,14.1L6,13.7L7,12.5L8,13.4L9,12.6L10,13L11,12.5L12,12.3L13,12.8L14,13.2L15,13.5L16,13.4L17,13.7L18,14.3L19,14.8L20,15.3L21,16.3L22,16.3L23,15.8L24,14.7L25,14.8L26,14.5L27,13.7L28,13.7L29,13.9L29,20.8L28,20.7L27,20.8L26,20L25,19.9L24,20L23,18.8L22,18.3L21,18.3L20,19.3L19,19.9L18,20.4L17,21.2L16,21.4L15,21L14,21.6L13,21.6L12,22.6L11,22.4L10,21.7L9,22.1L8,21.3L7,22.1L6,20.6L5,20.7L4,20.8L3,20.3L2,19.9L1,19L0,18.4ZM0,53.4L1,52.9L2,51.9L3,51.4L4,51.1L5,51.1L6,50.7L7,49.7L8,50.8L9,49.7L10,50.6L11,49.8L12,49.9L13,49.8L14,50.8L15,50.7L16,50.4L17,51.1L18,51.6L19,52.3L20,52.7L21,53.5L22,53.5L23,53L24,51.8L25,52.1L26,51.7L27,50.9L28,51L29,51.4L29,58.3L28,57.8L27,58.3L26,57.6L25,56.9L24,57.3L23,56L22,55.6L21,55.6L20,56.5L19,57.1L18,57.5L17,58.1L16,58.4L15,58.5L14,58.5L13,59.2L12,59.3L11,59.5L10,58.9L9,59.8L8,58.1L7,59.5L6,58L5,57.7L4,58.1L3,58.2L2,57.3L1,56.3L0,55.7Z" fill="#2b2072"/></svg><div class="l" style="transform:scaleX(0.61)">10 Vox A_251120-112016_5.wav</div></div>
<div class="c" style="left:974px;top:354px;width:29px;height:74px;background:linear-gradient(#6e54f9,#4e3ebd);border-color:#a08ef9"><svg class="w" width="29" height="74" viewBox="0 0 29 74" preserveAspectRatio="none"><path d="M0,16.1L1,15.5L2,14.9L3,14L4,13.5L5,14.1L6,13.7L7,12.5L8,13.4L9,12.6L10,13L11,12.5L12,12.3L13,12.8L14,13.2L15,13.5L16,13.4L17,13.7L18,14.3L19,14.8L20,15.3L21,16.3L22,16.3L23,15.8L24,14.7L25,14.8L26,14.5L27,13.7L28,13.7L29,13.9L29,20.8L28,20.7L27,20.8L26,20L25,19.9L24,20L23,18.8L22,18.3L21,18.3L20,19.3L19,19.9L18,20.4L17,21.2L16,21.4L15,21L14,21.6L13,21.6L12,22.6L11,22.4L10,21.7L9,22.1L8,21.3L7,22.1L6,20.6L5,20.7L4,20.8L3,20.3L2,19.9L1,19L0,18.4ZM0,53.4L1,52.9L2,51.9L3,51.4L4,51.1L5,51.1L6,50.7L7,49.7L8,50.8L9,49.7L10,50.6L11,49.8L12,49.9L13,49.8L14,50.8L15,50.7L16,50.4L17,51.1L18,51.6L19,52.3L20,52.7L21,53.5L22,53.5L23,53L24,51.8L25,52.1L26,51.7L27,50.9L28,51L29,51.4L29,58.3L28,57.8L27,58.3L26,57.6L25,56.9L24,57.3L23,56L22,55.6L21,55.6L20,56.5L19,57.1L18,57.5L17,58.1L16,58.4L15,58.5L14,58.5L13,59.2L12,59.3L11,59.5L10,58.9L9,59.8L8,58.1L7,59.5L6,58L5,57.7L4,58.1L3,58.2L2,57.3L1,56.3L0,55.7Z" fill="#2b2072"/></svg><div class="l" style="transform:scaleX(0.61)">10 Vox A_251120-112016_5.wav</div></div>
<div class="c" style="left:1087px;top:354px;width:452px;height:74px;background:linear-gradient(#6e54f9,#4e3ebd);border-color:#a08ef9"><svg class="w" width="452" height="74" viewBox="0 0 452 74" preserveAspectRatio="none"><path d="M0,16.1L1,15.5L2,14.9L3,14L4,13.5L5,14.1L6,13.7L7,12.5L8,13.4L9,12.6L10,13L11,12.5L12,12.3L13,12.8L14,13.2L15,13.5L16,13.4L17,13.7L18,14.3L19,14.8L20,15.3L21,16.3L22,16.3L23,15.8L24,14.7L25,14.8L26,14.5L27,13.7L28,13.7L29,13.9L30,13L31,12.9L32,12.4L33,13.4L34,12.4L35,12.8L36,12.4L37,12.9L38,13.5L39,13.5L40,13.8L41,13.1L42,14.2L43,14.1L44,14.9L45,15L46,15.7L47,16.3L48,16.3L49,15.8L50,15.7L51,15.5L52,14.9L53,14.6L54,14.4L55,14.4L56,14.3L57,14L58,14.4L59,13.9L60,14L61,14L62,14L63,14.3L64,14.7L65,14.9L66,15.1L67,15.5L68,16.2L69,16.3L70,16.2L71,15.8L72,15.3L73,14.8L74,14.7L75,13.5L76,13.5L77,13.9L78,12.9L79,13.6L80,13.6L81,12.7L82,13L83,12.5L84,12.3L85,13.2L86,13.1L87,13.6L88,13.8L89,13.3L90,13.5L91,14.2L92,14.5L93,14.9L94,15.5L95,16.3L97,16.3L98,16L99,15.6L100,15.6L101,14.8L103,14.8L104,14.6L105,14.1L106,14.4L107,14.4L108,14.5L109,14.3L110,13.8L111,13.9L112,14.3L113,13.6L114,14.4L115,14.2L116,13.9L117,13.8L118,14.3L119,14.8L120,14.4L121,14.7L122,15.1L123,15L124,14.8L125,15.6L126,15.7L127,16L128,16.1L129,16.3L131,16.3L132,16.1L133,15.9L134,15.5L135,15.6L136,15.3L137,14.9L138,14.6L139,15L140,14.5L141,14.3L142,14.6L143,14.1L144,14.2L145,14.4L146,14.1L147,14.7L148,14.2L149,14.8L150,14.6L151,14.9L152,14.7L153,14.5L154,14.8L155,14.8L156,14.7L157,15L158,15.1L159,15.3L160,15.9L161,16L162,16.3L164,16.3L165,15.8L166,15.8L167,15.2L168,15.4L169,15L170,14.5L171,14.7L172,14.7L173,13.8L174,14.3L175,14.6L176,13.8L177,13.5L178,14L179,14.6L180,14.3L181,14.2L182,14.7L183,14.7L184,14.6L185,14.9L186,15.1L187,15.4L188,16L189,16.3L190,16L191,15.4L192,14.3L193,14.4L194,13.5L195,13.6L196,12.8L197,12.7L198,12.3L199,12.4L200,12.4L201,12.1L202,12.7L203,12.4L204,12.9L205,12.8L206,13.8L207,14.2L208,14.3L209,14.8L210,15.1L211,16L212,16.3L213,16.3L214,16.1L215,15.7L216,15.2L217,15.2L218,14.9L219,14.7L220,14.4L221,14.8L222,14.5L223,14.1L224,14.5L225,14.1L226,14.4L227,14.6L228,14.5L229,14.4L230,14.7L231,13.9L232,14.5L233,14.6L234,14.2L235,15L236,14.4L237,14.8L238,15.2L239,15.1L240,14.9L241,15.7L242,15.8L243,16.1L244,16.2L245,16.3L246,16.3L247,15.9L248,15.1L249,15L250,14L251,14.3L252,13.8L253,13.9L254,13.3L255,13L256,13L257,13.7L258,12.5L259,13.6L260,12.5L261,13L262,13.6L263,12.8L264,12.8L265,14.1L266,13.2L267,13.9L268,13.7L269,14.2L270,14.8L271,15L272,15.7L273,16.3L274,16.3L275,15.9L276,15.2L277,14.5L278,14.7L279,14.4L280,14.2L281,13.2L282,14L283,13.7L284,13L285,12.7L286,13L287,12.4L288,12.4L289,12.8L290,13.3L291,12.4L292,12.5L293,12L294,12.5L295,13.5L296,13.4L297,13.4L298,13L299,13.7L300,14L301,14.2L302,14.4L303,14.5L304,14.7L305,15L306,15.9L307,16.3L308,16.3L309,15.8L310,15.3L311,15.4L312,15.1L313,14.7L314,14.5L315,14.5L316,14.4L317,14L318,13.3L319,13.7L320,14L321,13.2L322,14L323,14.2L324,14.3L325,14.5L326,13.7L327,14.3L328,14.1L329,14.8L330,15.4L331,15.5L332,16L333,16.3L334,16.1L335,15.2L336,14.3L337,14.2L338,13.3L339,13.4L340,13.1L341,13.6L342,12.4L343,12.2L344,12.9L345,12.3L346,12.5L347,13.1L348,13L349,12.6L350,12.9L351,14.3L352,14.4L353,14.8L354,15.1L355,16.3L356,16.3L357,15.9L358,15.5L359,15L360,14.7L361,14.6L362,14.3L363,14.1L364,14L365,14.2L366,13.8L367,13.6L368,14.1L369,13.5L370,13.7L371,13.9L372,13.9L373,13.4L374,14.4L375,14.5L376,14.1L377,14.6L378,14.1L379,14.2L380,14.9L381,15.1L382,15.2L383,15.4L384,16L385,16.3L387,16.3L388,15.7L389,15.5L390,15.2L391,15L392,14.7L393,15L394,14.5L395,14.8L396,14.1L397,14.6L398,14L399,14.2L400,14.5L401,14.3L402,14.7L403,14.4L404,14.6L405,14.7L406,14.2L407,14.6L408,15.1L409,15.5L410,15.7L411,15.6L412,16L413,16.3L414,16.3L415,16.1L416,15.7L417,15.4L418,14.6L419,14.7L420,14.3L421,13.8L422,13.9L423,14L424,13.7L425,13.6L426,13.6L427,13.7L428,14.2L429,13.3L430,13.6L431,13.6L432,13.9L433,14.6L434,14.6L435,14.7L436,15.3L437,15.3L438,15.9L439,16.3L440,16.3L441,16L442,15.9L443,15.5L444,15.3L445,14.5L446,14.5L447,14.2L448,14.2L449,14.4L450,14.2L451,13.5L451,21.1L450,20.4L449,20.1L448,20.5L447,20.2L446,20.1L445,20L444,19.4L443,19.2L442,18.8L441,18.6L440,18.2L439,18.3L438,18.8L437,19.5L436,19.1L435,20.1L434,20L433,20L432,20.6L431,21L430,20.7L429,21.3L428,20.2L427,20.7L426,20.7L425,21.1L424,21.2L423,20.4L422,20.8L421,21.1L420,20.3L419,19.9L418,20.2L417,19.2L416,19L415,18.4L414,18.4L413,18.2L412,18.7L411,19L410,18.8L409,19.1L408,19.6L407,19.8L406,20.2L405,19.8L404,20.3L403,19.9L402,20L401,20.4L400,19.9L399,20.3L398,20.3L397,20L396,20.8L395,19.6L394,19.9L393,19.6L392,19.9L391,19.5L390,19.3L389,19.2L388,18.9L387,18.3L385,18.4L384,18.7L383,19.1L382,19.5L381,19.6L380,19.7L379,20.5L378,20.4L377,20.2L376,20.6L375,20.1L374,20L373,21.3L372,20.5L371,20.9L370,21.1L369,21.5L368,20.7L367,20.8L366,20.6L365,20.5L364,20.3L363,20.3L362,20.4L361,20.1L360,20L359,19.8L358,18.9L357,18.7L356,18.2L355,18.2L354,19.5L353,19.8L352,20.2L351,20.6L350,21.9L349,21.5L348,21.4L347,21.6L346,22.2L345,21.9L344,22L343,22L342,22L341,21.4L340,21.4L339,21.4L338,21.7L337,20.3L336,20.3L335,19.4L334,18.6L333,18.3L332,18.6L331,19L330,19.2L329,19.6L328,20.3L327,20.2L326,21.1L325,20.1L324,20.2L323,20.6L322,20.9L321,21.2L320,20.7L319,21.2L318,21.3L317,20.5L316,20L315,19.8L314,20L313,20L312,19.6L311,19.3L310,19.4L309,18.7L308,18.2L307,18.3L306,18.7L305,19.6L304,19.7L303,20L302,19.9L301,20.5L300,20.6L299,21L298,21.3L297,21L296,21.5L295,21.4L294,21.9L293,22.9L292,22.5L291,22.1L290,21.3L289,21.4L288,22.3L287,22.3L286,21.8L285,21.5L284,22.1L283,21.1L282,20.7L281,21.2L280,20.4L279,20.3L278,19.7L277,20.4L276,19.5L275,18.8L274,18.4L273,18.4L272,19L271,19.6L270,19.6L269,20.3L268,21.1L267,21.1L266,21.3L265,20.8L264,22.2L263,22.1L262,20.7L261,21.2L260,21.9L259,21L258,22.4L257,21L256,21.4L255,21.6L254,21L253,20.6L252,21L251,20.3L250,20.8L249,19.4L248,19.4L247,18.8L246,18.4L244,18.3L243,18.5L242,18.7L241,18.9L240,19.6L239,19.6L238,19.4L237,19.8L236,20.4L235,19.5L234,20.5L233,19.9L232,20.4L231,20.5L230,19.6L229,20.2L228,20L227,20.1L226,20.1L225,20.6L224,20.1L223,20.4L222,20.2L221,19.6L220,20.3L219,20.1L218,19.9L217,19.6L216,19.2L215,19L214,18.5L213,18.4L212,18.4L211,18.7L210,19.6L209,19.7L208,20.4L207,20.5L206,20.8L205,21.9L204,22L203,22.2L202,21.9L201,23L200,22L199,22.5L198,22.1L197,21.5L196,21.6L195,21.4L194,21.3L193,20.3L192,20.4L191,19.1L190,18.5L189,18.3L188,18.7L187,19.4L186,19.7L185,19.9L184,20.1L183,19.7L182,20.1L181,20.7L180,20.6L179,19.9L178,20.4L177,21L176,20.7L175,19.9L174,20.1L173,20.8L172,20L171,19.9L170,20L169,19.9L168,19.2L167,19.3L166,18.8L165,18.7L164,18.4L163,18.3L162,18.2L161,18.6L160,18.7L159,19.3L158,19.7L157,19.6L156,19.7L155,19.8L154,19.9L153,19.9L152,19.8L151,19.9L150,19.9L149,19.6L148,20.2L147,20L146,20.3L145,20.1L144,20.3L143,20.7L142,19.8L141,20.1L140,20.1L139,19.5L138,20L137,19.9L136,19.2L135,19L134,19L133,18.8L132,18.5L131,18.2L130,18.4L129,18.3L128,18.6L127,18.5L126,18.9L125,19.1L124,19.8L123,19.4L122,19.4L121,19.9L120,20.4L119,19.9L118,20.2L117,20.5L116,20.8L115,20.6L114,20.3L113,20.7L112,20.1L111,20.7L110,20.7L109,20.4L108,20.2L107,20.1L106,20.2L105,20.8L104,20L103,19.8L102,19.8L101,20L100,19L99,18.9L98,18.5L97,18.3L96,18.3L95,18.4L94,19L93,19.8L92,20.3L91,20.4L90,20.7L89,21.1L88,20.4L87,20.9L86,21.6L85,21.4L84,22.6L83,21.7L82,21.4L81,21.9L80,21.3L79,21.2L78,21.9L77,21L76,21.4L75,20.7L74,20.1L73,19.6L72,19.3L71,18.8L70,18.3L69,18.3L68,18.5L67,19.2L66,19.6L65,19.7L64,20L63,20.4L62,20.6L61,20.4L60,20.8L59,20.5L58,20.2L57,20.9L56,20.2L55,20.2L54,20.4L53,20.2L52,19.6L51,18.9L50,18.9L49,18.8L48,18.3L47,18.4L46,19L45,19.7L44,19.8L43,20.7L42,20.4L41,21.1L40,20.9L39,20.8L38,21.2L37,21.5L36,22.4L35,21.6L34,22.3L33,21.1L32,22.3L31,21.6L30,21.9L29,20.8L28,20.7L27,20.8L26,20L25,19.9L24,20L23,18.8L22,18.3L21,18.3L20,19.3L19,19.9L18,20.4L17,21.2L16,21.4L15,21L14,21.6L13,21.6L12,22.6L11,22.4L10,21.7L9,22.1L8,21.3L7,22.1L6,20.6L5,20.7L4,20.8L3,20.3L2,19.9L1,19L0,18.4ZM0,53.4L1,52.9L2,51.9L3,51.4L4,51.1L5,51.1L6,50.7L7,49.7L8,50.8L9,49.7L10,50.6L11,49.8L12,49.9L13,49.8L14,50.8L15,50.7L16,50.4L17,51.1L18,51.6L19,52.3L20,52.7L21,53.5L22,53.5L23,53L24,51.8L25,52.1L26,51.7L27,50.9L28,51L29,51.4L30,50.6L31,50.5L32,49.7L33,51L34,49.7L35,49.8L36,50L37,50.4L38,50.7L39,50.7L40,51.2L41,50.2L42,51.5L43,51.3L44,52.3L45,52.2L46,52.9L47,53.7L48,53.7L49,53.1L50,52.9L51,52.8L52,52.2L53,51.9L54,51.7L55,51.4L56,51.5L58,51.5L59,51.3L60,51.6L61,51.1L62,51.2L63,51.5L64,52.1L65,52.3L66,52.2L67,52.9L68,53.6L69,53.5L70,53.6L71,53.1L72,52.4L73,52L74,52.1L75,51L76,50.8L77,51.1L78,50.6L79,51L80,51.1L81,50.3L82,50L83,49.6L84,49.8L85,50.6L87,50.6L88,51.4L89,50.4L90,50.8L91,51.2L92,51.7L93,52.3L94,52.8L95,53.5L97,53.5L98,53.4L99,52.9L100,52.8L101,52.1L102,52L103,51.9L104,52.1L105,51.4L106,51.7L107,51.5L108,51.7L109,51.6L110,50.8L111,51L112,51.7L113,51.3L114,51.7L115,51.8L116,51L117,50.9L118,51.6L119,52.2L120,51.5L121,52.1L122,52.3L123,52.4L124,52.3L125,53L126,53.1L127,53.4L128,53.4L129,53.7L130,53.6L131,53.6L132,53.5L133,53.2L134,52.8L135,53L136,52.7L137,52L138,52L139,52.2L140,51.9L141,51.6L142,51.8L143,51.1L144,51.7L145,51.5L146,51.5L147,51.8L148,51.7L149,52L150,51.6L151,52L152,52.2L153,51.9L154,52.2L155,52.1L156,51.9L157,52.2L158,52.2L159,52.7L160,53.3L161,53.3L162,53.7L163,53.6L164,53.5L165,53L166,53.1L167,52.6L168,52.7L169,52.1L170,52L171,51.8L172,51.9L173,51L174,51.9L175,51.8L176,50.8L177,51.2L178,51.5L179,51.7L180,51.5L181,51.8L182,51.9L183,52.2L184,51.8L185,52.2L186,52.6L187,52.5L188,53.2L189,53.5L190,53.3L191,52.8L192,51.4L193,51.9L194,50.6L195,50.8L196,50.2L197,49.6L198,49.8L199,49.4L200,49.4L201,49.6L202,50.4L203,50L204,49.7L205,50.2L206,51L207,51.6L208,51.8L209,52.4L210,52.6L211,53.2L212,53.5L213,53.7L214,53.6L215,53L216,52.3L218,52.3L219,51.8L220,51.4L221,51.9L222,51.8L223,51.2L224,51.7L225,51.6L226,51.9L227,52.1L228,52.1L229,51.5L230,52.2L231,51.1L232,51.9L233,51.7L234,51.3L235,52.4L236,51.9L237,52.1L238,52.5L239,52.3L240,52.3L241,52.9L242,53.1L243,53.3L244,53.5L245,53.7L246,53.7L247,53.2L248,52.4L249,52.2L250,51.6L251,51.4L252,51.4L253,51L254,51L255,50.4L256,50.3L257,50.7L258,49.6L259,51L260,49.4L261,50.2L262,50.7L263,49.8L264,50.2L265,51.1L266,50.9L267,51.3L268,50.8L269,51.3L270,52L271,52.2L272,52.9L273,53.7L274,53.7L275,53.2L276,52.7L277,51.8L278,52.2L279,51.5L280,51.4L281,50.6L282,51.2L283,51L284,50.3L285,49.7L286,50.5L287,50L288,49.7L289,50.5L290,50.3L291,49.5L292,49.4L293,49.6L294,50.2L295,50.5L296,50.7L297,50.3L298,50.3L299,51L300,51.1L301,51.7L302,51.9L303,51.8L304,52.1L305,52.1L306,53.1L307,53.6L308,53.5L309,53.3L310,52.5L311,52.7L312,52.5L313,52.2L314,51.9L315,52L316,51.7L317,51.3L318,50.9L319,51.2L320,51.5L321,50.6L322,51.5L323,51.4L324,51.8L325,51.8L326,50.7L327,51.7L328,51.3L329,52.1L330,52.9L331,52.8L332,53.3L333,53.5L334,53.4L335,52.5L336,51.6L337,51.8L338,50.8L339,51.1L340,50.1L341,51.2L342,49.2L343,49.3L344,50L345,49.8L346,49.9L347,50.2L348,50.6L349,49.5L350,50L351,51.7L352,51.9L353,51.9L354,52.5L355,53.6L356,53.7L357,53.3L358,52.7L359,52.1L360,52.2L361,52.2L362,51.7L363,51.3L364,51.3L365,51.5L366,51.3L367,51.2L368,51.5L369,50.8L370,50.7L371,51.2L372,51.3L373,50.5L374,51.8L375,52L376,51.5L377,51.8L378,51.1L379,51.8L380,52L381,52.4L382,52.3L383,52.8L384,53.3L385,53.6L386,53.7L387,53.6L388,52.9L389,52.9L390,52.4L391,52.3L392,52.2L393,52.3L394,51.7L395,52.3L396,51.7L397,52L398,51.4L399,51.5L400,51.9L401,51.9L402,51.9L403,51.5L404,51.8L405,51.9L406,51.4L407,52.1L408,52.3L409,52.6L410,52.9L411,52.9L412,53.2L413,53.5L414,53.6L415,53.5L416,52.9L417,52.7L418,52L419,52.2L420,51.8L421,50.9L422,51.3L423,51.6L424,51.4L425,50.8L427,50.7L428,51.2L429,50.6L430,51.1L431,50.8L432,51.2L433,52.1L434,51.9L435,52L436,52.8L437,52.5L438,53.2L439,53.7L440,53.6L441,53.4L442,53.2L443,52.7L444,52.5L445,51.7L446,51.7L447,51.6L448,51.2L449,51.6L450,51.7L451,50.7L451,58.2L450,57.7L449,57.7L448,58L447,57.5L446,57.2L445,57.3L444,56.7L443,56.3L442,56.1L441,55.8L440,55.6L439,55.6L438,55.9L437,56.4L436,56.4L435,56.9L434,57.3L433,57.3L432,57.8L431,58.6L430,58.5L429,58.3L428,58.1L427,57.9L426,58.2L425,58.3L424,58.1L423,57.7L422,58L421,58L420,57.9L419,56.9L418,57.4L417,56.7L416,56.4L415,55.8L414,55.6L413,55.7L412,56L411,56.3L410,56.2L409,56.3L408,57L407,57.5L406,57.7L405,57.3L402,57.3L401,57.5L400,57.2L399,57.9L398,57.7L397,57.1L396,57.6L395,57.2L394,57.5L393,56.8L392,57.3L391,56.9L390,56.7L389,56.6L388,56.1L387,55.6L386,55.6L385,55.7L384,55.8L383,56.5L382,56.8L381,56.9L380,56.8L379,57.4L378,57.8L377,57.5L376,58.1L375,57.4L374,57.3L373,58.6L372,58L371,58.1L370,58L369,58.2L368,57.6L367,58.5L366,57.8L365,57.8L364,57.8L363,57.5L362,57.4L361,57.4L360,57.1L359,56.7L358,56.5L357,56.1L356,55.7L355,55.6L354,56.6L353,57.4L352,57.3L351,57.8L350,58.9L349,59.5L348,58.6L347,59.2L346,59.7L345,59.8L344,59.2L343,59.8L342,59.7L341,58.5L340,58.7L338,58.7L337,57.6L336,57.5L335,56.5L334,55.7L333,55.5L332,56L331,56.3L330,56.6L329,57.4L328,57.8L327,57.6L326,58.1L325,57.5L324,57.4L323,57.4L322,58.2L321,58.4L320,58.1L319,58.2L318,58.9L317,58L316,57.3L315,57.1L314,57.6L313,57L312,56.7L311,56.7L310,56.8L309,56.1L308,55.6L307,55.6L306,55.9L305,56.7L304,57.4L303,57.7L302,57.4L301,57.5L300,58.2L299,58.4L298,58.8L296,58.7L295,58.2L294,59.6L293,59.7L292,59.5L291,59.8L290,58.4L289,58.9L288,59.5L287,59.6L286,58.7L285,59.1L284,59.3L283,58.4L282,58L281,58.4L280,57.5L279,57.8L278,57.4L277,57.4L276,56.7L275,56.1L274,55.6L273,55.7L272,56.1L271,56.9L270,56.9L269,58L268,58.3L267,58.2L266,59.1L265,57.5L264,58.8L263,59L262,58.6L261,59L260,59.7L259,58L258,59.1L257,58.4L256,58.7L255,58.6L254,58.9L253,57.9L252,58.3L251,57.4L250,58.1L249,56.9L248,56.6L247,56L246,55.7L245,55.6L244,55.6L243,55.8L242,56.1L241,56.2L240,57L239,56.6L238,56.5L237,57.1L236,57.4L235,56.9L234,57.7L233,57.2L232,57.5L231,57.9L230,57.1L229,57.6L228,57.2L227,57.1L226,57.3L225,57.8L224,57.5L223,57.7L222,57.6L221,57.1L220,57.6L219,57.3L218,57.1L217,56.8L216,56.6L215,56.1L214,55.8L213,55.6L212,55.5L211,55.9L210,56.6L209,57.3L208,57.6L207,57.6L206,58L205,58.6L204,58.7L203,59.3L202,59.6L201,59.7L200,59.9L199,59.2L198,60.1L197,59.4L196,59.3L195,58L194,58.1L193,57.6L192,57.4L191,56.6L190,55.8L189,55.6L188,56L187,56.6L186,56.8L185,56.9L184,57.2L183,57.3L182,57.4L181,57.7L180,57.8L179,57.6L178,57.7L177,58.6L176,58.2L175,57.2L174,57.8L173,57.8L172,57.1L171,57.2L170,57.4L169,57L168,56.4L167,56.7L166,56.1L165,56L164,55.7L163,55.6L162,55.6L161,56L160,55.9L159,56.6L158,56.7L157,57L156,57.2L154,57.2L153,57.3L152,57.2L151,57.1L150,57.6L149,57.3L148,57.6L147,57.2L146,57.6L145,57.7L144,57.4L143,57.6L142,57.6L141,57.6L140,57.7L139,56.9L138,57.5L137,57.2L136,56.6L135,56.2L134,56.5L133,56L132,55.9L131,55.6L130,55.5L129,55.6L128,55.8L127,56L126,56.3L125,56.3L124,57.2L123,56.9L122,57L121,57.5L120,57.4L119,57L118,57.5L117,57.9L116,58.2L115,57.7L114,57.3L113,58.2L112,57.6L111,57.7L110,58.1L109,57.9L108,57.2L107,57.4L106,57.4L105,58L104,57.2L102,57.2L101,57.3L100,56.4L99,56.3L98,56L97,55.6L96,55.6L95,55.6L94,56.3L93,57.1L92,57.3L91,57.7L90,58.4L89,58.8L88,58.3L87,58.5L86,58.9L85,58.5L84,59.2L83,59.5L82,59L81,59.6L80,58.1L79,58.3L78,59.4L77,57.9L76,58.6L75,58.6L74,57.1L73,56.9L72,56.7L71,56L70,55.7L69,55.6L68,55.6L67,56.3L66,56.8L65,57L64,57.3L63,57.5L62,57.9L61,58.2L60,58.1L59,57.9L58,57.7L57,57.8L56,57.9L55,57.7L54,57.6L53,57.4L52,57.2L51,56.5L50,56.3L49,56L48,55.7L47,55.7L46,56.2L45,57L44,57L43,58L42,57.6L41,58.4L40,58.2L39,58.5L38,58.4L37,59.3L36,60L35,59.5L34,59.2L33,58.4L32,59.3L31,58.9L30,59L29,58.3L28,57.8L27,58.3L26,57.6L25,56.9L24,57.3L23,56L22,55.6L21,55.6L20,56.5L19,57.1L18,57.5L17,58.1L16,58.4L15,58.5L14,58.5L13,59.2L12,59.3L11,59.5L10,58.9L9,59.8L8,58.1L7,59.5L6,58L5,57.7L4,58.1L3,58.2L2,57.3L1,56.3L0,55.7Z" fill="#2b2072"/></svg><div class="r" style="left:0;top:36px;width:100%;height:1px;background:#fff;opacity:.9"></div><div class="l">10 Vox A_251120-112016_5.wav</div></div>
<div class="c" style="left:663px;top:429px;width:50px;height:74px;background:linear-gradient(#ce54f5,#983cb5);border-color:#e48af7"><svg class="w" width="50" height="74" viewBox="0 0 50 74" preserveAspectRatio="none"><path d="M0,7.1L1,0.3L2,11L3,15L4,16.5L5,16.8L50,16.8L50,17.9L5,17.9L4,18.1L3,19.6L2,23.6L1,34.3L0,27.5ZM0,44.4L1,37.6L2,48.3L3,52.3L4,53.8L5,54.1L50,54.1L50,55.1L5,55.1L4,55.4L3,56.9L2,60.9L1,71.6L0,64.8Z" fill="#5f2274"/></svg><div class="r" style="left:0;top:36px;width:100%;height:1px;background:#fff;opacity:.9"></div><div class="l" style="transform:scaleX(0.62)">10-hit Clap Live_251120-112030_6.wav</div></div>
<div class="c" style="left:719px;top:429px;width:51px;height:74px;background:linear-gradient(#ce54f5,#983cb5);border-color:#e48af7"><svg class="w" width="51" height="74" viewBox="0 0 51 74" preserveAspectRatio="none"><path d="M0,7.1L1,0.3L2,11L3,15L4,16.5L5,16.8L50,16.8L50,17.9L5,17.9L4,18.1L3,19.6L2,23.6L1,34.3L0,27.5ZM0,44.4L1,37.6L2,48.3L3,52.3L4,53.8L5,54.1L50,54.1L50,55.1L5,55.1L4,55.4L3,56.9L2,60.9L1,71.6L0,64.8Z" fill="#5f2274"/></svg><div class="r" style="left:0;top:36px;width:100%;height:1px;background:#fff;opacity:.9"></div><div class="l" style="transform:scaleX(0.62)">10-hit Clap Live_251120-112030_6.wav</div></div>
<div class="c" style="left:776px;top:429px;width:50px;height:74px;background:linear-gradient(#ce54f5,#983cb5);border-color:#e48af7"><svg class="w" width="50" height="74" viewBox="0 0 50 74" preserveAspectRatio="none"><path d="M0,7.1L1,0.3L2,11L3,15L4,16.5L5,16.8L50,16.8L50,17.9L5,17.9L4,18.1L3,19.6L2,23.6L1,34.3L0,27.5ZM0,44.4L1,37.6L2,48.3L3,52.3L4,53.8L5,54.1L50,54.1L50,55.1L5,55.1L4,55.4L3,56.9L2,60.9L1,71.6L0,64.8Z" fill="#5f2274"/></svg><div class="r" style="left:0;top:36px;width:100%;height:1px;background:#fff;opacity:.9"></div><div class="l" style="transform:scaleX(0.62)">10-hit Clap Live_251120-112030_6.wav</div></div>
<div class="c" style="left:832px;top:429px;width:51px;height:74px;background:linear-gradient(#ce54f5,#983cb5);border-color:#e48af7"><svg class="w" width="51" height="74" viewBox="0 0 51 74" preserveAspectRatio="none"><path d="M0,7.1L1,0.3L2,11L3,15L4,16.5L5,16.8L50,16.8L50,17.9L5,17.9L4,18.1L3,19.6L2,23.6L1,34.3L0,27.5ZM0,44.4L1,37.6L2,48.3L3,52.3L4,53.8L5,54.1L50,54.1L50,55.1L5,55.1L4,55.4L3,56.9L2,60.9L1,71.6L0,64.8Z" fill="#5f2274"/></svg><div class="r" style="left:0;top:36px;width:100%;height:1px;background:#fff;opacity:.9"></div><div class="l" style="transform:scaleX(0.62)">10-hit Clap Live_251120-112030_6.wav</div></div>
<div class="c" style="left:889px;top:429px;width:50px;height:74px;background:linear-gradient(#ce54f5,#983cb5);border-color:#e48af7"><svg class="w" width="50" height="74" viewBox="0 0 50 74" preserveAspectRatio="none"><path d="M0,7.1L1,0.3L2,11L3,15L4,16.5L5,16.8L50,16.8L50,17.9L5,17.9L4,18.1L3,19.6L2,23.6L1,34.3L0,27.5ZM0,44.4L1,37.6L2,48.3L3,52.3L4,53.8L5,54.1L50,54.1L50,55.1L5,55.1L4,55.4L3,56.9L2,60.9L1,71.6L0,64.8Z" fill="#5f2274"/></svg><div class="r" style="left:0;top:36px;width:100%;height:1px;background:#fff;opacity:.9"></div><div class="l" style="transform:scaleX(0.62)">10-hit Clap Live_251120-112030_6.wav</div></div>
<div class="c" style="left:945px;top:429px;width:51px;height:74px;background:linear-gradient(#ce54f5,#983cb5);border-color:#e48af7"><svg class="w" width="51" height="74" viewBox="0 0 51 74" preserveAspectRatio="none"><path d="M0,7.1L1,0.3L2,11L3,15L4,16.5L5,16.8L50,16.8L50,17.9L5,17.9L4,18.1L3,19.6L2,23.6L1,34.3L0,27.5ZM0,44.4L1,37.6L2,48.3L3,52.3L4,53.8L5,54.1L50,54.1L50,55.1L5,55.1L4,55.4L3,56.9L2,60.9L1,71.6L0,64.8Z" fill="#5f2274"/></svg><div class="r" style="left:0;top:36px;width:100%;height:1px;background:#fff;opacity:.9"></div><div class="l" style="transform:scaleX(0.62)">10-hit Clap Live_251120-112030_6.wav</div></div>
<div class="c" style="left:1002px;top:429px;width:50px;height:74px;background:linear-gradient(#ce54f5,#983cb5);border-color:#e48af7"><svg class="w" width="50" height="74" viewBox="0 0 50 74" preserveAspectRatio="none"><path d="M0,7.1L1,0.3L2,11L3,15L4,16.5L5,16.8L50,16.8L50,17.9L5,17.9L4,18.1L3,19.6L2,23.6L1,34.3L0,27.5ZM0,44.4L1,37.6L2,48.3L3,52.3L4,53.8L5,54.1L50,54.1L50,55.1L5,55.1L4,55.4L3,56.9L2,60.9L1,71.6L0,64.8Z" fill="#5f2274"/></svg><div class="r" style="left:0;top:36px;width:100%;height:1px;background:#fff;opacity:.9"></div><div class="l" style="transform:scaleX(0.62)">10-hit Clap Live_251120-112030_6.wav</div></div>
<div class="c" style="left:1058px;top:429px;width:51px;height:74px;background:linear-gradient(#ce54f5,#983cb5);border-color:#e48af7"><svg class="w" width="51" height="74" viewBox="0 0 51 74" preserveAspectRatio="none"><path d="M0,7.1L1,0.3L2,11L3,15L4,16.5L5,16.8L50,16.8L50,17.9L5,17.9L4,18.1L3,19.6L2,23.6L1,34.3L0,27.5ZM0,44.4L1,37.6L2,48.3L3,52.3L4,53.8L5,54.1L50,54.1L50,55.1L5,55.1L4,55.4L3,56.9L2,60.9L1,71.6L0,64.8Z" fill="#5f2274"/></svg><div class="r" style="left:0;top:36px;width:100%;height:1px;background:#fff;opacity:.9"></div><div class="l" style="transform:scaleX(0.62)">10-hit Clap Live_251120-112030_6.wav</div></div>
<div class="c" style="left:1115px;top:429px;width:50px;height:74px;background:linear-gradient(#ce54f5,#983cb5);border-color:#e48af7"><svg class="w" width="50" height="74" viewBox="0 0 50 74" preserveAspectRatio="none"><path d="M0,7.1L1,0.3L2,11L3,15L4,16.5L5,16.8L50,16.8L50,17.9L5,17.9L4,18.1L3,19.6L2,23.6L1,34.3L0,27.5ZM0,44.4L1,37.6L2,48.3L3,52.3L4,53.8L5,54.1L50,54.1L50,55.1L5,55.1L4,55.4L3,56.9L2,60.9L1,71.6L0,64.8Z" fill="#5f2274"/></svg><div class="r" style="left:0;top:36px;width:100%;height:1px;background:#fff;opacity:.9"></div><div class="l" style="transform:scaleX(0.62)">10-hit Clap Live_251120-112030_6.wav</div></div>
<div class="c" style="left:1171px;top:429px;width:51px;height:74px;background:linear-gradient(#ce54f5,#983cb5);border-color:#e48af7"><svg class="w" width="51" height="74" viewBox="0 0 51 74" preserveAspectRatio="none"><path d="M0,7.1L1,0.3L2,11L3,15L4,16.5L5,16.8L50,16.8L50,17.9L5,17.9L4,18.1L3,19.6L2,23.6L1,34.3L0,27.5ZM0,44.4L1,37.6L2,48.3L3,52.3L4,53.8L5,54.1L50,54.1L50,55.1L5,55.1L4,55.4L3,56.9L2,60.9L1,71.6L0,64.8Z" fill="#5f2274"/></svg><div class="r" style="left:0;top:36px;width:100%;height:1px;background:#fff;opacity:.9"></div><div class="l" style="transform:scaleX(0.62)">10-hit Clap Live_251120-112030_6.wav</div></div>
<div class="c" style="left:1228px;top:429px;width:50px;height:74px;background:linear-gradient(#ce54f5,#983cb5);border-color:#e48af7"><svg class="w" width="50" height="74" viewBox="0 0 50 74" preserveAspectRatio="none"><path d="M0,7.1L1,0.3L2,11L3,15L4,16.5L5,16.8L50,16.8L50,17.9L5,17.9L4,18.1L3,19.6L2,23.6L1,34.3L0,27.5ZM0,44.4L1,37.6L2,48.3L3,52.3L4,53.8L5,54.1L50,54.1L50,55.1L5,55.1L4,55.4L3,56.9L2,60.9L1,71.6L0,64.8Z" fill="#5f2274"/></svg><div class="r" style="left:0;top:36px;width:100%;height:1px;background:#fff;opacity:.9"></div><div class="l" style="transform:scaleX(0.62)">10-hit Clap Live_251120-112030_6.wav</div></div>
<div class="c" style="left:1284px;top:429px;width:51px;height:74px;background:linear-gradient(#ce54f5,#983cb5);border-color:#e48af7"><svg class="w" width="51" height="74" viewBox="0 0 51 74" preserveAspectRatio="none"><path d="M0,7.1L1,0.3L2,11L3,15L4,16.5L5,16.8L50,16.8L50,17.9L5,17.9L4,18.1L3,19.6L2,23.6L1,34.3L0,27.5ZM0,44.4L1,37.6L2,48.3L3,52.3L4,53.8L5,54.1L50,54.1L50,55.1L5,55.1L4,55.4L3,56.9L2,60.9L1,71.6L0,64.8Z" fill="#5f2274"/></svg><div class="r" style="left:0;top:36px;width:100%;height:1px;background:#fff;opacity:.9"></div><div class="l" style="transform:scaleX(0.62)">10-hit Clap Live_251120-112030_6.wav</div></div>
<div class="c" style="left:1341px;top:429px;width:50px;height:74px;background:linear-gradient(#ce54f5,#983cb5);border-color:#e48af7"><svg class="w" width="50" height="74" viewBox="0 0 50 74" preserveAspectRatio="none"><path d="M0,7.1L1,0.3L2,11L3,15L4,16.5L5,16.8L50,16.8L50,17.9L5,17.9L4,18.1L3,19.6L2,23.6L1,34.3L0,27.5ZM0,44.4L1,37.6L2,48.3L3,52.3L4,53.8L5,54.1L50,54.1L50,55.1L5,55.1L4,55.4L3,56.9L2,60.9L1,71.6L0,64.8Z" fill="#5f2274"/></svg><div class="r" style="left:0;top:36px;width:100%;height:1px;background:#fff;opacity:.9"></div><div class="l" style="transform:scaleX(0.62)">10-hit Clap Live_251120-112030_6.wav</div></div>
<div class="c" style="left:1397px;top:429px;width:51px;height:74px;background:linear-gradient(#ce54f5,#983cb5);border-color:#e48af7"><svg class="w" width="51" height="74" viewBox="0 0 51 74" preserveAspectRatio="none"><path d="M0,7.1L1,0.3L2,11L3,15L4,16.5L5,16.8L50,16.8L50,17.9L5,17.9L4,18.1L3,19.6L2,23.6L1,34.3L0,27.5ZM0,44.4L1,37.6L2,48.3L3,52.3L4,53.8L5,54.1L50,54.1L50,55.1L5,55.1L4,55.4L3,56.9L2,60.9L1,71.6L0,64.8Z" fill="#5f2274"/></svg><div class="r" style="left:0;top:36px;width:100%;height:1px;background:#fff;opacity:.9"></div><div class="l" style="transform:scaleX(0.62)">10-hit Clap Live_251120-112030_6.wav</div></div>
<div class="c" style="left:1454px;top:429px;width:50px;height:74px;background:linear-gradient(#ce54f5,#983cb5);border-color:#e48af7"><svg class="w" width="50" height="74" viewBox="0 0 50 74" preserveAspectRatio="none"><path d="M0,7.1L1,0.3L2,11L3,15L4,16.5L5,16.8L50,16.8L50,17.9L5,17.9L4,18.1L3,19.6L2,23.6L1,34.3L0,27.5ZM0,44.4L1,37.6L2,48.3L3,52.3L4,53.8L5,54.1L50,54.1L50,55.1L5,55.1L4,55.4L3,56.9L2,60.9L1,71.6L0,64.8Z" fill="#5f2274"/></svg><div class="r" style="left:0;top:36px;width:100%;height:1px;background:#fff;opacity:.9"></div><div class="l" style="transform:scaleX(0.62)">10-hit Clap Live_251120-112030_6.wav</div></div>
<div class="c" style="left:1510px;top:429px;width:51px;height:74px;background:linear-gradient(#ce54f5,#983cb5);border-color:#e48af7"><svg class="w" width="51" height="74" viewBox="0 0 51 74" preserveAspectRatio="none"><path d="M0,7.1L1,0.3L2,11L3,15L4,16.5L5,16.8L50,16.8L50,17.9L5,17.9L4,18.1L3,19.6L2,23.6L1,34.3L0,27.5ZM0,44.4L1,37.6L2,48.3L3,52.3L4,53.8L5,54.1L50,54.1L50,55.1L5,55.1L4,55.4L3,56.9L2,60.9L1,71.6L0,64.8Z" fill="#5f2274"/></svg><div class="r" style="left:0;top:36px;width:100%;height:1px;background:#fff;opacity:.9"></div><div class="l" style="transform:scaleX(0.62)">10-hit Clap Live_251120-112030_6.wav</div></div>
<div class="c" style="left:635px;top:504px;width:26px;height:74px;background:linear-gradient(#f552b2,#bd3e90);border-color:#f78ccb"><svg class="w" width="26" height="74" viewBox="0 0 26 74" preserveAspectRatio="none"><path d="M0,8.9L1,3.3L2,12.7L3,15.8L4,16.8L26,16.8L26,17.9L4,17.9L3,18.8L2,21.9L1,31.3L0,25.7ZM0,46.2L1,40.6L2,50L3,53.1L4,54.1L26,54.1L26,55.1L4,55.1L3,56.1L2,59.2L1,68.6L0,63Z" fill="#7b2459"/></svg><div class="l" style="transform:scaleX(0.62)">10-hit Hat_251120-112041_7.wav</div></div>
<div class="c" style="left:663px;top:504px;width:27px;height:74px;background:linear-gradient(#f552b2,#bd3e90);border-color:#f78ccb"><svg class="w" width="27" height="74" viewBox="0 0 27 74" preserveAspectRatio="none"><path d="M0,8.9L1,3.3L2,12.7L3,15.8L4,16.8L26,16.8L26,17.9L4,17.9L3,18.8L2,21.9L1,31.3L0,25.7ZM0,46.2L1,40.6L2,50L3,53.1L4,54.1L26,54.1L26,55.1L4,55.1L3,56.1L2,59.2L1,68.6L0,63Z" fill="#7b2459"/></svg><div class="l" style="transform:scaleX(0.62)">10-hit Hat_251120-112041_7.wav</div></div>
<div class="c" style="left:691px;top:504px;width:27px;height:74px;background:linear-gradient(#f552b2,#bd3e90);border-color:#f78ccb"><svg class="w" width="27" height="74" viewBox="0 0 27 74" preserveAspectRatio="none"><path d="M0,8.9L1,3.3L2,12.7L3,15.8L4,16.8L26,16.8L26,17.9L4,17.9L3,18.8L2,21.9L1,31.3L0,25.7ZM0,46.2L1,40.6L2,50L3,53.1L4,54.1L26,54.1L26,55.1L4,55.1L3,56.1L2,59.2L1,68.6L0,63Z" fill="#7b2459"/></svg><div class="l" style="transform:scaleX(0.62)">10-hit Hat_251120-112041_7.wav</div></div>
<div class="c" style="left:719px;top:504px;width:27px;height:74px;background:linear-gradient(#f552b2,#bd3e90);border-color:#f78ccb"><svg class="w" width="27" height="74" viewBox="0 0 27 74" preserveAspectRatio="none"><path d="M0,8.9L1,3.3L2,12.7L3,15.8L4,16.8L26,16.8L26,17.9L4,17.9L3,18.8L2,21.9L1,31.3L0,25.7ZM0,46.2L1,40.6L2,50L3,53.1L4,54.1L26,54.1L26,55.1L4,55.1L3,56.1L2,59.2L1,68.6L0,63Z" fill="#7b2459"/></svg><div class="l" style="transform:scaleX(0.62)">10-hit Hat_251120-112041_7.wav</div></div>
<div class="c" style="left:748px;top:504px;width:26px;height:74px;background:linear-gradient(#f552b2,#bd3e90);border-color:#f78ccb"><svg class="w" width="26" height="74" viewBox="0 0 26 74" preserveAspectRatio="none"><path d="M0,8.9L1,3.3L2,12.7L3,15.8L4,16.8L26,16.8L26,17.9L4,17.9L3,18.8L2,21.9L1,31.3L0,25.7ZM0,46.2L1,40.6L2,50L3,53.1L4,54.1L26,54.1L26,55.1L4,55.1L3,56.1L2,59.2L1,68.6L0,63Z" fill="#7b2459"/></svg><div class="l" style="transform:scaleX(0.62)">10-hit Hat_251120-112041_7.wav</div></div>
<div class="c" style="left:776px;top:504px;width:27px;height:74px;background:linear-gradient(#f552b2,#bd3e90);border-color:#f78ccb"><svg class="w" width="27" height="74" viewBox="0 0 27 74" preserveAspectRatio="none"><path d="M0,8.9L1,3.3L2,12.7L3,15.8L4,16.8L26,16.8L26,17.9L4,17.9L3,18.8L2,21.9L1,31.3L0,25.7ZM0,46.2L1,40.6L2,50L3,53.1L4,54.1L26,54.1L26,55.1L4,55.1L3,56.1L2,59.2L1,68.6L0,63Z" fill="#7b2459"/></svg><div class="l" style="transform:scaleX(0.62)">10-hit Hat_251120-112041_7.wav</div></div>
<div class="c" style="left:804px;top:504px;width:27px;height:74px;background:linear-gradient(#f552b2,#bd3e90);border-color:#f78ccb"><svg class="w" width="27" height="74" viewBox="0 0 27 74" preserveAspectRatio="none"><path d="M0,8.9L1,3.3L2,12.7L3,15.8L4,16.8L26,16.8L26,17.9L4,17.9L3,18.8L2,21.9L1,31.3L0,25.7ZM0,46.2L1,40.6L2,50L3,53.1L4,54.1L26,54.1L26,55.1L4,55.1L3,56.1L2,59.2L1,68.6L0,63Z" fill="#7b2459"/></svg><div class="l" style="transform:scaleX(0.62)">10-hit Hat_251120-112041_7.wav</div></div>
<div class="c" style="left:832px;top:504px;width:27px;height:74px;background:linear-gradient(#f552b2,#bd3e90);border-color:#f78ccb"><svg class="w" width="27" height="74" viewBox="0 0 27 74" preserveAspectRatio="none"><path d="M0,8.9L1,3.3L2,12.7L3,15.8L4,16.8L26,16.8L26,17.9L4,17.9L3,18.8L2,21.9L1,31.3L0,25.7ZM0,46.2L1,40.6L2,50L3,53.1L4,54.1L26,54.1L26,55.1L4,55.1L3,56.1L2,59.2L1,68.6L0,63Z" fill="#7b2459"/></svg><div class="l" style="transform:scaleX(0.62)">10-hit Hat_251120-112041_7.wav</div></div>
<div class="c" style="left:861px;top:504px;width:26px;height:74px;background:linear-gradient(#f552b2,#bd3e90);border-color:#f78ccb"><svg class="w" width="26" height="74" viewBox="0 0 26 74" preserveAspectRatio="none"><path d="M0,8.9L1,3.3L2,12.7L3,15.8L4,16.8L26,16.8L26,17.9L4,17.9L3,18.8L2,21.9L1,31.3L0,25.7ZM0,46.2L1,40.6L2,50L3,53.1L4,54.1L26,54.1L26,55.1L4,55.1L3,56.1L2,59.2L1,68.6L0,63Z" fill="#7b2459"/></svg><div class="l" style="transform:scaleX(0.62)">10-hit Hat_251120-112041_7.wav</div></div>
<div class="c" style="left:889px;top:504px;width:27px;height:74px;background:linear-gradient(#f552b2,#bd3e90);border-color:#f78ccb"><svg class="w" width="27" height="74" viewBox="0 0 27 74" preserveAspectRatio="none"><path d="M0,8.9L1,3.3L2,12.7L3,15.8L4,16.8L26,16.8L26,17.9L4,17.9L3,18.8L2,21.9L1,31.3L0,25.7ZM0,46.2L1,40.6L2,50L3,53.1L4,54.1L26,54.1L26,55.1L4,55.1L3,56.1L2,59.2L1,68.6L0,63Z" fill="#7b2459"/></svg><div class="l" style="transform:scaleX(0.62)">10-hit Hat_251120-112041_7.wav</div></div>
<div class="c" style="left:917px;top:504px;width:27px;height:74px;background:linear-gradient(#f552b2,#bd3e90);border-color:#f78ccb"><svg class="w" width="27" height="74" viewBox="0 0 27 74" preserveAspectRatio="none"><path d="M0,8.9L1,3.3L2,12.7L3,15.8L4,16.8L26,16.8L26,17.9L4,17.9L3,18.8L2,21.9L1,31.3L0,25.7ZM0,46.2L1,40.6L2,50L3,53.1L4,54.1L26,54.1L26,55.1L4,55.1L3,56.1L2,59.2L1,68.6L0,63Z" fill="#7b2459"/></svg><div class="l" style="transform:scaleX(0.62)">10-hit Hat_251120-112041_7.wav</div></div>
<div class="c" style="left:945px;top:504px;width:27px;height:74px;background:linear-gradient(#f552b2,#bd3e90);border-color:#f78ccb"><svg class="w" width="27" height="74" viewBox="0 0 27 74" preserveAspectRatio="none"><path d="M0,8.9L1,3.3L2,12.7L3,15.8L4,16.8L26,16.8L26,17.9L4,17.9L3,18.8L2,21.9L1,31.3L0,25.7ZM0,46.2L1,40.6L2,50L3,53.1L4,54.1L26,54.1L26,55.1L4,55.1L3,56.1L2,59.2L1,68.6L0,63Z" fill="#7b2459"/></svg><div class="l" style="transform:scaleX(0.62)">10-hit Hat_251120-112041_7.wav</div></div>
<div class="c" style="left:974px;top:504px;width:26px;height:74px;background:linear-gradient(#f552b2,#bd3e90);border-color:#f78ccb"><svg class="w" width="26" height="74" viewBox="0 0 26 74" preserveAspectRatio="none"><path d="M0,8.9L1,3.3L2,12.7L3,15.8L4,16.8L26,16.8L26,17.9L4,17.9L3,18.8L2,21.9L1,31.3L0,25.7ZM0,46.2L1,40.6L2,50L3,53.1L4,54.1L26,54.1L26,55.1L4,55.1L3,56.1L2,59.2L1,68.6L0,63Z" fill="#7b2459"/></svg><div class="l" style="transform:scaleX(0.62)">10-hit Hat_251120-112041_7.wav</div></div>
<div class="c" style="left:1002px;top:504px;width:27px;height:74px;background:linear-gradient(#f552b2,#bd3e90);border-color:#f78ccb"><svg class="w" width="27" height="74" viewBox="0 0 27 74" preserveAspectRatio="none"><path d="M0,8.9L1,3.3L2,12.7L3,15.8L4,16.8L26,16.8L26,17.9L4,17.9L3,18.8L2,21.9L1,31.3L0,25.7ZM0,46.2L1,40.6L2,50L3,53.1L4,54.1L26,54.1L26,55.1L4,55.1L3,56.1L2,59.2L1,68.6L0,63Z" fill="#7b2459"/></svg><div class="l" style="transform:scaleX(0.62)">10-hit Hat_251120-112041_7.wav</div></div>
<div class="c" style="left:1030px;top:504px;width:27px;height:74px;background:linear-gradient(#f552b2,#bd3e90);border-color:#f78ccb"><svg class="w" width="27" height="74" viewBox="0 0 27 74" preserveAspectRatio="none"><path d="M0,8.9L1,3.3L2,12.7L3,15.8L4,16.8L26,16.8L26,17.9L4,17.9L3,18.8L2,21.9L1,31.3L0,25.7ZM0,46.2L1,40.6L2,50L3,53.1L4,54.1L26,54.1L26,55.1L4,55.1L3,56.1L2,59.2L1,68.6L0,63Z" fill="#7b2459"/></svg><div class="l" style="transform:scaleX(0.62)">10-hit Hat_251120-112041_7.wav</div></div>
<div class="c" style="left:1058px;top:504px;width:27px;height:74px;background:linear-gradient(#f552b2,#bd3e90);border-color:#f78ccb"><svg class="w" width="27" height="74" viewBox="0 0 27 74" preserveAspectRatio="none"><path d="M0,8.9L1,3.3L2,12.7L3,15.8L4,16.8L26,16.8L26,17.9L4,17.9L3,18.8L2,21.9L1,31.3L0,25.7ZM0,46.2L1,40.6L2,50L3,53.1L4,54.1L26,54.1L26,55.1L4,55.1L3,56.1L2,59.2L1,68.6L0,63Z" fill="#7b2459"/></svg><div class="l" style="transform:scaleX(0.62)">10-hit Hat_251120-112041_7.wav</div></div>
<div class="c" style="left:1087px;top:504px;width:26px;height:74px;background:linear-gradient(#f552b2,#bd3e90);border-color:#f78ccb"><svg class="w" width="26" height="74" viewBox="0 0 26 74" preserveAspectRatio="none"><path d="M0,8.9L1,3.3L2,12.7L3,15.8L4,16.8L26,16.8L26,17.9L4,17.9L3,18.8L2,21.9L1,31.3L0,25.7ZM0,46.2L1,40.6L2,50L3,53.1L4,54.1L26,54.1L26,55.1L4,55.1L3,56.1L2,59.2L1,68.6L0,63Z" fill="#7b2459"/></svg><div class="l" style="transform:scaleX(0.62)">10-hit Hat_251120-112041_7.wav</div></div>
<div class="c" style="left:1115px;top:504px;width:27px;height:74px;background:linear-gradient(#f552b2,#bd3e90);border-color:#f78ccb"><svg class="w" width="27" height="74" viewBox="0 0 27 74" preserveAspectRatio="none"><path d="M0,8.9L1,3.3L2,12.7L3,15.8L4,16.8L26,16.8L26,17.9L4,17.9L3,18.8L2,21.9L1,31.3L0,25.7ZM0,46.2L1,40.6L2,50L3,53.1L4,54.1L26,54.1L26,55.1L4,55.1L3,56.1L2,59.2L1,68.6L0,63Z" fill="#7b2459"/></svg><div class="l" style="transform:scaleX(0.62)">10-hit Hat_251120-112041_7.wav</div></div>
<div class="c" style="left:1143px;top:504px;width:27px;height:74px;background:linear-gradient(#f552b2,#bd3e90);border-color:#f78ccb"><svg class="w" width="27" height="74" viewBox="0 0 27 74" preserveAspectRatio="none"><path d="M0,8.9L1,3.3L2,12.7L3,15.8L4,16.8L26,16.8L26,17.9L4,17.9L3,18.8L2,21.9L1,31.3L0,25.7ZM0,46.2L1,40.6L2,50L3,53.1L4,54.1L26,54.1L26,55.1L4,55.1L3,56.1L2,59.2L1,68.6L0,63Z" fill="#7b2459"/></svg><div class="l" style="transform:scaleX(0.62)">10-hit Hat_251120-112041_7.wav</div></div>
<div class="c" style="left:1171px;top:504px;width:27px;height:74px;background:linear-gradient(#f552b2,#bd3e90);border-color:#f78ccb"><svg class="w" width="27" height="74" viewBox="0 0 27 74" preserveAspectRatio="none"><path d="M0,8.9L1,3.3L2,12.7L3,15.8L4,16.8L26,16.8L26,17.9L4,17.9L3,18.8L2,21.9L1,31.3L0,25.7ZM0,46.2L1,40.6L2,50L3,53.1L4,54.1L26,54.1L26,55.1L4,55.1L3,56.1L2,59.2L1,68.6L0,63Z" fill="#7b2459"/></svg><div class="l" style="transform:scaleX(0.62)">10-hit Hat_251120-112041_7.wav</div></div>
<div class="c" style="left:1200px;top:504px;width:26px;height:74px;background:linear-gradient(#f552b2,#bd3e90);border-color:#f78ccb"><svg class="w" width="26" height="74" viewBox="0 0 26 74" preserveAspectRatio="none"><path d="M0,8.9L1,3.3L2,12.7L3,15.8L4,16.8L26,16.8L26,17.9L4,17.9L3,18.8L2,21.9L1,31.3L0,25.7ZM0,46.2L1,40.6L2,50L3,53.1L4,54.1L26,54.1L26,55.1L4,55.1L3,56.1L2,59.2L1,68.6L0,63Z" fill="#7b2459"/></svg><div class="l" style="transform:scaleX(0.62)">10-hit Hat_251120-112041_7.wav</div></div>
<div class="c" style="left:1228px;top:504px;width:27px;height:74px;background:linear-gradient(#f552b2,#bd3e90);border-color:#f78ccb"><svg class="w" width="27" height="74" viewBox="0 0 27 74" preserveAspectRatio="none"><path d="M0,8.9L1,3.3L2,12.7L3,15.8L4,16.8L26,16.8L26,17.9L4,17.9L3,18.8L2,21.9L1,31.3L0,25.7ZM0,46.2L1,40.6L2,50L3,53.1L4,54.1L26,54.1L26,55.1L4,55.1L3,56.1L2,59.2L1,68.6L0,63Z" fill="#7b2459"/></svg><div class="l" style="transform:scaleX(0.62)">10-hit Hat_251120-112041_7.wav</div></div>
<div class="c" style="left:1256px;top:504px;width:27px;height:74px;background:linear-gradient(#f552b2,#bd3e90);border-color:#f78ccb"><svg class="w" width="27" height="74" viewBox="0 0 27 74" preserveAspectRatio="none"><path d="M0,8.9L1,3.3L2,12.7L3,15.8L4,16.8L26,16.8L26,17.9L4,17.9L3,18.8L2,21.9L1,31.3L0,25.7ZM0,46.2L1,40.6L2,50L3,53.1L4,54.1L26,54.1L26,55.1L4,55.1L3,56.1L2,59.2L1,68.6L0,63Z" fill="#7b2459"/></svg><div class="l" style="transform:scaleX(0.62)">10-hit Hat_251120-112041_7.wav</div></div>
<div class="c" style="left:1284px;top:504px;width:27px;height:74px;background:linear-gradient(#f552b2,#bd3e90);border-color:#f78ccb"><svg class="w" width="27" height="74" viewBox="0 0 27 74" preserveAspectRatio="none"><path d="M0,8.9L1,3.3L2,12.7L3,15.8L4,16.8L26,16.8L26,17.9L4,17.9L3,18.8L2,21.9L1,31.3L0,25.7ZM0,46.2L1,40.6L2,50L3,53.1L4,54.1L26,54.1L26,55.1L4,55.1L3,56.1L2,59.2L1,68.6L0,63Z" fill="#7b2459"/></svg><div class="l" style="transform:scaleX(0.62)">10-hit Hat_251120-112041_7.wav</div></div>
<div class="c" style="left:1313px;top:504px;width:26px;height:74px;background:linear-gradient(#f552b2,#bd3e90);border-color:#f78ccb"><svg class="w" width="26" height="74" viewBox="0 0 26 74" preserveAspectRatio="none"><path d="M0,8.9L1,3.3L2,12.7L3,15.8L4,16.8L26,16.8L26,17.9L4,17.9L3,18.8L2,21.9L1,31.3L0,25.7ZM0,46.2L1,40.6L2,50L3,53.1L4,54.1L26,54.1L26,55.1L4,55.1L3,56.1L2,59.2L1,68.6L0,63Z" fill="#7b2459"/></svg><div class="l" style="transform:scaleX(0.62)">10-hit Hat_251120-112041_7.wav</div></div>
<div class="c" style="left:1341px;top:504px;width:27px;height:74px;background:linear-gradient(#f552b2,#bd3e90);border-color:#f78ccb"><svg class="w" width="27" height="74" viewBox="0 0 27 74" preserveAspectRatio="none"><path d="M0,8.9L1,3.3L2,12.7L3,15.8L4,16.8L26,16.8L26,17.9L4,17.9L3,18.8L2,21.9L1,31.3L0,25.7ZM0,46.2L1,40.6L2,50L3,53.1L4,54.1L26,54.1L26,55.1L4,55.1L3,56.1L2,59.2L1,68.6L0,63Z" fill="#7b2459"/></svg><div class="l" style="transform:scaleX(0.62)">10-hit Hat_251120-112041_7.wav</div></div>
<div class="c" style="left:1369px;top:504px;width:27px;height:74px;background:linear-gradient(#f552b2,#bd3e90);border-color:#f78ccb"><svg class="w" width="27" height="74" viewBox="0 0 27 74" preserveAspectRatio="none"><path d="M0,8.9L1,3.3L2,12.7L3,15.8L4,16.8L26,16.8L26,17.9L4,17.9L3,18.8L2,21.9L1,31.3L0,25.7ZM0,46.2L1,40.6L2,50L3,53.1L4,54.1L26,54.1L26,55.1L4,55.1L3,56.1L2,59.2L1,68.6L0,63Z" fill="#7b2459"/></svg><div class="l" style="transform:scaleX(0.62)">10-hit Hat_251120-112041_7.wav</div></div>
<div class="c" style="left:1397px;top:504px;width:27px;height:74px;background:linear-gradient(#f552b2,#bd3e90);border-color:#f78ccb"><svg class="w" width="27" height="74" viewBox="0 0 27 74" preserveAspectRatio="none"><path d="M0,8.9L1,3.3L2,12.7L3,15.8L4,16.8L26,16.8L26,17.9L4,17.9L3,18.8L2,21.9L1,31.3L0,25.7ZM0,46.2L1,40.6L2,50L3,53.1L4,54.1L26,54.1L26,55.1L4,55.1L3,56.1L2,59.2L1,68.6L0,63Z" fill="#7b2459"/></svg><div class="l" style="transform:scaleX(0.62)">10-hit Hat_251120-112041_7.wav</div></div>
<div class="c" style="left:1426px;top:504px;width:26px;height:74px;background:linear-gradient(#f552b2,#bd3e90);border-color:#f78ccb"><svg class="w" width="26" height="74" viewBox="0 0 26 74" preserveAspectRatio="none"><path d="M0,8.9L1,3.3L2,12.7L3,15.8L4,16.8L26,16.8L26,17.9L4,17.9L3,18.8L2,21.9L1,31.3L0,25.7ZM0,46.2L1,40.6L2,50L3,53.1L4,54.1L26,54.1L26,55.1L4,55.1L3,56.1L2,59.2L1,68.6L0,63Z" fill="#7b2459"/></svg><div class="l" style="transform:scaleX(0.62)">10-hit Hat_251120-112041_7.wav</div></div>
<div class="c" style="left:1454px;top:504px;width:27px;height:74px;background:linear-gradient(#f552b2,#bd3e90);border-color:#f78ccb"><svg class="w" width="27" height="74" viewBox="0 0 27 74" preserveAspectRatio="none"><path d="M0,8.9L1,3.3L2,12.7L3,15.8L4,16.8L26,16.8L26,17.9L4,17.9L3,18.8L2,21.9L1,31.3L0,25.7ZM0,46.2L1,40.6L2,50L3,53.1L4,54.1L26,54.1L26,55.1L4,55.1L3,56.1L2,59.2L1,68.6L0,63Z" fill="#7b2459"/></svg><div class="l" style="transform:scaleX(0.62)">10-hit Hat_251120-112041_7.wav</div></div>
<div class="c" style="left:1482px;top:504px;width:27px;height:74px;background:linear-gradient(#f552b2,#bd3e90);border-color:#f78ccb"><svg class="w" width="27" height="74" viewBox="0 0 27 74" preserveAspectRatio="none"><path d="M0,8.9L1,3.3L2,12.7L3,15.8L4,16.8L26,16.8L26,17.9L4,17.9L3,18.8L2,21.9L1,31.3L0,25.7ZM0,46.2L1,40.6L2,50L3,53.1L4,54.1L26,54.1L26,55.1L4,55.1L3,56.1L2,59.2L1,68.6L0,63Z" fill="#7b2459"/></svg><div class="l" style="transform:scaleX(0.62)">10-hit Hat_251120-112041_7.wav</div></div>
<div class="c" style="left:1510px;top:504px;width:27px;height:74px;background:linear-gradient(#f552b2,#bd3e90);border-color:#f78ccb"><svg class="w" width="27" height="74" viewBox="0 0 27 74" preserveAspectRatio="none"><path d="M0,8.9L1,3.3L2,12.7L3,15.8L4,16.8L26,16.8L26,17.9L4,17.9L3,18.8L2,21.9L1,31.3L0,25.7ZM0,46.2L1,40.6L2,50L3,53.1L4,54.1L26,54.1L26,55.1L4,55.1L3,56.1L2,59.2L1,68.6L0,63Z" fill="#7b2459"/></svg><div class="l" style="transform:scaleX(0.62)">10-hit Hat_251120-112041_7.wav</div></div>
<div class="c" style="left:635px;top:579px;width:38px;height:74px;background:linear-gradient(#f34242,#b52e2e);border-color:#f78080"><svg class="w" width="38" height="74" viewBox="0 0 38 74" preserveAspectRatio="none"><path d="M0,6.5L1,-0.7L2,5.6L3,9.8L4,12.4L5,14.1L6,15.3L7,16L8,16.4L9,16.7L37,16.8L37,17.9L9,17.9L8,18.2L7,18.6L6,19.3L5,20.5L4,22.2L3,24.8L2,29L1,35.3L0,28.1ZM0,43.8L1,36.6L2,42.9L3,47.1L4,49.7L5,51.4L6,52.6L7,53.3L8,53.7L9,54L37,54.1L37,55.1L9,55.2L8,55.5L7,55.9L6,56.6L5,57.8L4,59.5L3,62.1L2,66.3L1,72.6L0,65.4Z" fill="#7b1f1f"/></svg><div class="l" style="transform:scaleX(0.62)">10-hit Kick_251120-112052_8.wav</div></div>
<div class="c" style="left:691px;top:579px;width:38px;height:74px;background:linear-gradient(#f34242,#b52e2e);border-color:#f78080"><svg class="w" width="38" height="74" viewBox="0 0 38 74" preserveAspectRatio="none"><path d="M0,6.5L1,-0.7L2,5.6L3,9.8L4,12.4L5,14.1L6,15.3L7,16L8,16.4L9,16.7L37,16.8L37,17.9L9,17.9L8,18.2L7,18.6L6,19.3L5,20.5L4,22.2L3,24.8L2,29L1,35.3L0,28.1ZM0,43.8L1,36.6L2,42.9L3,47.1L4,49.7L5,51.4L6,52.6L7,53.3L8,53.7L9,54L37,54.1L37,55.1L9,55.2L8,55.5L7,55.9L6,56.6L5,57.8L4,59.5L3,62.1L2,66.3L1,72.6L0,65.4Z" fill="#7b1f1f"/></svg><div class="l" style="transform:scaleX(0.62)">10-hit Kick_251120-112052_8.wav</div></div>
<div class="c" style="left:748px;top:579px;width:38px;height:74px;background:linear-gradient(#f34242,#b52e2e);border-color:#f78080"><svg class="w" width="38" height="74" viewBox="0 0 38 74" preserveAspectRatio="none"><path d="M0,6.5L1,-0.7L2,5.6L3,9.8L4,12.4L5,14.1L6,15.3L7,16L8,16.4L9,16.7L37,16.8L37,17.9L9,17.9L8,18.2L7,18.6L6,19.3L5,20.5L4,22.2L3,24.8L2,29L1,35.3L0,28.1ZM0,43.8L1,36.6L2,42.9L3,47.1L4,49.7L5,51.4L6,52.6L7,53.3L8,53.7L9,54L37,54.1L37,55.1L9,55.2L8,55.5L7,55.9L6,56.6L5,57.8L4,59.5L3,62.1L2,66.3L1,72.6L0,65.4Z" fill="#7b1f1f"/></svg><div class="l" style="transform:scaleX(0.62)">10-hit Kick_251120-112052_8.wav</div></div>
<div class="c" style="left:804px;top:579px;width:38px;height:74px;background:linear-gradient(#f34242,#b52e2e);border-color:#f78080"><svg class="w" width="38" height="74" viewBox="0 0 38 74" preserveAspectRatio="none"><path d="M0,6.5L1,-0.7L2,5.6L3,9.8L4,12.4L5,14.1L6,15.3L7,16L8,16.4L9,16.7L37,16.8L37,17.9L9,17.9L8,18.2L7,18.6L6,19.3L5,20.5L4,22.2L3,24.8L2,29L1,35.3L0,28.1ZM0,43.8L1,36.6L2,42.9L3,47.1L4,49.7L5,51.4L6,52.6L7,53.3L8,53.7L9,54L37,54.1L37,55.1L9,55.2L8,55.5L7,55.9L6,56.6L5,57.8L4,59.5L3,62.1L2,66.3L1,72.6L0,65.4Z" fill="#7b1f1f"/></svg><div class="l" style="transform:scaleX(0.62)">10-hit Kick_251120-112052_8.wav</div></div>
<div class="c" style="left:861px;top:579px;width:38px;height:74px;background:linear-gradient(#f34242,#b52e2e);border-color:#f78080"><svg class="w" width="38" height="74" viewBox="0 0 38 74" preserveAspectRatio="none"><path d="M0,6.5L1,-0.7L2,5.6L3,9.8L4,12.4L5,14.1L6,15.3L7,16L8,16.4L9,16.7L37,16.8L37,17.9L9,17.9L8,18.2L7,18.6L6,19.3L5,20.5L4,22.2L3,24.8L2,29L1,35.3L0,28.1ZM0,43.8L1,36.6L2,42.9L3,47.1L4,49.7L5,51.4L6,52.6L7,53.3L8,53.7L9,54L37,54.1L37,55.1L9,55.2L8,55.5L7,55.9L6,56.6L5,57.8L4,59.5L3,62.1L2,66.3L1,72.6L0,65.4Z" fill="#7b1f1f"/></svg><div class="l" style="transform:scaleX(0.62)">10-hit Kick_251120-112052_8.wav</div></div>
<div class="c" style="left:917px;top:579px;width:38px;height:74px;background:linear-gradient(#f34242,#b52e2e);border-color:#f78080"><svg class="w" width="38" height="74" viewBox="0 0 38 74" preserveAspectRatio="none"><path d="M0,6.5L1,-0.7L2,5.6L3,9.8L4,12.4L5,14.1L6,15.3L7,16L8,16.4L9,16.7L37,16.8L37,17.9L9,17.9L8,18.2L7,18.6L6,19.3L5,20.5L4,22.2L3,24.8L2,29L1,35.3L0,28.1ZM0,43.8L1,36.6L2,42.9L3,47.1L4,49.7L5,51.4L6,52.6L7,53.3L8,53.7L9,54L37,54.1L37,55.1L9,55.2L8,55.5L7,55.9L6,56.6L5,57.8L4,59.5L3,62.1L2,66.3L1,72.6L0,65.4Z" fill="#7b1f1f"/></svg><div class="l" style="transform:scaleX(0.62)">10-hit Kick_251120-112052_8.wav</div></div>
<div class="c" style="left:974px;top:579px;width:38px;height:74px;background:linear-gradient(#f34242,#b52e2e);border-color:#f78080"><svg class="w" width="38" height="74" viewBox="0 0 38 74" preserveAspectRatio="none"><path d="M0,6.5L1,-0.7L2,5.6L3,9.8L4,12.4L5,14.1L6,15.3L7,16L8,16.4L9,16.7L37,16.8L37,17.9L9,17.9L8,18.2L7,18.6L6,19.3L5,20.5L4,22.2L3,24.8L2,29L1,35.3L0,28.1ZM0,43.8L1,36.6L2,42.9L3,47.1L4,49.7L5,51.4L6,52.6L7,53.3L8,53.7L9,54L37,54.1L37,55.1L9,55.2L8,55.5L7,55.9L6,56.6L5,57.8L4,59.5L3,62.1L2,66.3L1,72.6L0,65.4Z" fill="#7b1f1f"/></svg><div class="l" style="transform:scaleX(0.62)">10-hit Kick_251120-112052_8.wav</div></div>
<div class="c" style="left:1030px;top:579px;width:38px;height:74px;background:linear-gradient(#f34242,#b52e2e);border-color:#f78080"><svg class="w" width="38" height="74" viewBox="0 0 38 74" preserveAspectRatio="none"><path d="M0,6.5L1,-0.7L2,5.6L3,9.8L4,12.4L5,14.1L6,15.3L7,16L8,16.4L9,16.7L37,16.8L37,17.9L9,17.9L8,18.2L7,18.6L6,19.3L5,20.5L4,22.2L3,24.8L2,29L1,35.3L0,28.1ZM0,43.8L1,36.6L2,42.9L3,47.1L4,49.7L5,51.4L6,52.6L7,53.3L8,53.7L9,54L37,54.1L37,55.1L9,55.2L8,55.5L7,55.9L6,56.6L5,57.8L4,59.5L3,62.1L2,66.3L1,72.6L0,65.4Z" fill="#7b1f1f"/></svg><div class="l" style="transform:scaleX(0.62)">10-hit Kick_251120-112052_8.wav</div></div>
<div class="c" style="left:1087px;top:579px;width:38px;height:74px;background:linear-gradient(#f34242,#b52e2e);border-color:#f78080"><svg class="w" width="38" height="74" viewBox="0 0 38 74" preserveAspectRatio="none"><path d="M0,6.5L1,-0.7L2,5.6L3,9.8L4,12.4L5,14.1L6,15.3L7,16L8,16.4L9,16.7L37,16.8L37,17.9L9,17.9L8,18.2L7,18.6L6,19.3L5,20.5L4,22.2L3,24.8L2,29L1,35.3L0,28.1ZM0,43.8L1,36.6L2,42.9L3,47.1L4,49.7L5,51.4L6,52.6L7,53.3L8,53.7L9,54L37,54.1L37,55.1L9,55.2L8,55.5L7,55.9L6,56.6L5,57.8L4,59.5L3,62.1L2,66.3L1,72.6L0,65.4Z" fill="#7b1f1f"/></svg><div class="l" style="transform:scaleX(0.62)">10-hit Kick_251120-112052_8.wav</div></div>
<div class="c" style="left:1143px;top:579px;width:38px;height:74px;background:linear-gradient(#f34242,#b52e2e);border-color:#f78080"><svg class="w" width="38" height="74" viewBox="0 0 38 74" preserveAspectRatio="none"><path d="M0,6.5L1,-0.7L2,5.6L3,9.8L4,12.4L5,14.1L6,15.3L7,16L8,16.4L9,16.7L37,16.8L37,17.9L9,17.9L8,18.2L7,18.6L6,19.3L5,20.5L4,22.2L3,24.8L2,29L1,35.3L0,28.1ZM0,43.8L1,36.6L2,42.9L3,47.1L4,49.7L5,51.4L6,52.6L7,53.3L8,53.7L9,54L37,54.1L37,55.1L9,55.2L8,55.5L7,55.9L6,56.6L5,57.8L4,59.5L3,62.1L2,66.3L1,72.6L0,65.4Z" fill="#7b1f1f"/></svg><div class="l" style="transform:scaleX(0.62)">10-hit Kick_251120-112052_8.wav</div></div>
<div class="c" style="left:1200px;top:579px;width:38px;height:74px;background:linear-gradient(#f34242,#b52e2e);border-color:#f78080"><svg class="w" width="38" height="74" viewBox="0 0 38 74" preserveAspectRatio="none"><path d="M0,6.5L1,-0.7L2,5.6L3,9.8L4,12.4L5,14.1L6,15.3L7,16L8,16.4L9,16.7L37,16.8L37,17.9L9,17.9L8,18.2L7,18.6L6,19.3L5,20.5L4,22.2L3,24.8L2,29L1,35.3L0,28.1ZM0,43.8L1,36.6L2,42.9L3,47.1L4,49.7L5,51.4L6,52.6L7,53.3L8,53.7L9,54L37,54.1L37,55.1L9,55.2L8,55.5L7,55.9L6,56.6L5,57.8L4,59.5L3,62.1L2,66.3L1,72.6L0,65.4Z" fill="#7b1f1f"/></svg><div class="l" style="transform:scaleX(0.62)">10-hit Kick_251120-112052_8.wav</div></div>
<div class="c" style="left:1256px;top:579px;width:38px;height:74px;background:linear-gradient(#f34242,#b52e2e);border-color:#f78080"><svg class="w" width="38" height="74" viewBox="0 0 38 74" preserveAspectRatio="none"><path d="M0,6.5L1,-0.7L2,5.6L3,9.8L4,12.4L5,14.1L6,15.3L7,16L8,16.4L9,16.7L37,16.8L37,17.9L9,17.9L8,18.2L7,18.6L6,19.3L5,20.5L4,22.2L3,24.8L2,29L1,35.3L0,28.1ZM0,43.8L1,36.6L2,42.9L3,47.1L4,49.7L5,51.4L6,52.6L7,53.3L8,53.7L9,54L37,54.1L37,55.1L9,55.2L8,55.5L7,55.9L6,56.6L5,57.8L4,59.5L3,62.1L2,66.3L1,72.6L0,65.4Z" fill="#7b1f1f"/></svg><div class="l" style="transform:scaleX(0.62)">10-hit Kick_251120-112052_8.wav</div></div>
<div class="c" style="left:1313px;top:579px;width:38px;height:74px;background:linear-gradient(#f34242,#b52e2e);border-color:#f78080"><svg class="w" width="38" height="74" viewBox="0 0 38 74" preserveAspectRatio="none"><path d="M0,6.5L1,-0.7L2,5.6L3,9.8L4,12.4L5,14.1L6,15.3L7,16L8,16.4L9,16.7L37,16.8L37,17.9L9,17.9L8,18.2L7,18.6L6,19.3L5,20.5L4,22.2L3,24.8L2,29L1,35.3L0,28.1ZM0,43.8L1,36.6L2,42.9L3,47.1L4,49.7L5,51.4L6,52.6L7,53.3L8,53.7L9,54L37,54.1L37,55.1L9,55.2L8,55.5L7,55.9L6,56.6L5,57.8L4,59.5L3,62.1L2,66.3L1,72.6L0,65.4Z" fill="#7b1f1f"/></svg><div class="l" style="transform:scaleX(0.62)">10-hit Kick_251120-112052_8.wav</div></div>
<div class="c" style="left:1369px;top:579px;width:38px;height:74px;background:linear-gradient(#f34242,#b52e2e);border-color:#f78080"><svg class="w" width="38" height="74" viewBox="0 0 38 74" preserveAspectRatio="none"><path d="M0,6.5L1,-0.7L2,5.6L3,9.8L4,12.4L5,14.1L6,15.3L7,16L8,16.4L9,16.7L37,16.8L37,17.9L9,17.9L8,18.2L7,18.6L6,19.3L5,20.5L4,22.2L3,24.8L2,29L1,35.3L0,28.1ZM0,43.8L1,36.6L2,42.9L3,47.1L4,49.7L5,51.4L6,52.6L7,53.3L8,53.7L9,54L37,54.1L37,55.1L9,55.2L8,55.5L7,55.9L6,56.6L5,57.8L4,59.5L3,62.1L2,66.3L1,72.6L0,65.4Z" fill="#7b1f1f"/></svg><div class="l" style="transform:scaleX(0.62)">10-hit Kick_251120-112052_8.wav</div></div>
<div class="c" style="left:1426px;top:579px;width:38px;height:74px;background:linear-gradient(#f34242,#b52e2e);border-color:#f78080"><svg class="w" width="38" height="74" viewBox="0 0 38 74" preserveAspectRatio="none"><path d="M0,6.5L1,-0.7L2,5.6L3,9.8L4,12.4L5,14.1L6,15.3L7,16L8,16.4L9,16.7L37,16.8L37,17.9L9,17.9L8,18.2L7,18.6L6,19.3L5,20.5L4,22.2L3,24.8L2,29L1,35.3L0,28.1ZM0,43.8L1,36.6L2,42.9L3,47.1L4,49.7L5,51.4L6,52.6L7,53.3L8,53.7L9,54L37,54.1L37,55.1L9,55.2L8,55.5L7,55.9L6,56.6L5,57.8L4,59.5L3,62.1L2,66.3L1,72.6L0,65.4Z" fill="#7b1f1f"/></svg><div class="l" style="transform:scaleX(0.62)">10-hit Kick_251120-112052_8.wav</div></div>
<div class="c" style="left:1482px;top:579px;width:38px;height:74px;background:linear-gradient(#f34242,#b52e2e);border-color:#f78080"><svg class="w" width="38" height="74" viewBox="0 0 38 74" preserveAspectRatio="none"><path d="M0,6.5L1,-0.7L2,5.6L3,9.8L4,12.4L5,14.1L6,15.3L7,16L8,16.4L9,16.7L37,16.8L37,17.9L9,17.9L8,18.2L7,18.6L6,19.3L5,20.5L4,22.2L3,24.8L2,29L1,35.3L0,28.1ZM0,43.8L1,36.6L2,42.9L3,47.1L4,49.7L5,51.4L6,52.6L7,53.3L8,53.7L9,54L37,54.1L37,55.1L9,55.2L8,55.5L7,55.9L6,56.6L5,57.8L4,59.5L3,62.1L2,66.3L1,72.6L0,65.4Z" fill="#7b1f1f"/></svg><div class="l" style="transform:scaleX(0.62)">10-hit Kick_251120-112052_8.wav</div></div>
<div class="c" style="left:663px;top:654px;width:55px;height:64px;background:linear-gradient(#f6b446,#d5962e);border-color:#f9d08a"><svg class="w" width="55" height="64" viewBox="0 0 55 64" preserveAspectRatio="none"><path d="M0,6.5L1,-0.7L2,4.4L3,8.1L4,10.7L5,12.6L6,13.9L7,14.9L8,15.6L9,16L10,16.4L11,16.7L12,16.8L55,16.8L55,17.9L12,17.9L11,17.9L10,18.2L9,18.6L8,19L7,19.7L6,20.7L5,22L4,23.9L3,26.5L2,30.2L1,35.3L0,28.1ZM0,43.8L1,36.6L2,41.7L3,45.4L4,48L5,49.9L6,51.2L7,52.2L8,52.9L9,53.3L10,53.7L11,54L12,54.1L55,54.1L55,55.1L12,55.1L11,55.2L10,55.5L9,55.9L8,56.3L7,57L6,58L5,59.3L4,61.2L3,63.8L2,67.5L1,72.6L0,65.4Z" fill="#8b5f19"/></svg><div class="r" style="left:0;top:36px;width:100%;height:1px;background:#fff;opacity:.9"></div><div class="l" style="transform:scaleX(0.62)">10-hit Snare_251120-112103_9.wav</div></div>
<div class="c" style="left:719px;top:654px;width:56px;height:64px;background:linear-gradient(#f6b446,#d5962e);border-color:#f9d08a"><svg class="w" width="56" height="64" viewBox="0 0 56 64" preserveAspectRatio="none"><path d="M0,6.5L1,-0.7L2,4.4L3,8.1L4,10.7L5,12.6L6,13.9L7,14.9L8,15.6L9,16L10,16.4L11,16.7L12,16.8L55,16.8L55,17.9L12,17.9L11,17.9L10,18.2L9,18.6L8,19L7,19.7L6,20.7L5,22L4,23.9L3,26.5L2,30.2L1,35.3L0,28.1ZM0,43.8L1,36.6L2,41.7L3,45.4L4,48L5,49.9L6,51.2L7,52.2L8,52.9L9,53.3L10,53.7L11,54L12,54.1L55,54.1L55,55.1L12,55.1L11,55.2L10,55.5L9,55.9L8,56.3L7,57L6,58L5,59.3L4,61.2L3,63.8L2,67.5L1,72.6L0,65.4Z" fill="#8b5f19"/></svg><div class="r" style="left:0;top:36px;width:100%;height:1px;background:#fff;opacity:.9"></div><div class="l" style="transform:scaleX(0.62)">10-hit Snare_251120-112103_9.wav</div></div>
<div class="c" style="left:776px;top:654px;width:55px;height:64px;background:linear-gradient(#f6b446,#d5962e);border-color:#f9d08a"><svg class="w" width="55" height="64" viewBox="0 0 55 64" preserveAspectRatio="none"><path d="M0,6.5L1,-0.7L2,4.4L3,8.1L4,10.7L5,12.6L6,13.9L7,14.9L8,15.6L9,16L10,16.4L11,16.7L12,16.8L55,16.8L55,17.9L12,17.9L11,17.9L10,18.2L9,18.6L8,19L7,19.7L6,20.7L5,22L4,23.9L3,26.5L2,30.2L1,35.3L0,28.1ZM0,43.8L1,36.6L2,41.7L3,45.4L4,48L5,49.9L6,51.2L7,52.2L8,52.9L9,53.3L10,53.7L11,54L12,54.1L55,54.1L55,55.1L12,55.1L11,55.2L10,55.5L9,55.9L8,56.3L7,57L6,58L5,59.3L4,61.2L3,63.8L2,67.5L1,72.6L0,65.4Z" fill="#8b5f19"/></svg><div class="r" style="left:0;top:36px;width:100%;height:1px;background:#fff;opacity:.9"></div><div class="l" style="transform:scaleX(0.62)">10-hit Snare_251120-112103_9.wav</div></div>
<div class="c" style="left:832px;top:654px;width:56px;height:64px;background:linear-gradient(#f6b446,#d5962e);border-color:#f9d08a"><svg class="w" width="56" height="64" viewBox="0 0 56 64" preserveAspectRatio="none"><path d="M0,6.5L1,-0.7L2,4.4L3,8.1L4,10.7L5,12.6L6,13.9L7,14.9L8,15.6L9,16L10,16.4L11,16.7L12,16.8L55,16.8L55,17.9L12,17.9L11,17.9L10,18.2L9,18.6L8,19L7,19.7L6,20.7L5,22L4,23.9L3,26.5L2,30.2L1,35.3L0,28.1ZM0,43.8L1,36.6L2,41.7L3,45.4L4,48L5,49.9L6,51.2L7,52.2L8,52.9L9,53.3L10,53.7L11,54L12,54.1L55,54.1L55,55.1L12,55.1L11,55.2L10,55.5L9,55.9L8,56.3L7,57L6,58L5,59.3L4,61.2L3,63.8L2,67.5L1,72.6L0,65.4Z" fill="#8b5f19"/></svg><div class="r" style="left:0;top:36px;width:100%;height:1px;background:#fff;opacity:.9"></div><div class="l" style="transform:scaleX(0.62)">10-hit Snare_251120-112103_9.wav</div></div>
<div class="c" style="left:889px;top:654px;width:55px;height:64px;background:linear-gradient(#f6b446,#d5962e);border-color:#f9d08a"><svg class="w" width="55" height="64" viewBox="0 0 55 64" preserveAspectRatio="none"><path d="M0,6.5L1,-0.7L2,4.4L3,8.1L4,10.7L5,12.6L6,13.9L7,14.9L8,15.6L9,16L10,16.4L11,16.7L12,16.8L55,16.8L55,17.9L12,17.9L11,17.9L10,18.2L9,18.6L8,19L7,19.7L6,20.7L5,22L4,23.9L3,26.5L2,30.2L1,35.3L0,28.1ZM0,43.8L1,36.6L2,41.7L3,45.4L4,48L5,49.9L6,51.2L7,52.2L8,52.9L9,53.3L10,53.7L11,54L12,54.1L55,54.1L55,55.1L12,55.1L11,55.2L10,55.5L9,55.9L8,56.3L7,57L6,58L5,59.3L4,61.2L3,63.8L2,67.5L1,72.6L0,65.4Z" fill="#8b5f19"/></svg><div class="r" style="left:0;top:36px;width:100%;height:1px;background:#fff;opacity:.9"></div><div class="l" style="transform:scaleX(0.62)">10-hit Snare_251120-112103_9.wav</div></div>
<div class="c" style="left:945px;top:654px;width:56px;height:64px;background:linear-gradient(#f6b446,#d5962e);border-color:#f9d08a"><svg class="w" width="56" height="64" viewBox="0 0 56 64" preserveAspectRatio="none"><path d="M0,6.5L1,-0.7L2,4.4L3,8.1L4,10.7L5,12.6L6,13.9L7,14.9L8,15.6L9,16L10,16.4L11,16.7L12,16.8L55,16.8L55,17.9L12,17.9L11,17.9L10,18.2L9,18.6L8,19L7,19.7L6,20.7L5,22L4,23.9L3,26.5L2,30.2L1,35.3L0,28.1ZM0,43.8L1,36.6L2,41.7L3,45.4L4,48L5,49.9L6,51.2L7,52.2L8,52.9L9,53.3L10,53.7L11,54L12,54.1L55,54.1L55,55.1L12,55.1L11,55.2L10,55.5L9,55.9L8,56.3L7,57L6,58L5,59.3L4,61.2L3,63.8L2,67.5L1,72.6L0,65.4Z" fill="#8b5f19"/></svg><div class="r" style="left:0;top:36px;width:100%;height:1px;background:#fff;opacity:.9"></div><div class="l" style="transform:scaleX(0.62)">10-hit Snare_251120-112103_9.wav</div></div>
<div class="c" style="left:1002px;top:654px;width:55px;height:64px;background:linear-gradient(#f6b446,#d5962e);border-color:#f9d08a"><svg class="w" width="55" height="64" viewBox="0 0 55 64" preserveAspectRatio="none"><path d="M0,6.5L1,-0.7L2,4.4L3,8.1L4,10.7L5,12.6L6,13.9L7,14.9L8,15.6L9,16L10,16.4L11,16.7L12,16.8L55,16.8L55,17.9L12,17.9L11,17.9L10,18.2L9,18.6L8,19L7,19.7L6,20.7L5,22L4,23.9L3,26.5L2,30.2L1,35.3L0,28.1ZM0,43.8L1,36.6L2,41.7L3,45.4L4,48L5,49.9L6,51.2L7,52.2L8,52.9L9,53.3L10,53.7L11,54L12,54.1L55,54.1L55,55.1L12,55.1L11,55.2L10,55.5L9,55.9L8,56.3L7,57L6,58L5,59.3L4,61.2L3,63.8L2,67.5L1,72.6L0,65.4Z" fill="#8b5f19"/></svg><div class="r" style="left:0;top:36px;width:100%;height:1px;background:#fff;opacity:.9"></div><div class="l" style="transform:scaleX(0.62)">10-hit Snare_251120-112103_9.wav</div></div>
<div class="c" style="left:1058px;top:654px;width:56px;height:64px;background:linear-gradient(#f6b446,#d5962e);border-color:#f9d08a"><svg class="w" width="56" height="64" viewBox="0 0 56 64" preserveAspectRatio="none"><path d="M0,6.5L1,-0.7L2,4.4L3,8.1L4,10.7L5,12.6L6,13.9L7,14.9L8,15.6L9,16L10,16.4L11,16.7L12,16.8L55,16.8L55,17.9L12,17.9L11,17.9L10,18.2L9,18.6L8,19L7,19.7L6,20.7L5,22L4,23.9L3,26.5L2,30.2L1,35.3L0,28.1ZM0,43.8L1,36.6L2,41.7L3,45.4L4,48L5,49.9L6,51.2L7,52.2L8,52.9L9,53.3L10,53.7L11,54L12,54.1L55,54.1L55,55.1L12,55.1L11,55.2L10,55.5L9,55.9L8,56.3L7,57L6,58L5,59.3L4,61.2L3,63.8L2,67.5L1,72.6L0,65.4Z" fill="#8b5f19"/></svg><div class="r" style="left:0;top:36px;width:100%;height:1px;background:#fff;opacity:.9"></div><div class="l" style="transform:scaleX(0.62)">10-hit Snare_251120-112103_9.wav</div></div>
<div class="c" style="left:1115px;top:654px;width:55px;height:64px;background:linear-gradient(#f6b446,#d5962e);border-color:#f9d08a"><svg class="w" width="55" height="64" viewBox="0 0 55 64" preserveAspectRatio="none"><path d="M0,6.5L1,-0.7L2,4.4L3,8.1L4,10.7L5,12.6L6,13.9L7,14.9L8,15.6L9,16L10,16.4L11,16.7L12,16.8L55,16.8L55,17.9L12,17.9L11,17.9L10,18.2L9,18.6L8,19L7,19.7L6,20.7L5,22L4,23.9L3,26.5L2,30.2L1,35.3L0,28.1ZM0,43.8L1,36.6L2,41.7L3,45.4L4,48L5,49.9L6,51.2L7,52.2L8,52.9L9,53.3L10,53.7L11,54L12,54.1L55,54.1L55,55.1L12,55.1L11,55.2L10,55.5L9,55.9L8,56.3L7,57L6,58L5,59.3L4,61.2L3,63.8L2,67.5L1,72.6L0,65.4Z" fill="#8b5f19"/></svg><div class="r" style="left:0;top:36px;width:100%;height:1px;background:#fff;opacity:.9"></div><div class="l" style="transform:scaleX(0.62)">10-hit Snare_251120-112103_9.wav</div></div>
<div class="c" style="left:1171px;top:654px;width:56px;height:64px;background:linear-gradient(#f6b446,#d5962e);border-color:#f9d08a"><svg class="w" width="56" height="64" viewBox="0 0 56 64" preserveAspectRatio="none"><path d="M0,6.5L1,-0.7L2,4.4L3,8.1L4,10.7L5,12.6L6,13.9L7,14.9L8,15.6L9,16L10,16.4L11,16.7L12,16.8L55,16.8L55,17.9L12,17.9L11,17.9L10,18.2L9,18.6L8,19L7,19.7L6,20.7L5,22L4,23.9L3,26.5L2,30.2L1,35.3L0,28.1ZM0,43.8L1,36.6L2,41.7L3,45.4L4,48L5,49.9L6,51.2L7,52.2L8,52.9L9,53.3L10,53.7L11,54L12,54.1L55,54.1L55,55.1L12,55.1L11,55.2L10,55.5L9,55.9L8,56.3L7,57L6,58L5,59.3L4,61.2L3,63.8L2,67.5L1,72.6L0,65.4Z" fill="#8b5f19"/></svg><div class="r" style="left:0;top:36px;width:100%;height:1px;background:#fff;opacity:.9"></div><div class="l" style="transform:scaleX(0.62)">10-hit Snare_251120-112103_9.wav</div></div>
<div class="c" style="left:1228px;top:654px;width:55px;height:64px;background:linear-gradient(#f6b446,#d5962e);border-color:#f9d08a"><svg class="w" width="55" height="64" viewBox="0 0 55 64" preserveAspectRatio="none"><path d="M0,6.5L1,-0.7L2,4.4L3,8.1L4,10.7L5,12.6L6,13.9L7,14.9L8,15.6L9,16L10,16.4L11,16.7L12,16.8L55,16.8L55,17.9L12,17.9L11,17.9L10,18.2L9,18.6L8,19L7,19.7L6,20.7L5,22L4,23.9L3,26.5L2,30.2L1,35.3L0,28.1ZM0,43.8L1,36.6L2,41.7L3,45.4L4,48L5,49.9L6,51.2L7,52.2L8,52.9L9,53.3L10,53.7L11,54L12,54.1L55,54.1L55,55.1L12,55.1L11,55.2L10,55.5L9,55.9L8,56.3L7,57L6,58L5,59.3L4,61.2L3,63.8L2,67.5L1,72.6L0,65.4Z" fill="#8b5f19"/></svg><div class="r" style="left:0;top:36px;width:100%;height:1px;background:#fff;opacity:.9"></div><div class="l" style="transform:scaleX(0.62)">10-hit Snare_251120-112103_9.wav</div></div>
<div class="c" style="left:1284px;top:654px;width:56px;height:64px;background:linear-gradient(#f6b446,#d5962e);border-color:#f9d08a"><svg class="w" width="56" height="64" viewBox="0 0 56 64" preserveAspectRatio="none"><path d="M0,6.5L1,-0.7L2,4.4L3,8.1L4,10.7L5,12.6L6,13.9L7,14.9L8,15.6L9,16L10,16.4L11,16.7L12,16.8L55,16.8L55,17.9L12,17.9L11,17.9L10,18.2L9,18.6L8,19L7,19.7L6,20.7L5,22L4,23.9L3,26.5L2,30.2L1,35.3L0,28.1ZM0,43.8L1,36.6L2,41.7L3,45.4L4,48L5,49.9L6,51.2L7,52.2L8,52.9L9,53.3L10,53.7L11,54L12,54.1L55,54.1L55,55.1L12,55.1L11,55.2L10,55.5L9,55.9L8,56.3L7,57L6,58L5,59.3L4,61.2L3,63.8L2,67.5L1,72.6L0,65.4Z" fill="#8b5f19"/></svg><div class="r" style="left:0;top:36px;width:100%;height:1px;background:#fff;opacity:.9"></div><div class="l" style="transform:scaleX(0.62)">10-hit Snare_251120-112103_9.wav</div></div>
<div class="c" style="left:1341px;top:654px;width:55px;height:64px;background:linear-gradient(#f6b446,#d5962e);border-color:#f9d08a"><svg class="w" width="55" height="64" viewBox="0 0 55 64" preserveAspectRatio="none"><path d="M0,6.5L1,-0.7L2,4.4L3,8.1L4,10.7L5,12.6L6,13.9L7,14.9L8,15.6L9,16L10,16.4L11,16.7L12,16.8L55,16.8L55,17.9L12,17.9L11,17.9L10,18.2L9,18.6L8,19L7,19.7L6,20.7L5,22L4,23.9L3,26.5L2,30.2L1,35.3L0,28.1ZM0,43.8L1,36.6L2,41.7L3,45.4L4,48L5,49.9L6,51.2L7,52.2L8,52.9L9,53.3L10,53.7L11,54L12,54.1L55,54.1L55,55.1L12,55.1L11,55.2L10,55.5L9,55.9L8,56.3L7,57L6,58L5,59.3L4,61.2L3,63.8L2,67.5L1,72.6L0,65.4Z" fill="#8b5f19"/></svg><div class="r" style="left:0;top:36px;width:100%;height:1px;background:#fff;opacity:.9"></div><div class="l" style="transform:scaleX(0.62)">10-hit Snare_251120-112103_9.wav</div></div>
<div class="c" style="left:1397px;top:654px;width:56px;height:64px;background:linear-gradient(#f6b446,#d5962e);border-color:#f9d08a"><svg class="w" width="56" height="64" viewBox="0 0 56 64" preserveAspectRatio="none"><path d="M0,6.5L1,-0.7L2,4.4L3,8.1L4,10.7L5,12.6L6,13.9L7,14.9L8,15.6L9,16L10,16.4L11,16.7L12,16.8L55,16.8L55,17.9L12,17.9L11,17.9L10,18.2L9,18.6L8,19L7,19.7L6,20.7L5,22L4,23.9L3,26.5L2,30.2L1,35.3L0,28.1ZM0,43.8L1,36.6L2,41.7L3,45.4L4,48L5,49.9L6,51.2L7,52.2L8,52.9L9,53.3L10,53.7L11,54L12,54.1L55,54.1L55,55.1L12,55.1L11,55.2L10,55.5L9,55.9L8,56.3L7,57L6,58L5,59.3L4,61.2L3,63.8L2,67.5L1,72.6L0,65.4Z" fill="#8b5f19"/></svg><div class="r" style="left:0;top:36px;width:100%;height:1px;background:#fff;opacity:.9"></div><div class="l" style="transform:scaleX(0.62)">10-hit Snare_251120-112103_9.wav</div></div>
<div class="c" style="left:1454px;top:654px;width:55px;height:64px;background:linear-gradient(#f6b446,#d5962e);border-color:#f9d08a"><svg class="w" width="55" height="64" viewBox="0 0 55 64" preserveAspectRatio="none"><path d="M0,6.5L1,-0.7L2,4.4L3,8.1L4,10.7L5,12.6L6,13.9L7,14.9L8,15.6L9,16L10,16.4L11,16.7L12,16.8L55,16.8L55,17.9L12,17.9L11,17.9L10,18.2L9,18.6L8,19L7,19.7L6,20.7L5,22L4,23.9L3,26.5L2,30.2L1,35.3L0,28.1ZM0,43.8L1,36.6L2,41.7L3,45.4L4,48L5,49.9L6,51.2L7,52.2L8,52.9L9,53.3L10,53.7L11,54L12,54.1L55,54.1L55,55.1L12,55.1L11,55.2L10,55.5L9,55.9L8,56.3L7,57L6,58L5,59.3L4,61.2L3,63.8L2,67.5L1,72.6L0,65.4Z" fill="#8b5f19"/></svg><div class="r" style="left:0;top:36px;width:100%;height:1px;background:#fff;opacity:.9"></div><div class="l" style="transform:scaleX(0.62)">10-hit Snare_251120-112103_9.wav</div></div>
<div class="c" style="left:1510px;top:654px;width:56px;height:64px;background:linear-gradient(#f6b446,#d5962e);border-color:#f9d08a"><svg class="w" width="56" height="64" viewBox="0 0 56 64" preserveAspectRatio="none"><path d="M0,6.5L1,-0.7L2,4.4L3,8.1L4,10.7L5,12.6L6,13.9L7,14.9L8,15.6L9,16L10,16.4L11,16.7L12,16.8L55,16.8L55,17.9L12,17.9L11,17.9L10,18.2L9,18.6L8,19L7,19.7L6,20.7L5,22L4,23.9L3,26.5L2,30.2L1,35.3L0,28.1ZM0,43.8L1,36.6L2,41.7L3,45.4L4,48L5,49.9L6,51.2L7,52.2L8,52.9L9,53.3L10,53.7L11,54L12,54.1L55,54.1L55,55.1L12,55.1L11,55.2L10,55.5L9,55.9L8,56.3L7,57L6,58L5,59.3L4,61.2L3,63.8L2,67.5L1,72.6L0,65.4Z" fill="#8b5f19"/></svg><div class="r" style="left:0;top:36px;width:100%;height:1px;background:#fff;opacity:.9"></div><div class="l" style="transform:scaleX(0.62)">10-hit Snare_251120-112103_9.wav</div></div>
<div class="r" style="left:622px;top:717px;width:985px;height:10px;background:#262c35;"></div>
<div class="r" style="left:635px;top:727px;width:904px;height:45px;background:#3d5c6b;"></div>
<div class="r" style="left:1539px;top:727px;width:55px;height:45px;background:#45525c;"></div>
<svg class="s" style="left:635px;top:727px" width="959" height="45"><path d="M0.5 0V45" stroke="#5f7c89" stroke-width="1"/><path d="M28.5 0V45" stroke="#537180" stroke-width="1"/><path d="M56.5 0V45" stroke="#537180" stroke-width="1"/><path d="M84.5 0V45" stroke="#537180" stroke-width="1"/><path d="M113.5 0V45" stroke="#5f7c89" stroke-width="1"/><path d="M141.5 0V45" stroke="#537180" stroke-width="1"/><path d="M169.5 0V45" stroke="#537180" stroke-width="1"/><path d="M197.5 0V45" stroke="#537180" stroke-width="1"/><path d="M226.5 0V45" stroke="#5f7c89" stroke-width="1"/><path d="M254.5 0V45" stroke="#537180" stroke-width="1"/><path d="M282.5 0V45" stroke="#537180" stroke-width="1"/><path d="M310.5 0V45" stroke="#537180" stroke-width="1"/><path d="M339.5 0V45" stroke="#5f7c89" stroke-width="1"/><path d="M367.5 0V45" stroke="#537180" stroke-width="1"/><path d="M395.5 0V45" stroke="#537180" stroke-width="1"/><path d="M423.5 0V45" stroke="#537180" stroke-width="1"/><path d="M452.5 0V45" stroke="#5f7c89" stroke-width="1"/><path d="M480.5 0V45" stroke="#537180" stroke-width="1"/><path d="M508.5 0V45" stroke="#537180" stroke-width="1"/><path d="M536.5 0V45" stroke="#537180" stroke-width="1"/><path d="M565.5 0V45" stroke="#5f7c89" stroke-width="1"/><path d="M593.5 0V45" stroke="#537180" stroke-width="1"/><path d="M621.5 0V45" stroke="#537180" stroke-width="1"/><path d="M649.5 0V45" stroke="#537180" stroke-width="1"/><path d="M678.5 0V45" stroke="#5f7c89" stroke-width="1"/><path d="M706.5 0V45" stroke="#537180" stroke-width="1"/><path d="M734.5 0V45" stroke="#537180" stroke-width="1"/><path d="M762.5 0V45" stroke="#537180" stroke-width="1"/><path d="M791.5 0V45" stroke="#5f7c89" stroke-width="1"/><path d="M819.5 0V45" stroke="#537180" stroke-width="1"/><path d="M847.5 0V45" stroke="#537180" stroke-width="1"/><path d="M875.5 0V45" stroke="#537180" stroke-width="1"/><path d="M904.5 0V45" stroke="#58646e" stroke-width="1"/><path d="M932.5 0V45" stroke="#58646e" stroke-width="1"/><rect x="0.5" y="0.5" width="958" height="44" fill="none" stroke="#5b7683"/></svg>
<div class="r" style="left:635px;top:782px;width:904px;height:46px;background:#3d5c6b;"></div>
<div class="r" style="left:1539px;top:782px;width:55px;height:46px;background:#45525c;"></div>
<svg class="s" style="left:635px;top:782px" width="959" height="46"><path d="M0.5 0V46" stroke="#5f7c89" stroke-width="1"/><path d="M28.5 0V46" stroke="#537180" stroke-width="1"/><path d="M56.5 0V46" stroke="#537180" stroke-width="1"/><path d="M84.5 0V46" stroke="#537180" stroke-width="1"/><path d="M113.5 0V46" stroke="#5f7c89" stroke-width="1"/><path d="M141.5 0V46" stroke="#537180" stroke-width="1"/><path d="M169.5 0V46" stroke="#537180" stroke-width="1"/><path d="M197.5 0V46" stroke="#537180" stroke-width="1"/><path d="M226.5 0V46" stroke="#5f7c89" stroke-width="1"/><path d="M254.5 0V46" stroke="#537180" stroke-width="1"/><path d="M282.5 0V46" stroke="#537180" stroke-width="1"/><path d="M310.5 0V46" stroke="#537180" stroke-width="1"/><path d="M339.5 0V46" stroke="#5f7c89" stroke-width="1"/><path d="M367.5 0V46" stroke="#537180" stroke-width="1"/><path d="M395.5 0V46" stroke="#537180" stroke-width="1"/><path d="M423.5 0V46" stroke="#537180" stroke-width="1"/><path d="M452.5 0V46" stroke="#5f7c89" stroke-width="1"/><path d="M480.5 0V46" stroke="#537180" stroke-width="1"/><path d="M508.5 0V46" stroke="#537180" stroke-width="1"/><path d="M536.5 0V46" stroke="#537180" stroke-width="1"/><path d="M565.5 0V46" stroke="#5f7c89" stroke-width="1"/><path d="M593.5 0V46" stroke="#537180" stroke-width="1"/><path d="M621.5 0V46" stroke="#537180" stroke-width="1"/><path d="M649.5 0V46" stroke="#537180" stroke-width="1"/><path d="M678.5 0V46" stroke="#5f7c89" stroke-width="1"/><path d="M706.5 0V46" stroke="#537180" stroke-width="1"/><path d="M734.5 0V46" stroke="#537180" stroke-width="1"/><path d="M762.5 0V46" stroke="#537180" stroke-width="1"/><path d="M791.5 0V46" stroke="#5f7c89" stroke-width="1"/><path d="M819.5 0V46" stroke="#537180" stroke-width="1"/><path d="M847.5 0V46" stroke="#537180" stroke-width="1"/><path d="M875.5 0V46" stroke="#537180" stroke-width="1"/><path d="M904.5 0V46" stroke="#58646e" stroke-width="1"/><path d="M932.5 0V46" stroke="#58646e" stroke-width="1"/><rect x="0.5" y="0.5" width="958" height="45" fill="none" stroke="#5b7683"/></svg>
<div class="r" style="left:635px;top:749px;width:904px;height:1px;background:#5b7885;"></div>
<div class="r" style="left:1539px;top:749px;width:55px;height:1px;background:#58646e;"></div>
<span class="t" style="left:641.0px;top:731.5px;font-size:14px;color:#fff;transform:scaleX(0.644);transform-origin:0 50%;font-weight:700;">Tempo</span>
<span class="t" style="left:641.0px;top:753.5px;font-size:14px;color:#fff;transform:scaleX(0.644);transform-origin:0 50%;font-weight:700;">Time Signature</span>
<div class="r" style="left:1503px;top:52px;width:1px;height:776px;background:#0fcffa;"></div>
<svg class="s" style="left:1492px;top:26px;" width="24" height="28" viewBox="0 0 24 28"><polygon points="1.5,1.5 21.5,1.5 21.5,21.5 11.5,26.7 1.5,21.5" fill="#2a7896" fill-opacity="0.85" stroke="#0fcffa" stroke-width="1.15"/></svg>
<svg class="s" style="left:635px;top:13px;" width="25" height="22" viewBox="0 0 25 22"><polygon points="0.7,0.7 23.8,0.7 23.8,14.5 18.5,19.8 0.7,19.8" fill="#2a7c9a" stroke="#0fcffa" stroke-width="1.15"/></svg>
<span class="t tc" style="left:497.0px;top:18.5px;width:300px;font-size:9px;color:#fff;transform:scaleX(0.75);font-weight:400;">L</span>
<svg class="s" style="left:1515px;top:13px;" width="25" height="22" viewBox="0 0 25 22"><polygon points="0.7,0.7 23.8,0.7 23.8,19.8 6,19.8 0.7,14.5" fill="#2a7c9a" stroke="#0fcffa" stroke-width="1.15"/></svg>
<span class="t tc" style="left:1377.5px;top:18.5px;width:300px;font-size:9px;color:#fff;transform:scaleX(0.75);font-weight:400;">R</span>
<div class="r" style="left:1597px;top:277px;width:1px;height:551px;background:#55626d;"></div>
<div class="r" style="left:1596px;top:12px;width:3px;height:265px;background:#0fcffa;"></div>
<svg class="s" style="left:1601px;top:12px;" width="16" height="400" viewBox="0 0 16 400"><polygon points="0.5,0.5 9,0.5 15.5,7 15.5,397 9,404 0.5,404" fill="#3a4550" stroke="#4a5661"/><path d="M4 206.5l4-4l4 4" fill="none" stroke="#aab4bc" stroke-width="1.1"/></svg>
<svg class="s" style="left:1601px;top:420px;" width="16" height="410" viewBox="0 0 16 410"><polygon points="0.5,0.5 9,0.5 15.5,7 15.5,401 9,408 0.5,408" fill="#3a4550" stroke="#4a5661"/><path d="M4 202l4 4l4-4" fill="none" stroke="#d0d7dc" stroke-width="1.1"/></svg>
<div class="r" style="left:635px;top:831px;width:959px;height:1px;background:#4f5c67;"></div>
<div class="r" style="left:635px;top:830px;width:26px;height:3px;background:#0fcffa;"></div>
<svg class="s" style="left:635px;top:835px;" width="960" height="17" viewBox="0 0 960 17"><polygon points="0.5,0.5 479,0.5 479,9 472,15.5 8,15.5 0.5,9" fill="url(#ghs)" stroke="#4a5661"/><path d="M243 4l-4 4l4 4" fill="none" stroke="#8f9aa3" stroke-width="1.1"/><polygon points="481.5,0.5 958.5,0.5 958.5,9 951,15.5 489,15.5 481.5,9" fill="url(#ghs)" stroke="#4a5661"/><path d="M717 4l4 4l-4 4" fill="none" stroke="#d0d7dc" stroke-width="1.1"/></svg>
<div class="b " style="left:1596px;top:830px;width:22px;height:21px;background:#46525d"></div>
<div class="b " style="left:1596px;top:852px;width:22px;height:22px;background:#46525d"></div>
<svg class="s" style="left:1597px;top:831px;" width="20" height="20" viewBox="0 0 20 20"><g stroke="#e6eaed" stroke-width="1" fill="none"><path d="M10 3v14M3 10h14"/><path d="M8 5l2-2.2l2 2.2M8 15l2 2.2l2-2.2M5 8l-2.2 2l2.2 2M15 8l2.2 2l-2.2 2"/></g><rect x="8" y="8" width="4" height="4" fill="#3f4b56" stroke="#e6eaed" stroke-width="0.9" transform="rotate(45 10 10)"/></svg>
<svg class="s" style="left:1597px;top:853px;" width="20" height="20" viewBox="0 0 20 20"><rect x="6.5" y="3.5" width="10" height="10" fill="none" stroke="#aeb7be" stroke-width="1.1"/><rect x="3.5" y="6.5" width="10" height="10" fill="#3f4b56" stroke="#e6eaed" stroke-width="1.1"/></svg>
<svg class="s" style="left:1425px;top:854px;" width="160" height="20" viewBox="0 0 160 20"><path d="M34 9.5h100" stroke="#4a5661" stroke-width="1"/><polygon points="6.5,5 10,2.5 33.5,2.5 33.5,12 30,15.5 6.5,15.5" fill="#1f5f7c" stroke="#0fcffa" stroke-width="1.2"/><path d="M17.5 6v7M17.5 9.5h7" stroke="#cfe9f5" stroke-width="1"/><g stroke="#e6eaed" stroke-width="1.1"><path d="M135.5 8.0v3.0M137.5 6.9v5.2M139.5 5.8v7.4M141.5 4.699999999999999v9.6M143.5 3.5999999999999996v11.8M145.5 2.5v14.0M147.5 1.3999999999999986v16.2"/></g></svg>
<svg class="s" style="left:1642px;top:12px" width="266" height="46" viewBox="0 0 266 46"><polygon points="0.5,8.5 8.5,0.5 265.5,0.5 265.5,45.5 0.5,45.5" fill="url(#gp)" stroke="#5d6c78" stroke-width="1"/></svg>
<svg class="s" style="left:1642px;top:22px" width="64" height="26" viewBox="0 0 64 26"><polygon points="0.5,0.5 63.5,0.5 63.5,18.5 56.5,25.5 0.5,25.5" fill="#262d36" stroke="#5d6c78" stroke-width="1"/></svg>
<span class="t" style="left:1647.0px;top:28.8px;font-size:13.5px;color:#fff;transform:scaleX(0.698);transform-origin:0 50%;font-weight:700;">10-hit Snare</span>
<div class="b grn" style="left:1711px;top:23px;width:26px;height:25px;"></div>
<svg class="s" style="left:1711px;top:23px;" width="26" height="25" viewBox="0 0 26 25"><path d="M9.3 8.2a5.6 5.6 0 1 0 7.4 0" fill="none" stroke="#0d2a1b" stroke-width="1.6" stroke-linecap="round"/><path d="M13 5.5v6.5" stroke="#0d2a1b" stroke-width="1.6" stroke-linecap="round"/></svg>
<div class="b " style="left:1742px;top:23px;width:26px;height:25px;"></div>
<svg class="s" style="left:1742px;top:23px;" width="26" height="25" viewBox="0 0 26 25"><g fill="#fff"><rect x="11" y="4.3" width="4" height="1.4"/><rect x="7.7" y="5.6" width="10.6" height="1.6"/><path d="M8.4 8h9.2v11h-9.2zM9.9 9.2v8.6h1.3v-8.6zM12.35 9.2v8.6h1.3v-8.6zM14.8 9.2v8.6h1.3v-8.6z" fill-rule="evenodd"/></g></svg>
<div class="b " style="left:1773px;top:23px;width:50px;height:25px;"></div>
<span class="t tc" style="left:1648.0px;top:29.2px;width:300px;font-size:13.5px;color:#fff;transform:scaleX(0.644);font-weight:700;">Presets</span>
<svg class="s" style="left:1827px;top:22px" width="72" height="27" viewBox="0 0 72 27"><polygon points="0.5,6.9 6.9,0.5 71.5,0.5 71.5,20.1 65.1,26.5 0.5,26.5" fill="none" stroke="#2a313a" stroke-width="1"/><polygon points="1.5,7.5 7.5,1.5 70.5,1.5 70.5,19.5 64.5,25.5 1.5,25.5" fill="url(#gs)" stroke="#6d7c88" stroke-width="1"/></svg>
<span class="t" style="left:1849.0px;top:28.8px;font-size:13.5px;color:#fff;transform:scaleX(0.716);transform-origin:0 50%;font-weight:700;">0.0</span>
<span class="t" style="left:1863.0px;top:28.8px;font-size:13.5px;color:#6f7a84;transform:scaleX(0.72);transform-origin:0 50%;font-weight:400;">ms</span>
<svg class="s" style="left:1643px;top:69px" width="264" height="24" viewBox="0 0 264 24"><polygon points="0.5,6.5 6.5,0.5 263.5,0.5 263.5,23.5 0.5,23.5" fill="#353f49" stroke="#46525d" stroke-width="1"/></svg>
<svg class="s" style="left:1767px;top:74px;" width="16" height="12" viewBox="0 0 16 12"><path d="M1.5 9.5l6.5-6.5l6.5 6.5" fill="none" stroke="#aab4bc" stroke-width="1.2"/></svg>
<div class="r" style="left:1905px;top:104px;width:3px;height:725px;background:#0fcffa;"></div>
<svg class="s" style="left:1643px;top:840px" width="264" height="24" viewBox="0 0 264 24"><polygon points="0.5,0.5 263.5,0.5 263.5,17.5 257.5,23.5 0.5,23.5" fill="#353f49" stroke="#46525d" stroke-width="1"/></svg>
<svg class="s" style="left:1767px;top:846px;" width="16" height="12" viewBox="0 0 16 12"><path d="M1.5 2.5l6.5 6.5l6.5-6.5" fill="none" stroke="#aab4bc" stroke-width="1.2"/></svg>
<svg class="s" style="left:12px;top:889px" width="1896" height="108" viewBox="0 0 1896 108"><polygon points="0.5,9.5 9.5,0.5 1895.5,0.5 1895.5,107.5 0.5,107.5" fill="url(#gp)" stroke="#5d6c78" stroke-width="1"/></svg>
<div class="b " style="left:23px;top:900px;width:123px;height:34px;"></div>
<span class="t tc" style="left:-65.0px;top:911.0px;width:300px;font-size:14px;color:#fff;transform:scaleX(0.644);font-weight:700;">File</span>
<div class="b " style="left:154px;top:900px;width:122px;height:34px;"></div>
<span class="t tc" style="left:65.5px;top:911.0px;width:300px;font-size:14px;color:#fff;transform:scaleX(0.644);font-weight:700;">Edit</span>
<div class="b " style="left:284px;top:900px;width:123px;height:34px;"></div>
<span class="t tc" style="left:196.0px;top:911.0px;width:300px;font-size:14px;color:#fff;transform:scaleX(0.644);font-weight:700;">Options</span>
<svg class="s" style="left:52px;top:943.7px;" width="28" height="28" viewBox="0 0 28 28"><circle cx="14" cy="14" r="11.8" fill="none" stroke="#1f9ad8" stroke-width="1.2"/><g fill="#fff"><rect x="6" y="16.3" width="1.4" height="1.7"/><rect x="8.2" y="14.8" width="1.4" height="3.2"/><rect x="10.4" y="12" width="1.4" height="6"/><rect x="12.6" y="8" width="1.4" height="10"/><rect x="14.8" y="10.5" width="1.4" height="7.5"/><rect x="17" y="13.2" width="1.4" height="4.8"/><rect x="19.2" y="15.3" width="1.4" height="2.7"/><rect x="21.4" y="16.5" width="1.2" height="1.5"/></g></svg>
<div class="t" style="left:22.6px;top:971.6px;font-size:13.4px;font-weight:700;letter-spacing:0.17px;color:#fff">Soun<span style="color:#2a9bd6">dB</span>ridge</div>
<svg class="s" style="left:116px;top:948px" width="292" height="36" viewBox="0 0 292 36"><polygon points="0.5,7.9 7.9,0.5 291.5,0.5 291.5,28.1 284.1,35.5 0.5,35.5" fill="none" stroke="#2a313a" stroke-width="1"/><polygon points="1.5,8.5 8.5,1.5 290.5,1.5 290.5,27.5 283.5,34.5 1.5,34.5" fill="url(#gs3)" stroke="#6d7c88" stroke-width="1"/></svg>
<span class="t" style="left:127.0px;top:960.0px;font-size:14px;color:#fff;transform:scaleX(0.644);transform-origin:0 50%;font-weight:700;">Sample Rate</span>
<span class="t tr" style="left:97.0px;top:960.2px;width:300px;font-size:13.5px;color:#75818b;transform:scaleX(0.644);transform-origin:100% 50%;font-weight:700;">44.1 kHz</span>
<svg class="s" style="left:452px;top:900px" width="242" height="36" viewBox="0 0 242 36"><polygon points="0.5,8.9 8.9,0.5 241.5,0.5 241.5,27.1 233.1,35.5 0.5,35.5" fill="none" stroke="#2a313a" stroke-width="1"/><polygon points="1.5,9.5 9.5,1.5 240.5,1.5 240.5,26.5 232.5,34.5 1.5,34.5" fill="url(#gs)" stroke="#6d7c88" stroke-width="1"/></svg>
<div class="t" style="left:506.5px;top:909.3px;font-size:23px;font-family:'Liberation Mono',monospace;color:#38bdf0;transform:scaleX(.775);transform-origin:0 50%;font-weight:400">00:00:17:089</div>
<span class="t" style="left:474.0px;top:937.8px;font-size:11px;color:#8a96a0;transform:scaleX(0.68);transform-origin:0 50%;font-weight:400;">HDD:</span>
<div class="r" style="left:496px;top:937px;width:11px;height:11px;background:#262d36;border:1px solid #6a7783"></div>
<span class="t" style="left:510.0px;top:937.8px;font-size:11px;color:#8a96a0;transform:scaleX(0.68);transform-origin:0 50%;font-weight:400;">MIDI In:</span>
<div class="r" style="left:540px;top:937px;width:11px;height:11px;background:#262d36;border:1px solid #6a7783"></div>
<svg class="s" style="left:553px;top:937px;" width="16" height="11" viewBox="0 0 16 11"><rect x="0.5" y="0.5" width="15" height="10" fill="#4a5560" stroke="#6a7783"/><path d="M4 1v6M8 1v6M12 1v6" stroke="#161b21" stroke-width="1.8"/></svg>
<svg class="s" style="left:590px;top:935px;" width="90" height="14" viewBox="0 0 90 14"><path d="M1 7h30" stroke="#0fcffa" stroke-width="1.2"/><path d="M59 7h28" stroke="#2c353f" stroke-width="1"/><polygon points="30.5,5.5 33.5,2.5 59.5,2.5 59.5,8.5 56.5,11.5 30.5,11.5" fill="#2a86a8" stroke="#0fcffa" stroke-width="1.2"/><path d="M32 7h26" stroke="#1a5f7c"/><rect x="44" y="5" width="1.6" height="4" fill="#cfe9f5"/></svg>
<svg class="s" style="left:452px;top:948px" width="118" height="36" viewBox="0 0 118 36"><polygon points="0.5,7.9 7.9,0.5 117.5,0.5 117.5,28.1 110.1,35.5 0.5,35.5" fill="none" stroke="#2a313a" stroke-width="1"/><polygon points="1.5,8.5 8.5,1.5 116.5,1.5 116.5,27.5 109.5,34.5 1.5,34.5" fill="url(#gs)" stroke="#6d7c88" stroke-width="1"/><g transform="translate(1,1)"><path d="M1.6 9v24" stroke="#2a7fd0" stroke-width="1.6"/></g></svg>
<span class="t" style="left:461.0px;top:960.0px;font-size:14px;color:#fff;transform:scaleX(0.698);transform-origin:0 50%;font-weight:700;">CPU 1%</span>
<svg class="s" style="left:576px;top:948px" width="118" height="36" viewBox="0 0 118 36"><polygon points="0.5,7.9 7.9,0.5 117.5,0.5 117.5,28.1 110.1,35.5 0.5,35.5" fill="none" stroke="#2a313a" stroke-width="1"/><polygon points="1.5,8.5 8.5,1.5 116.5,1.5 116.5,27.5 109.5,34.5 1.5,34.5" fill="#2a323b" stroke="#6d7c88" stroke-width="1"/><g transform="translate(1,1)"><path d="M1 17.5h114" stroke="#20272e"/></g></svg>
<div class="b " style="left:738px;top:901px;width:44px;height:34px;"></div>
<div class="b " style="left:738px;top:949px;width:44px;height:34px;"></div>
<div class="b " style="left:790px;top:901px;width:44px;height:34px;"></div>
<div class="b " style="left:790px;top:949px;width:44px;height:34px;"></div>
<div class="b " style="left:842px;top:901px;width:44px;height:34px;"></div>
<div class="b " style="left:842px;top:949px;width:44px;height:34px;"></div>
<div class="b " style="left:894px;top:901px;width:44px;height:34px;"></div>
<div class="b " style="left:894px;top:949px;width:44px;height:34px;"></div>
<svg class="s" style="left:738px;top:900px;" width="43" height="33" viewBox="0 0 43 33"><g fill="#fff"><path d="M12 9.5h3v8h-3z"/><path d="M16.5 8.2l6-3.4l2.5 3.2z"/><rect x="16.3" y="7.6" width="16" height="11.5" rx="1.5"/></g></svg>
<span class="t tc" style="left:610.0px;top:921.8px;width:300px;font-size:11.5px;color:#fff;transform:scaleX(0.644);font-weight:700;">In</span>
<svg class="s" style="left:738px;top:948px;" width="43" height="33" viewBox="0 0 43 33"><g fill="#fff"><path d="M28.5 9.5h3v8h-3z"/><path d="M21 8.2l5-3.4l2 3.2z"/><rect x="11.3" y="7.6" width="16" height="11.5" rx="1.5"/></g></svg>
<span class="t tc" style="left:610.0px;top:969.8px;width:300px;font-size:11.5px;color:#fff;transform:scaleX(0.644);font-weight:700;">Out</span>
<svg class="s" style="left:790.5px;top:901.5px;" width="43" height="33" viewBox="0 0 43 33"><circle cx="21.3" cy="16.2" r="7" fill="#fff"/></svg>
<svg class="s" style="left:842.5px;top:901.5px;" width="43" height="33" viewBox="0 0 43 33"><path d="M17 9.3l11 7.2l-11 7.2z" fill="#fff"/></svg>
<svg class="s" style="left:894.5px;top:901.5px;" width="43" height="33" viewBox="0 0 43 33"><rect x="15.5" y="10.5" width="12" height="12" fill="#fff"/></svg>
<svg class="s" style="left:790.5px;top:949px;" width="43" height="33" viewBox="0 0 43 33"><g fill="none" stroke="#fff" stroke-width="1.6"><path d="M8.5 8.5h6v5l-3 2.5l-3-2.5zM11.5 16v8.5"/><path d="M22 10.5h9.5M28.5 7.5l3.2 3l-3.2 3"/><path d="M16.5 21.5h5l1-2l1.5 5l1.5-7l1.5 6l1-2h5" stroke-width="1.2"/></g><path d="M41.5 24v7.5h-7.5z" fill="#fff"/></svg>
<svg class="s" style="left:842.5px;top:949.5px;" width="43" height="33" viewBox="0 0 43 33"><g fill="#fff"><ellipse cx="17" cy="22.5" rx="3" ry="2.2"/><ellipse cx="26.6" cy="20.7" rx="3" ry="2.2"/><path d="M18.7 10.2l10.2-2v2.6l-10.2 2z"/><rect x="18.7" y="10.5" width="1.4" height="12"/><rect x="28.3" y="8.6" width="1.4" height="12"/></g></svg>
<span class="t tc" style="left:766.0px;top:960.0px;width:300px;font-size:14px;color:#fff;transform:scaleX(0.644);font-weight:700;">Tap</span>
<span class="t tc" style="left:713.5px;top:937.8px;width:300px;font-size:11.5px;color:#8494a0;transform:scaleX(0.74);font-weight:400;">Swing</span>
<svg class="s" style="left:983px;top:900px" width="142" height="36" viewBox="0 0 142 36"><polygon points="0.5,8.9 8.9,0.5 141.5,0.5 141.5,27.1 133.1,35.5 0.5,35.5" fill="none" stroke="#2a313a" stroke-width="1"/><polygon points="1.5,9.5 9.5,1.5 140.5,1.5 140.5,26.5 132.5,34.5 1.5,34.5" fill="url(#gs)" stroke="#6d7c88" stroke-width="1"/></svg>
<div class="t" style="left:1022px;top:909.2px;font-size:23px;font-family:'Liberation Mono',monospace;color:#38bdf0;transform:scaleX(.72);transform-origin:0 50%">108.000</div>
<span class="t tc" style="left:867.0px;top:937.8px;width:300px;font-size:11.5px;color:#8494a0;transform:scaleX(0.74);font-weight:400;">Count-In</span>
<span class="t tc" style="left:941.0px;top:937.8px;width:300px;font-size:11.5px;color:#8494a0;transform:scaleX(0.74);font-weight:400;">Time Sig.</span>
<div class="b " style="left:984px;top:949px;width:66px;height:34px;"></div>
<span class="t tc" style="left:866.5px;top:960.0px;width:300px;font-size:14px;color:#fff;transform:scaleX(0.662);font-weight:700;">2 Bar</span>
<div class="b " style="left:1058px;top:949px;width:66px;height:34px;"></div>
<span class="t tc" style="left:940.8px;top:960.0px;width:300px;font-size:14px;color:#fff;transform:scaleX(0.805);font-weight:700;">4/4</span>
<svg class="s" style="left:1169px;top:901px" width="110" height="25" viewBox="0 0 110 25"><polygon points="0.5,6.9 6.9,0.5 109.5,0.5 109.5,18.1 103.1,24.5 0.5,24.5" fill="none" stroke="#2a313a" stroke-width="1"/><polygon points="1.5,7.5 7.5,1.5 108.5,1.5 108.5,17.5 102.5,23.5 1.5,23.5" fill="url(#gs2)" stroke="#6a7985" stroke-width="1"/><g transform="translate(1,1)"><path d="M25 1v21" stroke="#64727e"/></g></svg>
<svg class="s" style="left:1176px;top:906px;" width="16" height="15" viewBox="0 0 16 15"><path d="M2 8.5l3.7 3.8l7.8-9.3" fill="none" stroke="#2bbdf0" stroke-width="1.4"/></svg>
<span class="t" style="left:1203.0px;top:907.9px;font-size:13.5px;color:#fff;transform:scaleX(0.662);transform-origin:0 50%;font-weight:700;">Snap</span>
<svg class="s" style="left:1169px;top:930px" width="110" height="25" viewBox="0 0 110 25"><polygon points="0.5,6.9 6.9,0.5 109.5,0.5 109.5,18.1 103.1,24.5 0.5,24.5" fill="none" stroke="#2a313a" stroke-width="1"/><polygon points="1.5,7.5 7.5,1.5 108.5,1.5 108.5,17.5 102.5,23.5 1.5,23.5" fill="url(#gs2)" stroke="#6a7985" stroke-width="1"/><g transform="translate(1,1)"><path d="M25 1v21" stroke="#64727e"/></g></svg>
<svg class="s" style="left:1176px;top:935px;" width="16" height="15" viewBox="0 0 16 15"><path d="M2 8.5l3.7 3.8l7.8-9.3" fill="none" stroke="#2bbdf0" stroke-width="1.4"/></svg>
<span class="t" style="left:1203.0px;top:936.9px;font-size:13.5px;color:#fff;transform:scaleX(0.662);transform-origin:0 50%;font-weight:700;">Loop</span>
<svg class="s" style="left:1169px;top:959px" width="110" height="25" viewBox="0 0 110 25"><polygon points="0.5,6.9 6.9,0.5 109.5,0.5 109.5,18.1 103.1,24.5 0.5,24.5" fill="none" stroke="#2a313a" stroke-width="1"/><polygon points="1.5,7.5 7.5,1.5 108.5,1.5 108.5,17.5 102.5,23.5 1.5,23.5" fill="url(#gs2)" stroke="#6a7985" stroke-width="1"/><g transform="translate(1,1)"><path d="M25 1v21" stroke="#64727e"/></g></svg>
<svg class="s" style="left:1176px;top:964px;" width="16" height="15" viewBox="0 0 16 15"><path d="M2 8.5l3.7 3.8l7.8-9.3" fill="none" stroke="#55616b" stroke-width="1.4"/></svg>
<span class="t" style="left:1203.0px;top:965.9px;font-size:13.5px;color:#fff;transform:scaleX(0.662);transform-origin:0 50%;font-weight:700;">Metro</span>
<svg class="s" style="left:1285px;top:901px" width="110" height="25" viewBox="0 0 110 25"><polygon points="0.5,6.9 6.9,0.5 109.5,0.5 109.5,18.1 103.1,24.5 0.5,24.5" fill="none" stroke="#2a313a" stroke-width="1"/><polygon points="1.5,7.5 7.5,1.5 108.5,1.5 108.5,17.5 102.5,23.5 1.5,23.5" fill="url(#gs2)" stroke="#6a7985" stroke-width="1"/></svg>
<span class="t" style="left:1299.0px;top:907.9px;font-size:13.5px;color:#fff;transform:scaleX(0.805);transform-origin:0 50%;font-weight:700;">1/8</span>
<svg class="s" style="left:1375px;top:906px;" width="14" height="12" viewBox="0 0 14 12"><path d="M2 8.5l4.5-4.5l4.5 4.5" fill="none" stroke="#fff" stroke-width="1.3"/></svg>
<svg class="s" style="left:1285px;top:930px" width="110" height="25" viewBox="0 0 110 25"><polygon points="0.5,6.9 6.9,0.5 109.5,0.5 109.5,18.1 103.1,24.5 0.5,24.5" fill="none" stroke="#2a313a" stroke-width="1"/><polygon points="1.5,7.5 7.5,1.5 108.5,1.5 108.5,17.5 102.5,23.5 1.5,23.5" fill="url(#gs2)" stroke="#6a7985" stroke-width="1"/><g transform="translate(1,1)"><path d="M25 1v21" stroke="#64727e"/></g></svg>
<svg class="s" style="left:1292px;top:935px;" width="16" height="15" viewBox="0 0 16 15"><path d="M2 8.5l3.7 3.8l7.8-9.3" fill="none" stroke="#2bbdf0" stroke-width="1.4"/></svg>
<span class="t" style="left:1319.0px;top:936.9px;font-size:13.5px;color:#fff;transform:scaleX(0.662);transform-origin:0 50%;font-weight:700;">Follow</span>
<svg class="s" style="left:1285px;top:959px" width="110" height="25" viewBox="0 0 110 25"><polygon points="0.5,6.9 6.9,0.5 109.5,0.5 109.5,18.1 103.1,24.5 0.5,24.5" fill="none" stroke="#2a313a" stroke-width="1"/><polygon points="1.5,7.5 7.5,1.5 108.5,1.5 108.5,17.5 102.5,23.5 1.5,23.5" fill="url(#gs2)" stroke="#6a7985" stroke-width="1"/><g transform="translate(1,1)"><path d="M25 1v21" stroke="#64727e"/></g></svg>
<svg class="s" style="left:1292px;top:964px;" width="16" height="15" viewBox="0 0 16 15"><path d="M2 8.5l3.7 3.8l7.8-9.3" fill="none" stroke="#55616b" stroke-width="1.4"/></svg>
<span class="t" style="left:1319.0px;top:965.9px;font-size:13.5px;color:#fff;transform:scaleX(0.662);transform-origin:0 50%;font-weight:700;">Count</span>
<div class="b " style="left:1439px;top:902px;width:34px;height:34px;"></div>
<div class="b grn" style="left:1439px;top:951px;width:34px;height:33px;"></div>
<div class="b " style="left:1481px;top:902px;width:34px;height:34px;"></div>
<div class="b grn" style="left:1481px;top:951px;width:34px;height:33px;"></div>
<div class="b blu" style="left:1523px;top:902px;width:34px;height:34px;"></div>
<div class="b " style="left:1523px;top:951px;width:34px;height:33px;"></div>
<div class="b " style="left:1565px;top:902px;width:34px;height:34px;"></div>
<div class="b " style="left:1565px;top:951px;width:34px;height:33px;"></div>
<div class="b " style="left:1607px;top:902px;width:34px;height:34px;"></div>
<div class="b grn" style="left:1607px;top:951px;width:34px;height:33px;"></div>
<div class="b " style="left:1649px;top:902px;width:34px;height:34px;"></div>
<div class="b " style="left:1649px;top:951px;width:34px;height:33px;"></div>
<svg class="s" style="left:1439px;top:902px;" width="34" height="34" viewBox="0 0 34 34"><path d="M9.5 9.5l9 2.2l-2.6 2.1l8.4 8.4l-2.3 2.3l-8.4-8.4l-2.1 2.6z" fill="#fff"/></svg>
<svg class="s" style="left:1481px;top:902px;" width="34" height="34" viewBox="0 0 34 34"><g transform="translate(17,17) rotate(45)" fill="#e6eaed"><rect x="-2.6" y="-9.5" width="5.2" height="13"/><path d="M-2.6 4.5h5.2l-2.6 5z"/></g></svg>
<svg class="s" style="left:1523px;top:902px;" width="34" height="34" viewBox="0 0 34 34"><g stroke="#0a1e2c" stroke-width="1.5" fill="none" stroke-linecap="round"><path d="M8.6 12.4L21 18.4M17 7L15.7 20.4"/><circle cx="22.9" cy="19.4" r="2"/><circle cx="15.6" cy="22.6" r="2"/></g></svg>
<svg class="s" style="left:1565px;top:902px;" width="34" height="34" viewBox="0 0 34 34"><path d="M8.8 14h3.4l5.8-4.5v15l-5.8-4.5h-3.4z" fill="#e6eaed"/><path d="M20.8 14l3.6 5.6M24.4 14l-3.6 5.6" stroke="#e6eaed" stroke-width="1.1"/></svg>
<span class="t tc" style="left:1474.0px;top:910.0px;width:300px;font-size:19px;color:#e6eaed;transform:scaleX(0.716);font-weight:700;">?</span>
<svg class="s" style="left:1649px;top:902px;" width="34" height="34" viewBox="0 0 34 34"><path d="M10.3 15.5a7.3 7.3 0 1 1 2.6 7.6" fill="none" stroke="#fff" stroke-width="1.8"/><path d="M6.3 14l4.2 5l3.6-5.4z" fill="#fff"/></svg>
<svg class="s" style="left:1439px;top:951px;" width="34" height="33" viewBox="0 0 34 33"><g stroke="#0d2a1b" stroke-width="1.2" fill="none"><path d="M9.5 7v19M9.5 9.5h3M9.5 15h3M9.5 20.5h3M9.5 26h3"/><rect x="7.5" y="7.5" width="3" height="3" fill="#57d08c"/><rect x="7.5" y="13" width="3" height="3" fill="#57d08c"/><rect x="7.5" y="18.5" width="3" height="3" fill="#57d08c"/><rect x="7.5" y="24" width="3" height="3" fill="#57d08c"/><path d="M14 9h12M14 14.5h12M14 20h12M14 25.5h12"/></g></svg>
<svg class="s" style="left:1481px;top:951px;" width="34" height="33" viewBox="0 0 34 33"><g stroke="#0d2a1b" stroke-width="1.3" fill="none"><rect x="6.5" y="10.5" width="21" height="16"/><path d="M6.5 16h21M6.5 21h21M17 8v18.5"/></g><path d="M14.3 6.5h5.4l-2.7 3.2z" fill="#0d2a1b"/></svg>
<svg class="s" style="left:1523px;top:951px;" width="34" height="33" viewBox="0 0 34 33"><g stroke="#c5ccd2" stroke-width="1.5" fill="none"><rect x="6.5" y="7.5" width="21" height="19"/><path d="M13.5 7.5v19M20.5 7.5v19" stroke-width="1"/></g><path d="M6.5 22l5-2l3.5-8l5 10l4-4.5l3.5 1" fill="none" stroke="#fff" stroke-width="1.3"/><circle cx="15" cy="12" r="1.5" fill="#fff"/><circle cx="20" cy="22" r="1.5" fill="#fff"/><circle cx="11.5" cy="20" r="1.5" fill="#fff"/><circle cx="24" cy="17.5" r="1.5" fill="#fff"/></svg>
<svg class="s" style="left:1565px;top:951px;" width="34" height="33" viewBox="0 0 34 33"><g stroke="#c5ccd2" stroke-width="1.5" fill="none"><rect x="6.5" y="7.5" width="21" height="19"/><path d="M11.7 7.5v19M17 7.5v19M22.3 7.5v19" stroke-width="1.2"/></g><g fill="#fff"><rect x="10" y="19" width="3.4" height="3.4"/><rect x="15.3" y="20.5" width="3.4" height="3.4"/><rect x="20.6" y="18" width="3.4" height="3.4"/></g></svg>
<svg class="s" style="left:1607px;top:951px;" width="34" height="33" viewBox="0 0 34 33"><g stroke="#0d2a1b" stroke-width="1.4" fill="none"><rect x="12.5" y="6.5" width="9" height="8"/><rect x="12.5" y="17.5" width="9" height="8"/><circle cx="16" cy="11" r="1.4"/><circle cx="18" cy="20.5" r="1.4"/></g></svg>
<svg class="s" style="left:1649px;top:951px;" width="34" height="33" viewBox="0 0 34 33"><path d="M23.7 15a7.3 7.3 0 1 0-2.6 7.6" fill="none" stroke="#fff" stroke-width="1.8"/><path d="M27.7 13.5l-4.2 5l-3.6-5.4z" fill="#fff"/></svg>
<div class="b " style="left:1729px;top:901px;width:80px;height:24px;"></div>
<span class="t tc" style="left:1618.0px;top:907.1px;width:300px;font-size:13.5px;color:#fff;transform:scaleX(0.644);font-weight:700;">Split</span>
<div class="b " style="left:1817px;top:901px;width:80px;height:24px;"></div>
<span class="t tc" style="left:1706.0px;top:907.1px;width:300px;font-size:13.5px;color:#fff;transform:scaleX(0.644);font-weight:700;">Merge</span>
<div class="b " style="left:1729px;top:930px;width:80px;height:24px;"></div>
<span class="t tc" style="left:1618.0px;top:936.1px;width:300px;font-size:13.5px;color:#fff;transform:scaleX(0.644);font-weight:700;">Freeze</span>
<div class="b " style="left:1817px;top:930px;width:80px;height:24px;"></div>
<span class="t tc" style="left:1706.0px;top:936.1px;width:300px;font-size:13.5px;color:#fff;transform:scaleX(0.644);font-weight:700;">Adjust</span>
<div class="b " style="left:1729px;top:959px;width:80px;height:24px;"></div>
<span class="t tc" style="left:1618.0px;top:965.1px;width:300px;font-size:13.5px;color:#fff;transform:scaleX(0.644);font-weight:700;">Quantize</span>
<div class="b " style="left:1817px;top:959px;width:80px;height:24px;"></div>
<span class="t tc" style="left:1706.0px;top:965.1px;width:300px;font-size:13.5px;color:#fff;transform:scaleX(0.644);font-weight:700;">Duplicate</span>
<svg class="s" style="left:362.5px;top:422.5px;" width="20" height="34" viewBox="0 0 20 34"><polygon points="0.5,5.5 5,0.5 15,0.5 19.5,5.5 19.5,27.5 15,32.5 5,32.5 0.5,27.5" fill="none" stroke="#5a6874"/><path d="M7.6 12.5l-3.6 4l3.6 4M12.4 12.5l3.6 4l-3.6 4" fill="none" stroke="#f0f3f5" stroke-width="1.3"/></svg>
<svg class="s" style="left:610.5px;top:422.5px;" width="20" height="34" viewBox="0 0 20 34"><polygon points="0.5,5.5 5,0.5 15,0.5 19.5,5.5 19.5,27.5 15,32.5 5,32.5 0.5,27.5" fill="none" stroke="#5a6874"/><path d="M7.6 12.5l-3.6 4l3.6 4M12.4 12.5l3.6 4l-3.6 4" fill="none" stroke="#f0f3f5" stroke-width="1.3"/></svg>
<svg class="s" style="left:1619.5px;top:422.5px;" width="20" height="34" viewBox="0 0 20 34"><polygon points="0.5,5.5 5,0.5 15,0.5 19.5,5.5 19.5,27.5 15,32.5 5,32.5 0.5,27.5" fill="none" stroke="#5a6874"/><path d="M7.6 12.5l-3.6 4l3.6 4M12.4 12.5l3.6 4l-3.6 4" fill="none" stroke="#f0f3f5" stroke-width="1.3"/></svg>
<div class="r" style="left:995px;top:120px;width:105px;height:88px;border:5px solid #fb0508;border-radius:2px"></div>
<div class="r" style="left:1427px;top:897px;width:54px;height:47px;border:5px solid #fb0508;border-radius:2px"></div>
<div class="r" style="left:1514px;top:897px;width:54px;height:47px;border:5px solid #fb0508;border-radius:2px"></div>
<div class="r" style="left:918px;top:46px;width:90px;height:90px;border-radius:50%;background:#8f141a;border:5px solid #fff;display:flex;align-items:center;justify-content:center;font-size:50px;line-height:1;color:#fff;font-family:'DejaVu Sans','Liberation Sans',sans-serif"><span style="display:block;margin-top:0px;transform:scaleX(.95)">2</span></div>
<div class="r" style="left:1469px;top:809px;width:90px;height:90px;border-radius:50%;background:#8f141a;border:5px solid #fff;display:flex;align-items:center;justify-content:center;font-size:50px;line-height:1;color:#fff;font-family:'DejaVu Sans','Liberation Sans',sans-serif"><span style="display:block;margin-top:0px;transform:scaleX(.95)">1</span></div>
</body></html>
